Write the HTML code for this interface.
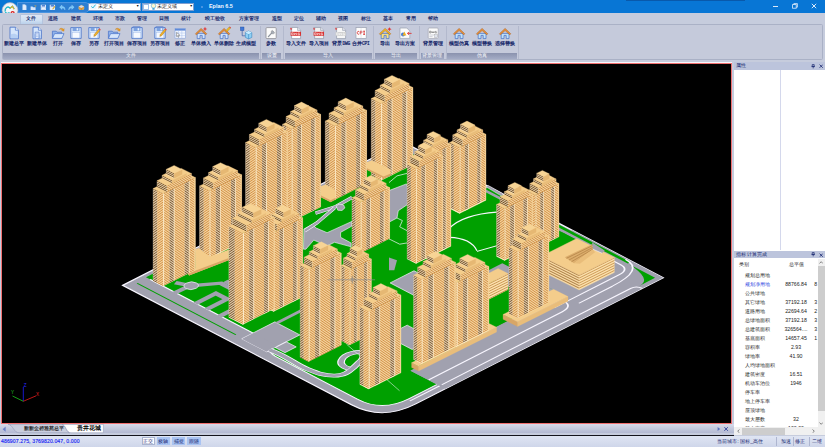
<!DOCTYPE html>
<html><head><meta charset="utf-8"><title>Eplan 6.5</title><style>
*{box-sizing:border-box;margin:0;padding:0}
html,body{width:825px;height:447px;overflow:hidden;background:#c6ccdd;font-family:"Liberation Sans", sans-serif;}
body{position:relative}
.abs{position:absolute}
.t{position:absolute;white-space:nowrap;line-height:1;}
.c{transform:translateX(-50%);text-align:center}
#title{left:0;top:0;width:825px;height:13.4px;background:#0876d5}
#tabs{left:0;top:13.4px;width:825px;height:11px;background:#c6ccdd}
.tab{font-size:5.15px;color:#121e66;top:16px;-webkit-text-stroke:.15px #121e66}
#ribbon{left:1.5px;top:24.2px;width:821.5px;height:36.3px;background:#c5cadb;border:0.6px solid #aab1c6;border-radius:1.5px}
.lbl{font-size:5.3px;color:#121e66;top:41.2px;-webkit-text-stroke:.2px #121e66}
.grp{position:absolute;top:53.2px;height:5.6px;background:linear-gradient(#8a92ae,#a3abc5);font-size:4.8px;color:#f6f8fd;text-align:center;line-height:5.6px;overflow:hidden}
.mono{font-family:"Liberation Mono",monospace;font-size:4.5px;letter-spacing:-.1px}
.sep{position:absolute;top:26px;height:33px;width:0.7px;background:#b3b9cd}
.ic{position:absolute;top:25.6px;width:14px;height:14px}
#scene{left:1.4px;top:62.6px;width:730.4px;height:361.4px;background:#000;border:1px solid #f07070}
.ph{position:absolute;left:733.6px;width:91.4px;height:7.6px;background:#bcc4dc;font-size:5.3px;color:#16246e;line-height:7.6px;padding-left:2.4px;white-space:nowrap;overflow:hidden}
.row{font-size:5.2px;color:#1c1c1c}
</style></head><body>
<div id="title" class="abs"></div>
<div class="abs" style="left:626px;top:0;width:119px;height:1.2px;background:#0a56a6;opacity:.9"></div>
<div class="abs" style="left:17px;top:2.2px;width:73px;height:10.4px;background:#2c7ed2;border-radius:0 5px 5px 0;border:0.5px solid #4a94e0"></div>
<svg class="abs" style="left:1px;top:1px" width="18" height="19" viewBox="0 0 18 19"><defs><radialGradient id="orb" cx="50%" cy="35%" r="65%"><stop offset="0" stop-color="#ffffff"/><stop offset=".7" stop-color="#e8eaf0"/><stop offset="1" stop-color="#b8bcc8"/></radialGradient></defs><circle cx="9" cy="9.6" r="8" fill="url(#orb)" stroke="#9aa4be" stroke-width=".6"/><path d="M4.2 10.5 C3.5 7 7 4.5 9 7.2 L11.5 5.2 L13.3 8" fill="none" stroke="#19b7c9" stroke-width="1.3"/><path d="M9 7.4 L11.4 5.4 L13 8.2" fill="none" stroke="#f0b020" stroke-width="1.1"/><path d="M4.4 10.8 C5 12.8 7 13 8.5 11.5" fill="none" stroke="#19b7c9" stroke-width="1.2"/><circle cx="11.6" cy="12" r="2.1" fill="#d82020"/><circle cx="11.6" cy="12" r=".8" fill="#fff"/></svg>
<svg class="abs" style="left:21.1px;top:3.6px;opacity:.9" width="6.8" height="6.8" viewBox="0 0 9 9"><path d="M2.2 .8H5.4L7 2.4V8.2H2.2Z" fill="#f4f8ff" stroke="#d0e2fa" stroke-width=".5"/></svg>
<svg class="abs" style="left:30.1px;top:3.6px;opacity:.9" width="6.8" height="6.8" viewBox="0 0 9 9"><path d="M.8 3.4H3.4L4 4.2H7.4V7.8H.8Z" fill="#eaf2ff"/><path d="M5 2.6C5.8 1.4 7 1.4 7.8 2.4L8.2 1.8V3.8L6.4 3.4L7 3C6.4 2.4 5.8 2.4 5 2.6Z" fill="#f0b030"/></svg>
<svg class="abs" style="left:39.6px;top:3.6px;opacity:.9" width="6.8" height="6.8" viewBox="0 0 9 9"><rect x="1" y="1" width="7" height="7" fill="#eef4ff"/><rect x="2.4" y="1.2" width="4.2" height="2.2" fill="#5c86d0"/><rect x="2.2" y="4.6" width="4.6" height="3" fill="#fff" stroke="#9ab4e4" stroke-width=".3"/></svg>
<svg class="abs" style="left:49.1px;top:3.6px;opacity:.9" width="6.8" height="6.8" viewBox="0 0 9 9"><rect x="1" y="1" width="7" height="7" fill="#eef4ff"/><rect x="2.4" y="1.2" width="4.2" height="2.2" fill="#5c86d0"/><rect x="2.2" y="4.6" width="4.6" height="3" fill="#fff"/><path d="M4.6 6L7.6 2.4L8.6 3.2L5.6 6.8L4.4 7.2Z" fill="#f0b020"/></svg>
<svg class="abs" style="left:59.1px;top:3.6px;opacity:.9" width="6.8" height="6.8" viewBox="0 0 9 9"><path d="M.8 4.2L4 1.4V3.2C7 3.2 8.2 5 8 8C7.2 6.2 6 5.4 4 5.4V7.2Z" fill="#7fd0ff" stroke="#c8ecff" stroke-width=".4"/></svg>
<svg class="abs" style="left:68.1px;top:3.6px;opacity:.9" width="6.8" height="6.8" viewBox="0 0 9 9"><path d="M8.2 4.2L5 1.4V3.2C2 3.2 .8 5 1 8C1.8 6.2 3 5.4 5 5.4V7.2Z" fill="#7fd0ff" stroke="#c8ecff" stroke-width=".4"/></svg>
<svg class="abs" style="left:78.1px;top:3.6px;opacity:.9" width="6.8" height="6.8" viewBox="0 0 9 9"><path d="M1 3.4L4.5 1.6L8 3.4V6.8L4.5 8.6L1 6.8Z" fill="#f0a030" stroke="#f8d8a0" stroke-width=".4"/><path d="M1 3.4L4.5 5.2L8 3.4L4.5 1.6Z" fill="#e8e8f0"/><path d="M4.5 5.2V8.6" stroke="#b06a10" stroke-width=".4"/></svg>
<div class="abs" style="left:88.4px;top:2.6px;width:52.6px;height:8.4px;background:#fff;border:0.5px solid #7f9fd0"></div>
<svg class="abs" style="left:90px;top:3.4px" width="7" height="7" viewBox="0 0 7 7"><rect x=".4" y=".6" width="6" height="5.8" fill="#eaf6ff"/><path d="M1.4 3.4L2.8 5L5.6 1.6" fill="none" stroke="#28b8d8" stroke-width="1"/></svg>
<div class="t" style="left:97.5px;top:4.1px;font-size:5.4px;color:#111">未定义</div>
<div class="t" style="left:136px;top:5.2px;font-size:3.4px;color:#111">▼</div>
<div class="abs" style="left:141.6px;top:2.6px;width:52.4px;height:8.4px;background:#fff;border:0.5px solid #7f9fd0"></div>
<div class="abs" style="left:143px;top:3.6px;width:5.6px;height:6.2px;background:#fff;border:0.5px solid #9fc0ea"></div>
<svg class="abs" style="left:149.5px;top:3.2px" width="7" height="7.4" viewBox="0 0 7 7.4"><circle cx="3.5" cy="2.8" r="2.3" fill="#fdf8d0" stroke="#4aa8d8" stroke-width=".6"/><rect x="2.4" y="5" width="2.2" height="1.8" fill="#4aa8d8"/></svg>
<div class="t" style="left:156.6px;top:4.1px;font-size:5.4px;color:#111">未定义域</div>
<div class="t" style="left:189.4px;top:5.2px;font-size:3.4px;color:#111">▼</div>
<div class="abs" style="left:201.4px;top:6.2px;width:1.4px;height:1.4px;background:#5c9fe6;border-radius:1px"></div>
<div class="t" style="left:209px;top:4px;font-size:5.4px;color:#f4f8ff;font-weight:bold">Eplan 6.5</div>
<div class="abs" style="left:773.2px;top:6.1px;width:4.4px;height:0.8px;background:#d8e8fa"></div>
<svg class="abs" style="left:792px;top:3.4px" width="6" height="6" viewBox="0 0 6 6"><rect x=".6" y="1.6" width="3.6" height="3.6" fill="none" stroke="#e4effc" stroke-width=".8"/><path d="M1.8 1.6V.6H5.4V4.2H4.2" fill="none" stroke="#e4effc" stroke-width=".8"/></svg>
<svg class="abs" style="left:811.4px;top:3.4px" width="6" height="6" viewBox="0 0 6 6"><path d="M.8 .8L5.2 5.2M5.2 .8L.8 5.2" stroke="#f0f6ff" stroke-width=".9"/></svg>
<div id="tabs" class="abs"></div>
<div class="abs" style="left:20px;top:14px;width:22.5px;height:10.4px;background:linear-gradient(#dfe6f4,#cfe0f2 60%,#b9cfea);border:0.5px solid #b4c4de;border-bottom:none;border-radius:1.5px 1.5px 0 0"></div>
<div class="t c tab" style="left:31.1px">文件</div>
<div class="t c tab" style="left:53.1px">道路</div>
<div class="t c tab" style="left:75.6px">建筑</div>
<div class="t c tab" style="left:97.6px">环境</div>
<div class="t c tab" style="left:119.6px">市政</div>
<div class="t c tab" style="left:142px">管理</div>
<div class="t c tab" style="left:164.4px">日照</div>
<div class="t c tab" style="left:186.4px">核计</div>
<div class="t c tab" style="left:214.7px">竣工验收</div>
<div class="t c tab" style="left:248.5px">方案管理</div>
<div class="t c tab" style="left:276.8px">造型</div>
<div class="t c tab" style="left:298.5px">定位</div>
<div class="t c tab" style="left:320.8px">辅助</div>
<div class="t c tab" style="left:343.2px">视图</div>
<div class="t c tab" style="left:365.6px">标注</div>
<div class="t c tab" style="left:388px">基本</div>
<div class="t c tab" style="left:410.6px">常用</div>
<div class="t c tab" style="left:433.2px">帮助</div>
<div id="ribbon" class="abs"></div>
<svg class="ic" style="left:7.4px" viewBox="0 0 14 14"><path d="M3 1.2H8.4L11.4 4.2V12.8H3Z" fill="#d6e6fb" stroke="#4470c8" stroke-width=".8" stroke-linejoin="round"/><path d="M8.4 1.2V4.2H11.4" fill="#f4f8ff" stroke="#4470c8" stroke-width=".7"/><path d="M3.6 8.5C6 7.2 9 7.6 10.8 9.4V12.2H3.6Z" fill="#a9c6f0" opacity=".7"/></svg>
<div class="t c lbl" style="left:14.4px">新建总平</div>
<svg class="ic" style="left:30px" viewBox="0 0 14 14"><path d="M3 1.2H8.4L11.4 4.2V12.8H3Z" fill="#d6e6fb" stroke="#4470c8" stroke-width=".8" stroke-linejoin="round"/><path d="M8.4 1.2V4.2H11.4" fill="#f4f8ff" stroke="#4470c8" stroke-width=".7"/><path d="M3.6 8.5C6 7.2 9 7.6 10.8 9.4V12.2H3.6Z" fill="#a9c6f0" opacity=".7"/><path d="M5.2 6.2H9V12.4H5.2ZM6.4 7.4V8.4M7.8 7.4V8.4M6.4 9.6V10.6M7.8 9.6V10.6" fill="#eaf2ff" stroke="#4470c8" stroke-width=".6"/></svg>
<div class="t c lbl" style="left:37px">新建单体</div>
<svg class="ic" style="left:50.8px" viewBox="0 0 14 14"><path d="M1.4 5.2H5.2L6 6.2H10.6V12.2H1.4Z" fill="#8fb2ea" stroke="#4470c8" stroke-width=".7" stroke-linejoin="round"/><path d="M3.6 7.6H13L10.8 12.4H1.4Z" fill="#d6e6fb" stroke="#4470c8" stroke-width=".7" stroke-linejoin="round"/><path d="M8.2 3.4C9.6 1.8 11.4 2 12.4 3.2L13.2 2.6L13 5.2L10.6 4.6L11.4 4C10.6 3 9.4 3 8.2 3.4Z" fill="#f0a020" stroke="#b87010" stroke-width=".3"/></svg>
<div class="t c lbl" style="left:57.8px">打开</div>
<svg class="ic" style="left:68.8px" viewBox="0 0 14 14"><path d="M1.8 1.6H12.2V12.4H1.8Z" fill="#d6e6fb" stroke="#4470c8" stroke-width=".8" stroke-linejoin="round"/><rect x="3.6" y="1.8" width="6.8" height="3.2" fill="#7ea3e0"/><rect x="7.6" y="2.2" width="1.6" height="2.2" fill="#eef4ff"/><rect x="3.2" y="6.4" width="7.6" height="5.6" fill="#f6f9ff" stroke="#9bb7e6" stroke-width=".4"/></svg>
<div class="t c lbl" style="left:75.8px">保存</div>
<svg class="ic" style="left:86.6px" viewBox="0 0 14 14"><path d="M1.8 1.6H12.2V12.4H1.8Z" fill="#d6e6fb" stroke="#4470c8" stroke-width=".8" stroke-linejoin="round"/><rect x="3.6" y="1.8" width="6.8" height="3.2" fill="#7ea3e0"/><rect x="7.6" y="2.2" width="1.6" height="2.2" fill="#eef4ff"/><rect x="3.2" y="6.4" width="7.6" height="5.6" fill="#f6f9ff" stroke="#9bb7e6" stroke-width=".4"/><path d="M7.2 8.6L11.6 3.2L13 4.4L8.6 9.8L6.8 10.4Z" fill="#f2b22a" stroke="#9a6a10" stroke-width=".4"/><path d="M11.6 3.2L12.4 2.2L13.8 3.4L13 4.4Z" fill="#e05050"/></svg>
<div class="t c lbl" style="left:93.6px">另存</div>
<svg class="ic" style="left:106.8px" viewBox="0 0 14 14"><path d="M1.4 5.2H5.2L6 6.2H10.6V12.2H1.4Z" fill="#8fb2ea" stroke="#4470c8" stroke-width=".7" stroke-linejoin="round"/><path d="M3.6 7.6H13L10.8 12.4H1.4Z" fill="#d6e6fb" stroke="#4470c8" stroke-width=".7" stroke-linejoin="round"/><path d="M8.2 3.4C9.6 1.8 11.4 2 12.4 3.2L13.2 2.6L13 5.2L10.6 4.6L11.4 4C10.6 3 9.4 3 8.2 3.4Z" fill="#f0a020" stroke="#b87010" stroke-width=".3"/></svg>
<div class="t c lbl" style="left:113.8px">打开项目</div>
<svg class="ic" style="left:129.6px" viewBox="0 0 14 14"><path d="M1.2 2.6L3 .8H10.4" fill="none" stroke="#4470c8" stroke-width=".7"/><path d="M1.8 1.6H12.2V12.4H1.8Z" fill="#d6e6fb" stroke="#4470c8" stroke-width=".8" stroke-linejoin="round"/><rect x="3.6" y="1.8" width="6.8" height="3.2" fill="#7ea3e0"/><rect x="7.6" y="2.2" width="1.6" height="2.2" fill="#eef4ff"/><rect x="3.2" y="6.4" width="7.6" height="5.6" fill="#f6f9ff" stroke="#9bb7e6" stroke-width=".4"/></svg>
<div class="t c lbl" style="left:136.6px">保存项目</div>
<svg class="ic" style="left:152.8px" viewBox="0 0 14 14"><path d="M1.2 2.6L3 .8H10.4" fill="none" stroke="#4470c8" stroke-width=".7"/><path d="M1.8 1.6H12.2V12.4H1.8Z" fill="#d6e6fb" stroke="#4470c8" stroke-width=".8" stroke-linejoin="round"/><rect x="3.6" y="1.8" width="6.8" height="3.2" fill="#7ea3e0"/><rect x="7.6" y="2.2" width="1.6" height="2.2" fill="#eef4ff"/><rect x="3.2" y="6.4" width="7.6" height="5.6" fill="#f6f9ff" stroke="#9bb7e6" stroke-width=".4"/><path d="M7.2 8.6L11.6 3.2L13 4.4L8.6 9.8L6.8 10.4Z" fill="#f2b22a" stroke="#9a6a10" stroke-width=".4"/><path d="M11.6 3.2L12.4 2.2L13.8 3.4L13 4.4Z" fill="#e05050"/></svg>
<div class="t c lbl" style="left:159.8px">另存项目</div>
<svg class="ic" style="left:172.6px" viewBox="0 0 14 14"><rect x="2" y="2.6" width="10.4" height="9.6" fill="#f4f8ff" stroke="#8aa6dc" stroke-width=".6"/><rect x="2" y="2.6" width="10.4" height="2" fill="#5f8ad8"/><path d="M2 7H12.4M2 9.6H12.4M5.4 4.6V12.2M8.8 4.6V12.2" stroke="#a9c0ea" stroke-width=".5"/><path d="M3.6 6.4L6.8 9.2L5.4 9.4L6 10.8L5.2 11.2L4.6 9.8L3.6 10.6Z" fill="#fff" stroke="#333" stroke-width=".4"/></svg>
<div class="t c lbl" style="left:179.6px">修正</div>
<svg class="ic" style="left:194.2px" viewBox="0 0 14 14"><path d="M3.2 7.4V12.6H6V9.4H8.2V12.6H11V7.4Z" fill="#cfe2fb" stroke="#4470c8" stroke-width=".7" stroke-linejoin="round"/><path d="M1.4 7.8L7.1 2.4L12.8 7.8L11.8 8.8L7.1 4.6L2.4 8.8Z" fill="#e8923a" stroke="#a85a18" stroke-width=".5" stroke-linejoin="round"/><path d="M10.2 2.4L11 .8L11.8 2.4L13.4 3L11.8 3.6L11 5.2L10.2 3.6L8.8 3Z" fill="#e03838"/></svg>
<div class="t c lbl" style="left:201.2px">单体插入</div>
<svg class="ic" style="left:217.4px" viewBox="0 0 14 14"><path d="M3.2 7.4V12.6H6V9.4H8.2V12.6H11V7.4Z" fill="#cfe2fb" stroke="#4470c8" stroke-width=".7" stroke-linejoin="round"/><path d="M1.4 7.8L7.1 2.4L12.8 7.8L11.8 8.8L7.1 4.6L2.4 8.8Z" fill="#e8923a" stroke="#a85a18" stroke-width=".5" stroke-linejoin="round"/><path d="M9 4.4L12.2 1L13.4 2.2L10.2 5.6Z" fill="#f0c020" stroke="#a07808" stroke-width=".4"/><path d="M12.2 1L12.8 .4L14 1.6L13.4 2.2Z" fill="#e03838"/></svg>
<div class="t c lbl" style="left:224.4px">单体删除</div>
<svg class="ic" style="left:239px" viewBox="0 0 14 14"><rect x="1.4" y="1" width="3.6" height="3.6" fill="#3f78d8" stroke="#204a9a" stroke-width=".4"/><path d="M3.2 4.6V9.8H6.4" fill="none" stroke="#204a9a" stroke-width=".6"/><path d="M6.4 6.6L9.6 5L12.8 6.6V11.4L9.6 13L6.4 11.4Z" fill="#8fd0f4" stroke="#2a7ab8" stroke-width=".5"/><path d="M6.4 6.6L9.6 8.2L12.8 6.6M9.6 8.2V13" fill="none" stroke="#2a7ab8" stroke-width=".5"/><path d="M6.4 6.6L9.6 5L12.8 6.6L9.6 8.2Z" fill="#c8ecff"/></svg>
<div class="t c lbl" style="left:246px">生成模型</div>
<svg class="ic" style="left:264.4px" viewBox="0 0 14 14"><rect x="2" y="1.6" width="10.2" height="11" rx="1" fill="#fbfbfb" stroke="#8c8c92" stroke-width=".8"/><path d="M4.4 10.6L9 5.6" stroke="#8e949e" stroke-width="1.3" stroke-linecap="round"/><path d="M8.4 4.2A1.9 1.9 0 1 0 10.8 6.6L9.4 6L9 5Z" fill="#a8aeb8" stroke="#777" stroke-width=".3"/></svg>
<div class="t c lbl" style="left:271.4px">参数</div>
<svg class="ic" style="left:289px" viewBox="0 0 14 14"><path d="M2.6 1.4H8.6L11.6 4.4V12.6H2.6Z" fill="#ffffff" stroke="#8f96a8" stroke-width=".7" stroke-linejoin="round"/><path d="M8.6 1.4V4.4H11.6" fill="#e6e8ee" stroke="#8f96a8" stroke-width=".6"/><rect x="1.6" y="5.8" width="10.4" height="4" fill="#d83030"/><path d="M2.6 6.8H4.2V8.8H2.6ZM5.4 6.8V8.8M5.4 8.8L6.4 7.4L7.4 8.8V6.8M10.6 7H9V8.8H10.6V7.9H9.9" fill="none" stroke="#fff" stroke-width=".55"/><path d="M1 1.6L3.4 2.8L1.8 4.2Z" fill="#e04040"/></svg>
<div class="t c lbl" style="left:296px">导入文件</div>
<svg class="ic" style="left:312.2px" viewBox="0 0 14 14"><path d="M2.6 1.4H8.6L11.6 4.4V12.6H2.6Z" fill="#f1f1f1" stroke="#8f96a8" stroke-width=".7" stroke-linejoin="round"/><path d="M8.6 1.4V4.4H11.6" fill="#e6e8ee" stroke="#8f96a8" stroke-width=".6"/><rect x="1.6" y="5.8" width="10.4" height="4" fill="#d83030"/><path d="M2.6 6.8H4.2V8.8H2.6ZM5.4 6.8V8.8M5.4 8.8L6.4 7.4L7.4 8.8V6.8M10.6 7H9V8.8H10.6V7.9H9.9" fill="none" stroke="#fff" stroke-width=".55"/><path d="M1 1.6L3.4 2.8L1.8 4.2Z" fill="#e04040"/><path d="M1.4 2.4L2.6 1.4" stroke="#8f96a8" stroke-width=".6"/></svg>
<div class="t c lbl" style="left:319.2px">导入项目</div>
<svg class="ic" style="left:334.3px" viewBox="0 0 14 14"><path d="M2.6 1.4H8.6L11.6 4.4V12.6H2.6Z" fill="#f7f7f7" stroke="#8f96a8" stroke-width=".7" stroke-linejoin="round"/><path d="M8.6 1.4V4.4H11.6" fill="#e6e8ee" stroke="#8f96a8" stroke-width=".6"/><rect x="1.6" y="6" width="10.4" height="3.8" fill="#cfcfcf"/><path d="M2.6 6.9H4.2V8.9H2.6ZM5.4 6.9V8.9M5.4 8.9L6.4 7.5L7.4 8.9V6.9M10.6 7.1H9V8.9H10.6V8H9.9" fill="none" stroke="#fff" stroke-width=".55"/><path d="M1 1.6L3.4 2.8L1.8 4.2Z" fill="#e04040"/></svg>
<div class="t c lbl" style="left:341.3px">背景<span class="mono">DWG</span></div>
<svg class="ic" style="left:353.8px" viewBox="0 0 14 14"><rect x="2" y="1.6" width="10.2" height="10.8" fill="#fdfdfd" stroke="#9aa0b0" stroke-width=".7"/><rect x="2.4" y="4.6" width="9.4" height="4" fill="#fff"/><path d="M5 5.4C3.6 5.2 3.2 6 3.2 6.8C3.2 7.8 3.8 8.4 5 8.2M6.2 8.4V5.2H7.4C8.4 5.2 8.4 6.8 7.4 6.8H6.2M9.2 5.2H11M10.1 5.2V8.4M9.2 8.4H11" fill="none" stroke="#d42020" stroke-width=".8"/><path d="M7.1 1.6V12.4" stroke="#c8ccd8" stroke-width=".4"/></svg>
<div class="t c lbl" style="left:360.8px">合并<span class="mono">CPI</span></div>
<svg class="ic" style="left:377.5px" viewBox="0 0 14 14"><path d="M3.2 7.4V12.6H6V9.4H8.2V12.6H11V7.4Z" fill="#f8e080" stroke="#4470c8" stroke-width=".7" stroke-linejoin="round"/><path d="M1.4 7.8L7.1 2.4L12.8 7.8L11.8 8.8L7.1 4.6L2.4 8.8Z" fill="#f4c020" stroke="#a85a18" stroke-width=".5" stroke-linejoin="round"/><path d="M10.6 2.6L11.4 1.2L12.2 2.6L13.6 3.2L12.2 3.8L11.4 5.2L10.6 3.8L9.4 3.2Z" fill="#e03838"/></svg>
<div class="t c lbl" style="left:384.5px">导出</div>
<svg class="ic" style="left:397.8px" viewBox="0 0 14 14"><path d="M2 2H8.8L11.8 5V12.4H2Z" fill="#fbfbfb" stroke="#9aa0b0" stroke-width=".7" stroke-linejoin="round"/><circle cx="5" cy="8.6" r="2" fill="#3f78d8"/><path d="M6.4 5.4L8.4 9.6H4.4Z" fill="#f0b020"/><path d="M13.6 7.4H9.6M11 6L9.4 7.4L11 8.8" fill="none" stroke="#e03838" stroke-width=".9"/></svg>
<div class="t c lbl" style="left:404.8px">导出方案</div>
<svg class="ic" style="left:425.5px" viewBox="0 0 14 14"><rect x="2.2" y="2" width="10" height="10.4" rx="1" fill="#fcfcfc" stroke="#a0a4b0" stroke-width=".7"/><path d="M3.6 5.2H5V7H3.6ZM6 5.2V7L7 5.8L8 7V5.2M10.6 5.4H9.2V7H10.6V6.2" fill="none" stroke="#555" stroke-width=".5"/><path d="M3.4 9H8M3.4 10.6H6.6" stroke="#b0b4c0" stroke-width=".6"/><rect x="8.6" y="8.6" width="3.2" height="3" fill="#dfe3ee" stroke="#888" stroke-width=".3"/></svg>
<div class="t c lbl" style="left:432.5px">背景管理</div>
<svg class="ic" style="left:451.8px" viewBox="0 0 14 14"><path d="M3.2 7.4V12.6H6V9.4H8.2V12.6H11V7.4Z" fill="#bfe0f8" stroke="#4470c8" stroke-width=".7" stroke-linejoin="round"/><path d="M1.4 7.8L7.1 2.4L12.8 7.8L11.8 8.8L7.1 4.6L2.4 8.8Z" fill="#e8923a" stroke="#a85a18" stroke-width=".5" stroke-linejoin="round"/></svg>
<div class="t c lbl" style="left:458.8px">模型仿真</div>
<svg class="ic" style="left:474.8px" viewBox="0 0 14 14"><path d="M3.2 7.4V12.6H6V9.4H8.2V12.6H11V7.4Z" fill="#bfe0f8" stroke="#4470c8" stroke-width=".7" stroke-linejoin="round"/><path d="M1.4 7.8L7.1 2.4L12.8 7.8L11.8 8.8L7.1 4.6L2.4 8.8Z" fill="#e8923a" stroke="#a85a18" stroke-width=".5" stroke-linejoin="round"/></svg>
<div class="t c lbl" style="left:481.8px">模型替换</div>
<svg class="ic" style="left:497.6px" viewBox="0 0 14 14"><path d="M3.2 7.4V12.6H6V9.4H8.2V12.6H11V7.4Z" fill="#bfe0f8" stroke="#4470c8" stroke-width=".7" stroke-linejoin="round"/><path d="M1.4 7.8L7.1 2.4L12.8 7.8L11.8 8.8L7.1 4.6L2.4 8.8Z" fill="#e8923a" stroke="#a85a18" stroke-width=".5" stroke-linejoin="round"/></svg>
<div class="t c lbl" style="left:504.6px">选择替换</div>
<div class="grp" style="left:3.2px;width:255.40000000000003px">文件</div>
<div class="grp" style="left:261.8px;width:19.599999999999966px">设置</div>
<div class="grp" style="left:284.6px;width:87.39999999999998px">导入</div>
<div class="grp" style="left:374.8px;width:42.599999999999966px">导出</div>
<div class="grp" style="left:420.6px;width:23.599999999999966px">背景管理</div>
<div class="grp" style="left:447.4px;width:69.20000000000005px">仿真</div>
<div class="sep" style="left:260.2px"></div>
<div class="sep" style="left:283px"></div>
<div class="sep" style="left:373.4px"></div>
<div class="sep" style="left:419px"></div>
<div class="sep" style="left:445.8px"></div>
<div class="sep" style="left:518px"></div>
<div class="abs" style="left:1px;top:62px;width:731px;height:1px;background:#f6f7fb"></div>
<div id="scene" class="abs"></div>
<svg class="abs" style="left:2.4px;top:63.6px" width="728.4" height="358.6" viewBox="2.4 63.6 728.4 358.6">
<defs><pattern id="sl" width="40" height="2.0" patternUnits="userSpaceOnUse"><rect width="40" height="2.0" fill="#f4d097"/><rect width="40" height="1.04" fill="#96673a"/></pattern><pattern id="sr" width="40" height="2.0" patternUnits="userSpaceOnUse"><rect width="40" height="2.0" fill="#ffe8be"/><rect width="40" height="0.96" fill="#bd7c3a"/></pattern><pattern id="sl2" width="40" height="2.0" patternUnits="userSpaceOnUse"><rect width="40" height="2.0" fill="#f4d097"/><rect width="40" height="1.0" fill="#8a5d30"/></pattern><pattern id="sr2" width="40" height="2.0" patternUnits="userSpaceOnUse"><rect width="40" height="2.0" fill="#ffe8be"/><rect width="40" height="0.9" fill="#b27436"/></pattern><pattern id="ll" width="40" height="2.5" patternUnits="userSpaceOnUse"><rect width="40" height="2.5" fill="#f0c98c"/><rect width="40" height="0.9" fill="#b48448"/></pattern><pattern id="lr" width="40" height="2.5" patternUnits="userSpaceOnUse"><rect width="40" height="2.5" fill="#f8dca6"/><rect width="40" height="0.8" fill="#c08c4e"/></pattern></defs>
<g transform="matrix(0.25970 0.13560 0.28080 -0.14320 123.10 284.90)">
<path d="M0 0H882Q1000 0 1000 118V1000H0Z" fill="#a1a1af" stroke="#f8f6ff" stroke-width="5"/>
<path d="M14 70H465C500 70 515 30 555 30H872Q968 30 968 126V224H866V700H900V975H14Z" fill="#00a000"/>
<path d="M20 33H400" stroke="#00a000" stroke-width="4" fill="none"/>
<path d="M30 70H465C500 70 515 30 555 30H872Q968 30 968 126V224" stroke="#f8f6ff" stroke-width="4.4" fill="none"/>
<path d="M426 30H522V148H426Z M522 60H560V100H522Z" fill="#a1a1af" stroke="#f8f6ff" stroke-width="2"/>
<path d="M428 30H520V70H428Z" fill="#a1a1af"/>
<path d="M434 148V300" stroke="#a1a1af" stroke-width="12" fill="none"/>
<g fill="none" stroke="#a1a1af" stroke-width="17"><path d="M90 104L132 122L179 184H320"/><path d="M127 66Q128 100 132 122"/><path d="M207 68V140H250V68"/><path d="M300 66V200H179"/></g>
<circle cx="132" cy="122" r="19" fill="#a1a1af" stroke="#f8f6ff" stroke-width="2"/>
<g fill="none" stroke="#f8f6ff" stroke-width="20"><path d="M520 42C580 52 620 38 660 43S720 50 740 70S752 110 745 135S735 160 733 175"/><path d="M740 120C700 110 680 150 690 180S720 200 735 170"/></g>
<g fill="none" stroke="#a1a1af" stroke-width="14"><path d="M520 42C580 52 620 38 660 43S720 50 740 70S752 110 745 135S735 160 733 175"/><path d="M740 120C700 110 680 150 690 180S720 200 735 170"/></g>
<path d="M646 200L920 135" stroke="#f8f6ff" stroke-width="1.6" fill="none"/>
<path d="M690 300H790V375H690Z M500 490H640V575H500Z" fill="#a1a1af" stroke="#f8f6ff" stroke-width="2"/>
<path d="M640 690H872V760H640Z M690 760H1000V1000H690Z M650 975H1000V1000H650Z M866 224H1000V1000H866Z" fill="#a1a1af"/>
<path d="M640 880H700V975H640Z" fill="#00a000"/>
<path d="M978 118V224M978 232V905Q978 925 1000 925M935 225V700Q935 735 905 740M935 760V880" stroke="#f8f6ff" stroke-width="4.6" fill="none"/>
<path d="M885 985H985V930Q985 975 885 985Z" fill="#00a000"/>
<path d="M330 990H880" stroke="#00a000" stroke-width="10" fill="none"/>
<path d="M905 700V930Q905 968 870 968H700" fill="none" stroke="#f8f6ff" stroke-width="4.4"/>
<path d="M935 880Q935 995 860 995" fill="none" stroke="#f8f6ff" stroke-width="4.4"/>
</g>
<polygon points="304.3,228.6 312.6,224.0 316.7,227.7 327.5,232.3 352.3,221.0 352.3,225.7 341.0,232.0 341.0,236.9 351.5,242.6 351.5,246.4 334.9,241.9 327.5,245.5 314.2,239.7 306.3,248.8 303.9,248.8" fill="#a1a1af" stroke="#f8f6ff" stroke-width=".6"/>
<polyline points="315.9,212.8 334.9,206.8 352.3,197.2" fill="none" stroke="#f8f6ff" stroke-width="3.4" stroke-linejoin="round" />
<polyline points="315.9,212.8 334.9,206.8 352.3,197.2" fill="none" stroke="#a1a1af" stroke-width="2.4" stroke-linejoin="round" />
<polyline points="305.1,230.3 317.5,222.4 334.9,207.5" fill="none" stroke="#f8f6ff" stroke-width="3.4" stroke-linejoin="round" />
<polyline points="305.1,230.3 317.5,222.4 334.9,207.5" fill="none" stroke="#a1a1af" stroke-width="2.4" stroke-linejoin="round" />
<polygon points="336.6,205.5 339.4,203.8 344.0,204.5 345.3,207.5 342.4,210.1 338.2,209.8" fill="#a1a1af" stroke="#f8f6ff" stroke-width=".6"/>
<polygon points="389.4,190.2 406.8,183.5 408.7,187.5 408.7,203.6 398.7,210.3 397.4,217.6 389.4,221.8" fill="#a1a1af" stroke="#f8f6ff" stroke-width=".6"/>
<polyline points="389.4,182.2 397.4,175.5 408.1,172.8" fill="none" stroke="#f8f6ff" stroke-width="0.7" stroke-linejoin="round" />
<polyline points="397.4,217.6 402.8,220.2 400.1,226.4 407.6,230.4" fill="none" stroke="#f8f6ff" stroke-width="0.7" stroke-linejoin="round" />
<polyline points="389.4,238.5 400.1,243.8 407.6,242.5" fill="none" stroke="#f8f6ff" stroke-width="0.7" stroke-linejoin="round" />
<polygon points="389.4,257.2 397.4,259.9 394.7,269.8 389.4,269.8" fill="#a1a1af" />
<path d="M449.7 228.0 Q463.6 214.1 497.1 211.8" fill="none" stroke="#f8f6ff" stroke-width="1.3"/>
<path d="M449.7 236.9 Q471.4 237.6 477.4 250.3" fill="none" stroke="#f8f6ff" stroke-width="1.3"/>
<polyline points="477.4,251.0 497.1,245.4" fill="none" stroke="#f8f6ff" stroke-width="1.0" stroke-linejoin="round" />
<polygon points="485.9,186.1 488.6,185.0 503.8,193.5 502.0,195.7" fill="#a1a1af" stroke="#f8f6ff" stroke-width=".5"/>
<polygon points="371.7,175.1 381.5,180.0 381.5,103.0 371.7,98.1" fill="#fff0d6" stroke="#fff0d6" stroke-width=".3"/>
<path d="M371.7 98.67l9.8 4.90M371.7 100.39l9.8 4.90M371.7 102.11l9.8 4.90M371.7 103.83l9.8 4.90M371.7 105.55l9.8 4.90M371.7 107.27l9.8 4.90M371.7 108.99l9.8 4.90M371.7 110.71l9.8 4.90M371.7 112.43l9.8 4.90M371.7 114.15l9.8 4.90M371.7 115.87l9.8 4.90M371.7 117.59l9.8 4.90M371.7 119.31l9.8 4.90M371.7 121.03l9.8 4.90M371.7 122.75l9.8 4.90M371.7 124.47l9.8 4.90M371.7 126.19l9.8 4.90M371.7 127.91l9.8 4.90M371.7 129.63l9.8 4.90M371.7 131.35l9.8 4.90M371.7 133.07l9.8 4.90M371.7 134.79l9.8 4.90M371.7 136.51l9.8 4.90M371.7 138.23l9.8 4.90M371.7 139.95l9.8 4.90M371.7 141.67l9.8 4.90M371.7 143.39l9.8 4.90M371.7 145.11l9.8 4.90M371.7 146.83l9.8 4.90M371.7 148.55l9.8 4.90M371.7 150.27l9.8 4.90M371.7 151.99l9.8 4.90M371.7 153.71l9.8 4.90M371.7 155.43l9.8 4.90M371.7 157.15l9.8 4.90M371.7 158.87l9.8 4.90M371.7 160.59l9.8 4.90M371.7 162.31l9.8 4.90M371.7 164.03l9.8 4.90M371.7 165.75l9.8 4.90M371.7 167.47l9.8 4.90M371.7 169.19l9.8 4.90M371.7 170.91l9.8 4.90M371.7 172.63l9.8 4.90M371.7 174.35l9.8 4.90" stroke="#6e4a20" stroke-width="0.9" fill="none"/>
<polygon points="381.5,180.0 413.3,164.1 413.3,87.1 381.5,103.0" fill="#ffe9bc" stroke="#ffe9bc" stroke-width=".3"/>
<path d="M381.5 103.57l31.8 -15.90M381.5 105.29l31.8 -15.90M381.5 107.01l31.8 -15.90M381.5 108.73l31.8 -15.90M381.5 110.45l31.8 -15.90M381.5 112.17l31.8 -15.90M381.5 113.89l31.8 -15.90M381.5 115.61l31.8 -15.90M381.5 117.33l31.8 -15.90M381.5 119.05l31.8 -15.90M381.5 120.77l31.8 -15.90M381.5 122.49l31.8 -15.90M381.5 124.21l31.8 -15.90M381.5 125.93l31.8 -15.90M381.5 127.65l31.8 -15.90M381.5 129.37l31.8 -15.90M381.5 131.09l31.8 -15.90M381.5 132.81l31.8 -15.90M381.5 134.53l31.8 -15.90M381.5 136.25l31.8 -15.90M381.5 137.97l31.8 -15.90M381.5 139.69l31.8 -15.90M381.5 141.41l31.8 -15.90M381.5 143.13l31.8 -15.90M381.5 144.85l31.8 -15.90M381.5 146.57l31.8 -15.90M381.5 148.29l31.8 -15.90M381.5 150.01l31.8 -15.90M381.5 151.73l31.8 -15.90M381.5 153.45l31.8 -15.90M381.5 155.17l31.8 -15.90M381.5 156.89l31.8 -15.90M381.5 158.61l31.8 -15.90M381.5 160.33l31.8 -15.90M381.5 162.05l31.8 -15.90M381.5 163.77l31.8 -15.90M381.5 165.49l31.8 -15.90M381.5 167.21l31.8 -15.90M381.5 168.93l31.8 -15.90M381.5 170.65l31.8 -15.90M381.5 172.37l31.8 -15.90M381.5 174.09l31.8 -15.90M381.5 175.81l31.8 -15.90M381.5 177.53l31.8 -15.90M381.5 179.25l31.8 -15.90" stroke="#cf8a3e" stroke-width="0.92" fill="none"/>
<polygon points="381.5,180.0 382.5,179.5 382.5,102.5 381.5,103.0" fill="#fff0d0" />
<polygon points="387.9,176.8 392.2,174.7 392.2,97.6 387.9,99.8" fill="#fff0d6" />
<path d="M387.9 100.39l4.3 -2.15M387.9 102.11l4.3 -2.15M387.9 103.83l4.3 -2.15M387.9 105.55l4.3 -2.15M387.9 107.27l4.3 -2.15M387.9 108.99l4.3 -2.15M387.9 110.71l4.3 -2.15M387.9 112.43l4.3 -2.15M387.9 114.15l4.3 -2.15M387.9 115.87l4.3 -2.15M387.9 117.59l4.3 -2.15M387.9 119.31l4.3 -2.15M387.9 121.03l4.3 -2.15M387.9 122.75l4.3 -2.15M387.9 124.47l4.3 -2.15M387.9 126.19l4.3 -2.15M387.9 127.91l4.3 -2.15M387.9 129.63l4.3 -2.15M387.9 131.35l4.3 -2.15M387.9 133.07l4.3 -2.15M387.9 134.79l4.3 -2.15M387.9 136.51l4.3 -2.15M387.9 138.23l4.3 -2.15M387.9 139.95l4.3 -2.15M387.9 141.67l4.3 -2.15M387.9 143.39l4.3 -2.15M387.9 145.11l4.3 -2.15M387.9 146.83l4.3 -2.15M387.9 148.55l4.3 -2.15M387.9 150.27l4.3 -2.15M387.9 151.99l4.3 -2.15M387.9 153.71l4.3 -2.15M387.9 155.43l4.3 -2.15M387.9 157.15l4.3 -2.15M387.9 158.87l4.3 -2.15M387.9 160.59l4.3 -2.15M387.9 162.31l4.3 -2.15M387.9 164.03l4.3 -2.15M387.9 165.75l4.3 -2.15M387.9 167.47l4.3 -2.15M387.9 169.19l4.3 -2.15M387.9 170.91l4.3 -2.15M387.9 172.63l4.3 -2.15M387.9 174.35l4.3 -2.15M387.9 176.07l4.3 -2.15" stroke="#6e4a20" stroke-width="0.9" fill="none"/>
<polygon points="392.2,174.7 392.8,174.4 392.8,97.3 392.2,97.6" fill="#fff0d0" />
<polygon points="402.8,169.3 406.9,167.3 406.9,90.2 402.8,92.3" fill="#fff0d6" />
<path d="M402.8 92.92l4.1 -2.07M402.8 94.64l4.1 -2.07M402.8 96.36l4.1 -2.07M402.8 98.08l4.1 -2.07M402.8 99.80l4.1 -2.07M402.8 101.52l4.1 -2.07M402.8 103.24l4.1 -2.07M402.8 104.96l4.1 -2.07M402.8 106.68l4.1 -2.07M402.8 108.40l4.1 -2.07M402.8 110.12l4.1 -2.07M402.8 111.84l4.1 -2.07M402.8 113.56l4.1 -2.07M402.8 115.28l4.1 -2.07M402.8 117.00l4.1 -2.07M402.8 118.72l4.1 -2.07M402.8 120.44l4.1 -2.07M402.8 122.16l4.1 -2.07M402.8 123.88l4.1 -2.07M402.8 125.60l4.1 -2.07M402.8 127.32l4.1 -2.07M402.8 129.04l4.1 -2.07M402.8 130.76l4.1 -2.07M402.8 132.48l4.1 -2.07M402.8 134.20l4.1 -2.07M402.8 135.92l4.1 -2.07M402.8 137.64l4.1 -2.07M402.8 139.36l4.1 -2.07M402.8 141.08l4.1 -2.07M402.8 142.80l4.1 -2.07M402.8 144.52l4.1 -2.07M402.8 146.24l4.1 -2.07M402.8 147.96l4.1 -2.07M402.8 149.68l4.1 -2.07M402.8 151.40l4.1 -2.07M402.8 153.12l4.1 -2.07M402.8 154.84l4.1 -2.07M402.8 156.56l4.1 -2.07M402.8 158.28l4.1 -2.07M402.8 160.00l4.1 -2.07M402.8 161.72l4.1 -2.07M402.8 163.44l4.1 -2.07M402.8 165.16l4.1 -2.07M402.8 166.88l4.1 -2.07M402.8 168.59l4.1 -2.07" stroke="#6e4a20" stroke-width="0.9" fill="none"/>
<polygon points="406.9,167.3 407.6,167.0 407.6,89.9 406.9,90.2" fill="#fff0d0" />
<polygon points="412.3,164.6 413.3,164.1 413.3,87.1 412.3,87.5" fill="#f6d49a" />
<polygon points="381.5,180.0 375.8,177.2 375.8,100.1 381.5,103.0" fill="#ffe9bc" />
<path d="M375.8 100.73l5.7 2.84M375.8 102.45l5.7 2.84M375.8 104.17l5.7 2.84M375.8 105.89l5.7 2.84M375.8 107.61l5.7 2.84M375.8 109.33l5.7 2.84M375.8 111.05l5.7 2.84M375.8 112.77l5.7 2.84M375.8 114.49l5.7 2.84M375.8 116.21l5.7 2.84M375.8 117.93l5.7 2.84M375.8 119.65l5.7 2.84M375.8 121.37l5.7 2.84M375.8 123.09l5.7 2.84M375.8 124.81l5.7 2.84M375.8 126.53l5.7 2.84M375.8 128.25l5.7 2.84M375.8 129.97l5.7 2.84M375.8 131.69l5.7 2.84M375.8 133.41l5.7 2.84M375.8 135.13l5.7 2.84M375.8 136.85l5.7 2.84M375.8 138.57l5.7 2.84M375.8 140.29l5.7 2.84M375.8 142.01l5.7 2.84M375.8 143.73l5.7 2.84M375.8 145.45l5.7 2.84M375.8 147.17l5.7 2.84M375.8 148.89l5.7 2.84M375.8 150.61l5.7 2.84M375.8 152.33l5.7 2.84M375.8 154.05l5.7 2.84M375.8 155.77l5.7 2.84M375.8 157.49l5.7 2.84M375.8 159.21l5.7 2.84M375.8 160.93l5.7 2.84M375.8 162.65l5.7 2.84M375.8 164.37l5.7 2.84M375.8 166.09l5.7 2.84M375.8 167.81l5.7 2.84M375.8 169.53l5.7 2.84M375.8 171.25l5.7 2.84M375.8 172.97l5.7 2.84M375.8 174.69l5.7 2.84M375.8 176.41l5.7 2.84" stroke="#cf8a3e" stroke-width="0.92" fill="none"/>
<polygon points="381.5,103.0 371.7,98.1 403.5,82.2 413.3,87.1" fill="#f4cd8b" stroke="#f4cd8b" stroke-width=".3"/>
<polygon points="375.5,96.2 385.3,101.1 385.3,95.1 375.5,90.2" fill="#fdeccc" stroke="#fdeccc" stroke-width=".3"/>
<path d="M375.5 90.76l9.8 4.90M375.5 92.48l9.8 4.90M375.5 94.20l9.8 4.90M375.5 95.92l9.8 4.90" stroke="#6e4a20" stroke-width="0.95" fill="none"/>
<polygon points="385.3,101.1 409.5,89.0 409.5,83.0 385.3,95.1" fill="#ffe9bc" stroke="#ffe9bc" stroke-width=".3"/>
<path d="M385.3 95.66l24.2 -12.08M385.3 97.38l24.2 -12.08M385.3 99.10l24.2 -12.08M385.3 100.82l24.2 -12.08" stroke="#c8843a" stroke-width="0.9" fill="none"/>
<polygon points="385.3,95.1 375.5,90.2 399.7,78.1 409.5,83.0" fill="#f4cd8b" stroke="#f4cd8b" stroke-width=".3"/>
<polygon points="380.6,87.6 390.4,92.5 390.4,89.7 380.6,84.8" fill="#fdeccc" stroke="#fdeccc" stroke-width=".3"/>
<path d="M380.6 85.42l9.8 4.90M380.6 87.14l9.8 4.90" stroke="#6e4a20" stroke-width="0.95" fill="none"/>
<polygon points="390.4,92.5 404.4,85.5 404.4,82.7 390.4,89.7" fill="#e9bd7a" stroke="#e9bd7a" stroke-width=".3"/>
<polygon points="390.4,89.7 380.6,84.8 394.6,77.8 404.4,82.7" fill="#f4cd8b" stroke="#f4cd8b" stroke-width=".3"/>
<polygon points="384.8,83.7 392.6,87.6 392.6,82.7 384.8,78.8" fill="#fdeccc" stroke="#fdeccc" stroke-width=".3"/>
<path d="M384.8 79.42l7.8 3.92M384.8 81.14l7.8 3.92M384.8 82.86l7.8 3.92" stroke="#6e4a20" stroke-width="0.95" fill="none"/>
<polygon points="392.6,87.6 400.2,83.8 400.2,78.9 392.6,82.7" fill="#e6b873" stroke="#e6b873" stroke-width=".3"/>
<polygon points="392.6,82.7 384.8,78.8 392.4,75.0 400.2,78.9" fill="#f7d495" stroke="#f7d495" stroke-width=".3"/>
<polygon points="366.0,162.0 372.0,160.0 391.0,169.0 391.0,174.5 384.0,177.5 366.0,168.5" fill="#f4cd8b" />
<polygon points="366.0,167.0 384.0,176.0 391.0,173.0 391.0,174.8 384.0,177.8 366.0,168.8" fill="#d8a666" />
<polygon points="325.7,194.1 335.5,199.0 335.5,125.6 325.7,120.7" fill="#fff0d6" stroke="#fff0d6" stroke-width=".3"/>
<path d="M325.7 121.28l9.8 4.90M325.7 123.00l9.8 4.90M325.7 124.72l9.8 4.90M325.7 126.44l9.8 4.90M325.7 128.16l9.8 4.90M325.7 129.88l9.8 4.90M325.7 131.59l9.8 4.90M325.7 133.31l9.8 4.90M325.7 135.04l9.8 4.90M325.7 136.76l9.8 4.90M325.7 138.48l9.8 4.90M325.7 140.20l9.8 4.90M325.7 141.92l9.8 4.90M325.7 143.64l9.8 4.90M325.7 145.36l9.8 4.90M325.7 147.08l9.8 4.90M325.7 148.80l9.8 4.90M325.7 150.52l9.8 4.90M325.7 152.24l9.8 4.90M325.7 153.96l9.8 4.90M325.7 155.68l9.8 4.90M325.7 157.40l9.8 4.90M325.7 159.12l9.8 4.90M325.7 160.84l9.8 4.90M325.7 162.56l9.8 4.90M325.7 164.28l9.8 4.90M325.7 166.00l9.8 4.90M325.7 167.72l9.8 4.90M325.7 169.44l9.8 4.90M325.7 171.16l9.8 4.90M325.7 172.88l9.8 4.90M325.7 174.59l9.8 4.90M325.7 176.31l9.8 4.90M325.7 178.03l9.8 4.90M325.7 179.75l9.8 4.90M325.7 181.47l9.8 4.90M325.7 183.19l9.8 4.90M325.7 184.91l9.8 4.90M325.7 186.63l9.8 4.90M325.7 188.35l9.8 4.90M325.7 190.07l9.8 4.90M325.7 191.79l9.8 4.90M325.7 193.51l9.8 4.90" stroke="#6e4a20" stroke-width="0.9" fill="none"/>
<polygon points="335.5,199.0 367.0,183.2 367.0,109.8 335.5,125.6" fill="#ffe9bc" stroke="#ffe9bc" stroke-width=".3"/>
<path d="M335.5 126.18l31.5 -15.75M335.5 127.90l31.5 -15.75M335.5 129.62l31.5 -15.75M335.5 131.34l31.5 -15.75M335.5 133.06l31.5 -15.75M335.5 134.78l31.5 -15.75M335.5 136.50l31.5 -15.75M335.5 138.22l31.5 -15.75M335.5 139.94l31.5 -15.75M335.5 141.66l31.5 -15.75M335.5 143.38l31.5 -15.75M335.5 145.10l31.5 -15.75M335.5 146.82l31.5 -15.75M335.5 148.54l31.5 -15.75M335.5 150.26l31.5 -15.75M335.5 151.98l31.5 -15.75M335.5 153.70l31.5 -15.75M335.5 155.42l31.5 -15.75M335.5 157.14l31.5 -15.75M335.5 158.86l31.5 -15.75M335.5 160.58l31.5 -15.75M335.5 162.30l31.5 -15.75M335.5 164.02l31.5 -15.75M335.5 165.74l31.5 -15.75M335.5 167.46l31.5 -15.75M335.5 169.18l31.5 -15.75M335.5 170.90l31.5 -15.75M335.5 172.62l31.5 -15.75M335.5 174.34l31.5 -15.75M335.5 176.06l31.5 -15.75M335.5 177.78l31.5 -15.75M335.5 179.50l31.5 -15.75M335.5 181.22l31.5 -15.75M335.5 182.94l31.5 -15.75M335.5 184.66l31.5 -15.75M335.5 186.38l31.5 -15.75M335.5 188.09l31.5 -15.75M335.5 189.81l31.5 -15.75M335.5 191.53l31.5 -15.75M335.5 193.25l31.5 -15.75M335.5 194.97l31.5 -15.75M335.5 196.69l31.5 -15.75M335.5 198.41l31.5 -15.75" stroke="#cf8a3e" stroke-width="0.92" fill="none"/>
<polygon points="335.5,199.0 336.4,198.5 336.4,125.1 335.5,125.6" fill="#fff0d0" />
<polygon points="341.8,195.8 346.1,193.7 346.1,120.3 341.8,122.4" fill="#fff0d6" />
<path d="M341.8 123.03l4.3 -2.13M341.8 124.75l4.3 -2.13M341.8 126.47l4.3 -2.13M341.8 128.19l4.3 -2.13M341.8 129.91l4.3 -2.13M341.8 131.62l4.3 -2.13M341.8 133.34l4.3 -2.13M341.8 135.06l4.3 -2.13M341.8 136.79l4.3 -2.13M341.8 138.51l4.3 -2.13M341.8 140.23l4.3 -2.13M341.8 141.95l4.3 -2.13M341.8 143.67l4.3 -2.13M341.8 145.39l4.3 -2.13M341.8 147.11l4.3 -2.13M341.8 148.83l4.3 -2.13M341.8 150.55l4.3 -2.13M341.8 152.27l4.3 -2.13M341.8 153.99l4.3 -2.13M341.8 155.71l4.3 -2.13M341.8 157.43l4.3 -2.13M341.8 159.15l4.3 -2.13M341.8 160.87l4.3 -2.13M341.8 162.59l4.3 -2.13M341.8 164.31l4.3 -2.13M341.8 166.03l4.3 -2.13M341.8 167.75l4.3 -2.13M341.8 169.47l4.3 -2.13M341.8 171.19l4.3 -2.13M341.8 172.91l4.3 -2.13M341.8 174.62l4.3 -2.13M341.8 176.34l4.3 -2.13M341.8 178.06l4.3 -2.13M341.8 179.78l4.3 -2.13M341.8 181.50l4.3 -2.13M341.8 183.22l4.3 -2.13M341.8 184.94l4.3 -2.13M341.8 186.66l4.3 -2.13M341.8 188.38l4.3 -2.13M341.8 190.10l4.3 -2.13M341.8 191.82l4.3 -2.13M341.8 193.54l4.3 -2.13M341.8 195.26l4.3 -2.13" stroke="#6e4a20" stroke-width="0.9" fill="none"/>
<polygon points="346.1,193.7 346.7,193.4 346.7,120.0 346.1,120.3" fill="#fff0d0" />
<polygon points="356.6,188.4 360.7,186.4 360.7,113.0 356.6,115.0" fill="#fff0d6" />
<path d="M356.6 115.62l4.1 -2.05M356.6 117.34l4.1 -2.05M356.6 119.06l4.1 -2.05M356.6 120.78l4.1 -2.05M356.6 122.50l4.1 -2.05M356.6 124.22l4.1 -2.05M356.6 125.94l4.1 -2.05M356.6 127.66l4.1 -2.05M356.6 129.38l4.1 -2.05M356.6 131.10l4.1 -2.05M356.6 132.82l4.1 -2.05M356.6 134.54l4.1 -2.05M356.6 136.26l4.1 -2.05M356.6 137.98l4.1 -2.05M356.6 139.70l4.1 -2.05M356.6 141.42l4.1 -2.05M356.6 143.14l4.1 -2.05M356.6 144.86l4.1 -2.05M356.6 146.58l4.1 -2.05M356.6 148.30l4.1 -2.05M356.6 150.02l4.1 -2.05M356.6 151.74l4.1 -2.05M356.6 153.46l4.1 -2.05M356.6 155.18l4.1 -2.05M356.6 156.90l4.1 -2.05M356.6 158.62l4.1 -2.05M356.6 160.34l4.1 -2.05M356.6 162.06l4.1 -2.05M356.6 163.78l4.1 -2.05M356.6 165.50l4.1 -2.05M356.6 167.22l4.1 -2.05M356.6 168.94l4.1 -2.05M356.6 170.66l4.1 -2.05M356.6 172.38l4.1 -2.05M356.6 174.10l4.1 -2.05M356.6 175.82l4.1 -2.05M356.6 177.54l4.1 -2.05M356.6 179.26l4.1 -2.05M356.6 180.98l4.1 -2.05M356.6 182.70l4.1 -2.05M356.6 184.42l4.1 -2.05M356.6 186.14l4.1 -2.05M356.6 187.86l4.1 -2.05" stroke="#6e4a20" stroke-width="0.9" fill="none"/>
<polygon points="360.7,186.4 361.3,186.1 361.3,112.7 360.7,113.0" fill="#fff0d0" />
<polygon points="366.1,183.7 367.0,183.2 367.0,109.8 366.1,110.3" fill="#f6d49a" />
<polygon points="335.5,199.0 329.8,196.2 329.8,122.7 335.5,125.6" fill="#ffe9bc" />
<path d="M329.8 123.33l5.7 2.84M329.8 125.05l5.7 2.84M329.8 126.77l5.7 2.84M329.8 128.49l5.7 2.84M329.8 130.21l5.7 2.84M329.8 131.93l5.7 2.84M329.8 133.65l5.7 2.84M329.8 135.37l5.7 2.84M329.8 137.09l5.7 2.84M329.8 138.81l5.7 2.84M329.8 140.53l5.7 2.84M329.8 142.25l5.7 2.84M329.8 143.97l5.7 2.84M329.8 145.69l5.7 2.84M329.8 147.41l5.7 2.84M329.8 149.13l5.7 2.84M329.8 150.85l5.7 2.84M329.8 152.57l5.7 2.84M329.8 154.29l5.7 2.84M329.8 156.01l5.7 2.84M329.8 157.73l5.7 2.84M329.8 159.45l5.7 2.84M329.8 161.17l5.7 2.84M329.8 162.89l5.7 2.84M329.8 164.61l5.7 2.84M329.8 166.33l5.7 2.84M329.8 168.05l5.7 2.84M329.8 169.77l5.7 2.84M329.8 171.49l5.7 2.84M329.8 173.21l5.7 2.84M329.8 174.93l5.7 2.84M329.8 176.65l5.7 2.84M329.8 178.37l5.7 2.84M329.8 180.09l5.7 2.84M329.8 181.81l5.7 2.84M329.8 183.53l5.7 2.84M329.8 185.25l5.7 2.84M329.8 186.97l5.7 2.84M329.8 188.69l5.7 2.84M329.8 190.41l5.7 2.84M329.8 192.13l5.7 2.84M329.8 193.85l5.7 2.84M329.8 195.57l5.7 2.84" stroke="#cf8a3e" stroke-width="0.92" fill="none"/>
<polygon points="335.5,125.6 325.7,120.7 357.2,104.9 367.0,109.8" fill="#f4cd8b" stroke="#f4cd8b" stroke-width=".3"/>
<polygon points="329.5,118.8 339.3,123.7 339.3,117.7 329.5,112.8" fill="#fdeccc" stroke="#fdeccc" stroke-width=".3"/>
<path d="M329.5 113.39l9.8 4.90M329.5 115.11l9.8 4.90M329.5 116.83l9.8 4.90M329.5 118.55l9.8 4.90" stroke="#6e4a20" stroke-width="0.95" fill="none"/>
<polygon points="339.3,123.7 363.2,111.7 363.2,105.7 339.3,117.7" fill="#ffe9bc" stroke="#ffe9bc" stroke-width=".3"/>
<path d="M339.3 118.29l23.9 -11.97M339.3 120.01l23.9 -11.97M339.3 121.73l23.9 -11.97M339.3 123.45l23.9 -11.97" stroke="#c8843a" stroke-width="0.9" fill="none"/>
<polygon points="339.3,117.7 329.5,112.8 353.4,100.8 363.2,105.7" fill="#f4cd8b" stroke="#f4cd8b" stroke-width=".3"/>
<polygon points="334.5,110.3 344.3,115.2 344.3,112.4 334.5,107.5" fill="#fdeccc" stroke="#fdeccc" stroke-width=".3"/>
<path d="M334.5 108.07l9.8 4.90M334.5 109.79l9.8 4.90" stroke="#6e4a20" stroke-width="0.95" fill="none"/>
<polygon points="344.3,115.2 358.2,108.2 358.2,105.4 344.3,112.4" fill="#e9bd7a" stroke="#e9bd7a" stroke-width=".3"/>
<polygon points="344.3,112.4 334.5,107.5 348.4,100.5 358.2,105.4" fill="#f4cd8b" stroke="#f4cd8b" stroke-width=".3"/>
<polygon points="338.6,106.4 346.5,110.3 346.5,105.4 338.6,101.5" fill="#fdeccc" stroke="#fdeccc" stroke-width=".3"/>
<path d="M338.6 102.08l7.8 3.92M338.6 103.80l7.8 3.92M338.6 105.52l7.8 3.92" stroke="#6e4a20" stroke-width="0.95" fill="none"/>
<polygon points="346.5,110.3 354.0,106.5 354.0,101.6 346.5,105.4" fill="#e6b873" stroke="#e6b873" stroke-width=".3"/>
<polygon points="346.5,105.4 338.6,101.5 346.2,97.7 354.0,101.6" fill="#f7d495" stroke="#f7d495" stroke-width=".3"/>
<polygon points="320.5,186.0 326.0,184.0 336.0,190.0 336.0,199.0 331.0,201.5 321.0,196.5" fill="#f4cd8b" />
<polygon points="321.0,194.8 331.0,199.8 336.0,197.3 336.0,199.2 331.0,201.8 321.0,196.8" fill="#d8a666" />
<polygon points="450.0,208.0 460.0,213.0 460.0,147.1 450.0,142.1" fill="#fff0d6" stroke="#fff0d6" stroke-width=".3"/>
<path d="M450.0 142.68l10.0 5.00M450.0 144.40l10.0 5.00M450.0 146.12l10.0 5.00M450.0 147.84l10.0 5.00M450.0 149.56l10.0 5.00M450.0 151.28l10.0 5.00M450.0 153.00l10.0 5.00M450.0 154.72l10.0 5.00M450.0 156.44l10.0 5.00M450.0 158.16l10.0 5.00M450.0 159.88l10.0 5.00M450.0 161.60l10.0 5.00M450.0 163.32l10.0 5.00M450.0 165.04l10.0 5.00M450.0 166.76l10.0 5.00M450.0 168.48l10.0 5.00M450.0 170.20l10.0 5.00M450.0 171.92l10.0 5.00M450.0 173.64l10.0 5.00M450.0 175.36l10.0 5.00M450.0 177.08l10.0 5.00M450.0 178.80l10.0 5.00M450.0 180.52l10.0 5.00M450.0 182.24l10.0 5.00M450.0 183.96l10.0 5.00M450.0 185.68l10.0 5.00M450.0 187.40l10.0 5.00M450.0 189.12l10.0 5.00M450.0 190.84l10.0 5.00M450.0 192.56l10.0 5.00M450.0 194.28l10.0 5.00M450.0 196.00l10.0 5.00M450.0 197.72l10.0 5.00M450.0 199.44l10.0 5.00M450.0 201.16l10.0 5.00M450.0 202.88l10.0 5.00M450.0 204.60l10.0 5.00M450.0 206.32l10.0 5.00" stroke="#6e4a20" stroke-width="0.9" fill="none"/>
<polygon points="460.0,213.0 486.4,199.8 486.4,133.9 460.0,147.1" fill="#ffe9bc" stroke="#ffe9bc" stroke-width=".3"/>
<path d="M460.0 147.68l26.4 -13.20M460.0 149.40l26.4 -13.20M460.0 151.12l26.4 -13.20M460.0 152.84l26.4 -13.20M460.0 154.56l26.4 -13.20M460.0 156.28l26.4 -13.20M460.0 158.00l26.4 -13.20M460.0 159.72l26.4 -13.20M460.0 161.44l26.4 -13.20M460.0 163.16l26.4 -13.20M460.0 164.88l26.4 -13.20M460.0 166.60l26.4 -13.20M460.0 168.32l26.4 -13.20M460.0 170.04l26.4 -13.20M460.0 171.76l26.4 -13.20M460.0 173.48l26.4 -13.20M460.0 175.20l26.4 -13.20M460.0 176.92l26.4 -13.20M460.0 178.64l26.4 -13.20M460.0 180.36l26.4 -13.20M460.0 182.08l26.4 -13.20M460.0 183.80l26.4 -13.20M460.0 185.52l26.4 -13.20M460.0 187.24l26.4 -13.20M460.0 188.96l26.4 -13.20M460.0 190.68l26.4 -13.20M460.0 192.40l26.4 -13.20M460.0 194.12l26.4 -13.20M460.0 195.84l26.4 -13.20M460.0 197.56l26.4 -13.20M460.0 199.28l26.4 -13.20M460.0 201.00l26.4 -13.20M460.0 202.72l26.4 -13.20M460.0 204.44l26.4 -13.20M460.0 206.16l26.4 -13.20M460.0 207.88l26.4 -13.20M460.0 209.60l26.4 -13.20M460.0 211.32l26.4 -13.20" stroke="#cf8a3e" stroke-width="0.92" fill="none"/>
<polygon points="460.0,213.0 460.8,212.6 460.8,146.7 460.0,147.1" fill="#fff0d0" />
<polygon points="465.3,210.4 468.8,208.6 468.8,142.7 465.3,144.4" fill="#fff0d6" />
<path d="M465.3 145.04l3.6 -1.78M465.3 146.76l3.6 -1.78M465.3 148.48l3.6 -1.78M465.3 150.20l3.6 -1.78M465.3 151.92l3.6 -1.78M465.3 153.64l3.6 -1.78M465.3 155.36l3.6 -1.78M465.3 157.08l3.6 -1.78M465.3 158.80l3.6 -1.78M465.3 160.52l3.6 -1.78M465.3 162.24l3.6 -1.78M465.3 163.96l3.6 -1.78M465.3 165.68l3.6 -1.78M465.3 167.40l3.6 -1.78M465.3 169.12l3.6 -1.78M465.3 170.84l3.6 -1.78M465.3 172.56l3.6 -1.78M465.3 174.28l3.6 -1.78M465.3 176.00l3.6 -1.78M465.3 177.72l3.6 -1.78M465.3 179.44l3.6 -1.78M465.3 181.16l3.6 -1.78M465.3 182.88l3.6 -1.78M465.3 184.60l3.6 -1.78M465.3 186.32l3.6 -1.78M465.3 188.04l3.6 -1.78M465.3 189.76l3.6 -1.78M465.3 191.48l3.6 -1.78M465.3 193.20l3.6 -1.78M465.3 194.92l3.6 -1.78M465.3 196.64l3.6 -1.78M465.3 198.36l3.6 -1.78M465.3 200.08l3.6 -1.78M465.3 201.80l3.6 -1.78M465.3 203.52l3.6 -1.78M465.3 205.24l3.6 -1.78M465.3 206.96l3.6 -1.78M465.3 208.68l3.6 -1.78" stroke="#6e4a20" stroke-width="0.9" fill="none"/>
<polygon points="468.8,208.6 469.4,208.3 469.4,142.4 468.8,142.7" fill="#fff0d0" />
<polygon points="477.7,204.2 481.1,202.4 481.1,136.5 477.7,138.2" fill="#fff0d6" />
<path d="M477.7 138.84l3.4 -1.72M477.7 140.56l3.4 -1.72M477.7 142.28l3.4 -1.72M477.7 144.00l3.4 -1.72M477.7 145.72l3.4 -1.72M477.7 147.44l3.4 -1.72M477.7 149.16l3.4 -1.72M477.7 150.88l3.4 -1.72M477.7 152.60l3.4 -1.72M477.7 154.32l3.4 -1.72M477.7 156.04l3.4 -1.72M477.7 157.76l3.4 -1.72M477.7 159.48l3.4 -1.72M477.7 161.20l3.4 -1.72M477.7 162.92l3.4 -1.72M477.7 164.64l3.4 -1.72M477.7 166.36l3.4 -1.72M477.7 168.08l3.4 -1.72M477.7 169.80l3.4 -1.72M477.7 171.52l3.4 -1.72M477.7 173.24l3.4 -1.72M477.7 174.96l3.4 -1.72M477.7 176.68l3.4 -1.72M477.7 178.40l3.4 -1.72M477.7 180.12l3.4 -1.72M477.7 181.84l3.4 -1.72M477.7 183.56l3.4 -1.72M477.7 185.28l3.4 -1.72M477.7 187.00l3.4 -1.72M477.7 188.72l3.4 -1.72M477.7 190.44l3.4 -1.72M477.7 192.16l3.4 -1.72M477.7 193.88l3.4 -1.72M477.7 195.60l3.4 -1.72M477.7 197.32l3.4 -1.72M477.7 199.04l3.4 -1.72M477.7 200.76l3.4 -1.72M477.7 202.48l3.4 -1.72" stroke="#6e4a20" stroke-width="0.9" fill="none"/>
<polygon points="481.1,202.4 481.6,202.2 481.6,136.3 481.1,136.5" fill="#fff0d0" />
<polygon points="485.6,200.2 486.4,199.8 486.4,133.9 485.6,134.3" fill="#f6d49a" />
<polygon points="460.0,213.0 454.2,210.1 454.2,144.2 460.0,147.1" fill="#ffe9bc" />
<path d="M454.2 144.78l5.8 2.90M454.2 146.50l5.8 2.90M454.2 148.22l5.8 2.90M454.2 149.94l5.8 2.90M454.2 151.66l5.8 2.90M454.2 153.38l5.8 2.90M454.2 155.10l5.8 2.90M454.2 156.82l5.8 2.90M454.2 158.54l5.8 2.90M454.2 160.26l5.8 2.90M454.2 161.98l5.8 2.90M454.2 163.70l5.8 2.90M454.2 165.42l5.8 2.90M454.2 167.14l5.8 2.90M454.2 168.86l5.8 2.90M454.2 170.58l5.8 2.90M454.2 172.30l5.8 2.90M454.2 174.02l5.8 2.90M454.2 175.74l5.8 2.90M454.2 177.46l5.8 2.90M454.2 179.18l5.8 2.90M454.2 180.90l5.8 2.90M454.2 182.62l5.8 2.90M454.2 184.34l5.8 2.90M454.2 186.06l5.8 2.90M454.2 187.78l5.8 2.90M454.2 189.50l5.8 2.90M454.2 191.22l5.8 2.90M454.2 192.94l5.8 2.90M454.2 194.66l5.8 2.90M454.2 196.38l5.8 2.90M454.2 198.10l5.8 2.90M454.2 199.82l5.8 2.90M454.2 201.54l5.8 2.90M454.2 203.26l5.8 2.90M454.2 204.98l5.8 2.90M454.2 206.70l5.8 2.90M454.2 208.42l5.8 2.90" stroke="#cf8a3e" stroke-width="0.92" fill="none"/>
<polygon points="460.0,147.1 450.0,142.1 476.4,128.9 486.4,133.9" fill="#f4cd8b" stroke="#f4cd8b" stroke-width=".3"/>
<polygon points="453.2,140.5 463.2,145.5 463.2,139.5 453.2,134.5" fill="#fdeccc" stroke="#fdeccc" stroke-width=".3"/>
<path d="M453.2 135.10l10.0 5.00M453.2 136.82l10.0 5.00M453.2 138.54l10.0 5.00M453.2 140.26l10.0 5.00" stroke="#6e4a20" stroke-width="0.95" fill="none"/>
<polygon points="463.2,145.5 483.2,135.5 483.2,129.5 463.2,139.5" fill="#ffe9bc" stroke="#ffe9bc" stroke-width=".3"/>
<path d="M463.2 140.10l20.1 -10.03M463.2 141.82l20.1 -10.03M463.2 143.54l20.1 -10.03M463.2 145.26l20.1 -10.03" stroke="#c8843a" stroke-width="0.9" fill="none"/>
<polygon points="463.2,139.5 453.2,134.5 473.2,124.5 483.2,129.5" fill="#f4cd8b" stroke="#f4cd8b" stroke-width=".3"/>
<polygon points="457.4,132.4 467.4,137.4 467.4,134.6 457.4,129.6" fill="#fdeccc" stroke="#fdeccc" stroke-width=".3"/>
<path d="M457.4 130.19l10.0 5.00M457.4 131.91l10.0 5.00" stroke="#6e4a20" stroke-width="0.95" fill="none"/>
<polygon points="467.4,137.4 479.0,131.6 479.0,128.8 467.4,134.6" fill="#e9bd7a" stroke="#e9bd7a" stroke-width=".3"/>
<polygon points="467.4,134.6 457.4,129.6 469.0,123.8 479.0,128.8" fill="#f4cd8b" stroke="#f4cd8b" stroke-width=".3"/>
<polygon points="461.0,128.8 469.0,132.8 469.0,127.9 461.0,123.9" fill="#fdeccc" stroke="#fdeccc" stroke-width=".3"/>
<path d="M461.0 124.47l8.0 4.00M461.0 126.19l8.0 4.00M461.0 127.91l8.0 4.00" stroke="#6e4a20" stroke-width="0.95" fill="none"/>
<polygon points="469.0,132.8 475.4,129.6 475.4,124.7 469.0,127.9" fill="#e6b873" stroke="#e6b873" stroke-width=".3"/>
<polygon points="469.0,127.9 461.0,123.9 467.4,120.7 475.4,124.7" fill="#f7d495" stroke="#f7d495" stroke-width=".3"/>
<polygon points="283.0,216.5 292.0,221.0 292.0,128.4 283.0,123.9" fill="#fff0d6" stroke="#fff0d6" stroke-width=".3"/>
<path d="M283.0 124.54l9.0 4.50M283.0 126.26l9.0 4.50M283.0 127.98l9.0 4.50M283.0 129.70l9.0 4.50M283.0 131.42l9.0 4.50M283.0 133.14l9.0 4.50M283.0 134.86l9.0 4.50M283.0 136.58l9.0 4.50M283.0 138.30l9.0 4.50M283.0 140.02l9.0 4.50M283.0 141.74l9.0 4.50M283.0 143.46l9.0 4.50M283.0 145.18l9.0 4.50M283.0 146.90l9.0 4.50M283.0 148.62l9.0 4.50M283.0 150.34l9.0 4.50M283.0 152.06l9.0 4.50M283.0 153.78l9.0 4.50M283.0 155.50l9.0 4.50M283.0 157.22l9.0 4.50M283.0 158.94l9.0 4.50M283.0 160.66l9.0 4.50M283.0 162.38l9.0 4.50M283.0 164.10l9.0 4.50M283.0 165.82l9.0 4.50M283.0 167.54l9.0 4.50M283.0 169.26l9.0 4.50M283.0 170.98l9.0 4.50M283.0 172.70l9.0 4.50M283.0 174.42l9.0 4.50M283.0 176.14l9.0 4.50M283.0 177.86l9.0 4.50M283.0 179.58l9.0 4.50M283.0 181.30l9.0 4.50M283.0 183.02l9.0 4.50M283.0 184.74l9.0 4.50M283.0 186.46l9.0 4.50M283.0 188.18l9.0 4.50M283.0 189.90l9.0 4.50M283.0 191.62l9.0 4.50M283.0 193.34l9.0 4.50M283.0 195.06l9.0 4.50M283.0 196.78l9.0 4.50M283.0 198.50l9.0 4.50M283.0 200.22l9.0 4.50M283.0 201.94l9.0 4.50M283.0 203.66l9.0 4.50M283.0 205.38l9.0 4.50M283.0 207.10l9.0 4.50M283.0 208.82l9.0 4.50M283.0 210.54l9.0 4.50M283.0 212.26l9.0 4.50M283.0 213.98l9.0 4.50M283.0 215.70l9.0 4.50" stroke="#6e4a20" stroke-width="0.9" fill="none"/>
<polygon points="292.0,221.0 321.0,206.5 321.0,113.9 292.0,128.4" fill="#ffe9bc" stroke="#ffe9bc" stroke-width=".3"/>
<path d="M292.0 129.04l29.0 -14.50M292.0 130.76l29.0 -14.50M292.0 132.48l29.0 -14.50M292.0 134.20l29.0 -14.50M292.0 135.92l29.0 -14.50M292.0 137.64l29.0 -14.50M292.0 139.36l29.0 -14.50M292.0 141.08l29.0 -14.50M292.0 142.80l29.0 -14.50M292.0 144.52l29.0 -14.50M292.0 146.24l29.0 -14.50M292.0 147.96l29.0 -14.50M292.0 149.68l29.0 -14.50M292.0 151.40l29.0 -14.50M292.0 153.12l29.0 -14.50M292.0 154.84l29.0 -14.50M292.0 156.56l29.0 -14.50M292.0 158.28l29.0 -14.50M292.0 160.00l29.0 -14.50M292.0 161.72l29.0 -14.50M292.0 163.44l29.0 -14.50M292.0 165.16l29.0 -14.50M292.0 166.88l29.0 -14.50M292.0 168.60l29.0 -14.50M292.0 170.32l29.0 -14.50M292.0 172.04l29.0 -14.50M292.0 173.76l29.0 -14.50M292.0 175.48l29.0 -14.50M292.0 177.20l29.0 -14.50M292.0 178.92l29.0 -14.50M292.0 180.64l29.0 -14.50M292.0 182.36l29.0 -14.50M292.0 184.08l29.0 -14.50M292.0 185.80l29.0 -14.50M292.0 187.52l29.0 -14.50M292.0 189.24l29.0 -14.50M292.0 190.96l29.0 -14.50M292.0 192.68l29.0 -14.50M292.0 194.40l29.0 -14.50M292.0 196.12l29.0 -14.50M292.0 197.84l29.0 -14.50M292.0 199.56l29.0 -14.50M292.0 201.28l29.0 -14.50M292.0 203.00l29.0 -14.50M292.0 204.72l29.0 -14.50M292.0 206.44l29.0 -14.50M292.0 208.16l29.0 -14.50M292.0 209.88l29.0 -14.50M292.0 211.60l29.0 -14.50M292.0 213.32l29.0 -14.50M292.0 215.04l29.0 -14.50M292.0 216.76l29.0 -14.50M292.0 218.48l29.0 -14.50M292.0 220.20l29.0 -14.50" stroke="#cf8a3e" stroke-width="0.92" fill="none"/>
<polygon points="292.0,221.0 292.9,220.6 292.9,128.0 292.0,128.4" fill="#fff0d0" />
<polygon points="297.8,218.1 301.7,216.1 301.7,123.6 297.8,125.5" fill="#fff0d6" />
<path d="M297.8 126.14l3.9 -1.96M297.8 127.86l3.9 -1.96M297.8 129.58l3.9 -1.96M297.8 131.30l3.9 -1.96M297.8 133.02l3.9 -1.96M297.8 134.74l3.9 -1.96M297.8 136.46l3.9 -1.96M297.8 138.18l3.9 -1.96M297.8 139.90l3.9 -1.96M297.8 141.62l3.9 -1.96M297.8 143.34l3.9 -1.96M297.8 145.06l3.9 -1.96M297.8 146.78l3.9 -1.96M297.8 148.50l3.9 -1.96M297.8 150.22l3.9 -1.96M297.8 151.94l3.9 -1.96M297.8 153.66l3.9 -1.96M297.8 155.38l3.9 -1.96M297.8 157.10l3.9 -1.96M297.8 158.82l3.9 -1.96M297.8 160.54l3.9 -1.96M297.8 162.26l3.9 -1.96M297.8 163.98l3.9 -1.96M297.8 165.70l3.9 -1.96M297.8 167.42l3.9 -1.96M297.8 169.14l3.9 -1.96M297.8 170.86l3.9 -1.96M297.8 172.58l3.9 -1.96M297.8 174.30l3.9 -1.96M297.8 176.02l3.9 -1.96M297.8 177.74l3.9 -1.96M297.8 179.46l3.9 -1.96M297.8 181.18l3.9 -1.96M297.8 182.90l3.9 -1.96M297.8 184.62l3.9 -1.96M297.8 186.34l3.9 -1.96M297.8 188.06l3.9 -1.96M297.8 189.78l3.9 -1.96M297.8 191.50l3.9 -1.96M297.8 193.22l3.9 -1.96M297.8 194.94l3.9 -1.96M297.8 196.66l3.9 -1.96M297.8 198.38l3.9 -1.96M297.8 200.10l3.9 -1.96M297.8 201.82l3.9 -1.96M297.8 203.54l3.9 -1.96M297.8 205.26l3.9 -1.96M297.8 206.98l3.9 -1.96M297.8 208.70l3.9 -1.96M297.8 210.42l3.9 -1.96M297.8 212.14l3.9 -1.96M297.8 213.86l3.9 -1.96M297.8 215.58l3.9 -1.96M297.8 217.30l3.9 -1.96" stroke="#6e4a20" stroke-width="0.9" fill="none"/>
<polygon points="301.7,216.1 302.3,215.9 302.3,123.3 301.7,123.6" fill="#fff0d0" />
<polygon points="311.4,211.3 315.2,209.4 315.2,116.8 311.4,118.7" fill="#fff0d6" />
<path d="M311.4 119.32l3.8 -1.88M311.4 121.04l3.8 -1.88M311.4 122.77l3.8 -1.88M311.4 124.48l3.8 -1.88M311.4 126.20l3.8 -1.88M311.4 127.92l3.8 -1.88M311.4 129.64l3.8 -1.88M311.4 131.37l3.8 -1.88M311.4 133.09l3.8 -1.88M311.4 134.81l3.8 -1.88M311.4 136.53l3.8 -1.88M311.4 138.25l3.8 -1.88M311.4 139.97l3.8 -1.88M311.4 141.69l3.8 -1.88M311.4 143.41l3.8 -1.88M311.4 145.12l3.8 -1.88M311.4 146.84l3.8 -1.88M311.4 148.56l3.8 -1.88M311.4 150.28l3.8 -1.88M311.4 152.00l3.8 -1.88M311.4 153.72l3.8 -1.88M311.4 155.44l3.8 -1.88M311.4 157.16l3.8 -1.88M311.4 158.88l3.8 -1.88M311.4 160.60l3.8 -1.88M311.4 162.32l3.8 -1.88M311.4 164.04l3.8 -1.88M311.4 165.76l3.8 -1.88M311.4 167.48l3.8 -1.88M311.4 169.20l3.8 -1.88M311.4 170.92l3.8 -1.88M311.4 172.64l3.8 -1.88M311.4 174.36l3.8 -1.88M311.4 176.08l3.8 -1.88M311.4 177.80l3.8 -1.88M311.4 179.52l3.8 -1.88M311.4 181.24l3.8 -1.88M311.4 182.96l3.8 -1.88M311.4 184.68l3.8 -1.88M311.4 186.40l3.8 -1.88M311.4 188.12l3.8 -1.88M311.4 189.84l3.8 -1.88M311.4 191.56l3.8 -1.88M311.4 193.28l3.8 -1.88M311.4 195.00l3.8 -1.88M311.4 196.72l3.8 -1.88M311.4 198.44l3.8 -1.88M311.4 200.16l3.8 -1.88M311.4 201.88l3.8 -1.88M311.4 203.60l3.8 -1.88M311.4 205.32l3.8 -1.88M311.4 207.04l3.8 -1.88M311.4 208.76l3.8 -1.88M311.4 210.48l3.8 -1.88" stroke="#6e4a20" stroke-width="0.9" fill="none"/>
<polygon points="315.2,209.4 315.8,209.1 315.8,116.6 315.2,116.8" fill="#fff0d0" />
<polygon points="320.1,206.9 321.0,206.5 321.0,113.9 320.1,114.4" fill="#f6d49a" />
<polygon points="292.0,221.0 286.8,218.4 286.8,125.8 292.0,128.4" fill="#ffe9bc" />
<path d="M286.8 126.43l5.2 2.61M286.8 128.15l5.2 2.61M286.8 129.87l5.2 2.61M286.8 131.59l5.2 2.61M286.8 133.31l5.2 2.61M286.8 135.03l5.2 2.61M286.8 136.75l5.2 2.61M286.8 138.47l5.2 2.61M286.8 140.19l5.2 2.61M286.8 141.91l5.2 2.61M286.8 143.63l5.2 2.61M286.8 145.35l5.2 2.61M286.8 147.07l5.2 2.61M286.8 148.79l5.2 2.61M286.8 150.51l5.2 2.61M286.8 152.23l5.2 2.61M286.8 153.95l5.2 2.61M286.8 155.67l5.2 2.61M286.8 157.39l5.2 2.61M286.8 159.11l5.2 2.61M286.8 160.83l5.2 2.61M286.8 162.55l5.2 2.61M286.8 164.27l5.2 2.61M286.8 165.99l5.2 2.61M286.8 167.71l5.2 2.61M286.8 169.43l5.2 2.61M286.8 171.15l5.2 2.61M286.8 172.87l5.2 2.61M286.8 174.59l5.2 2.61M286.8 176.31l5.2 2.61M286.8 178.03l5.2 2.61M286.8 179.75l5.2 2.61M286.8 181.47l5.2 2.61M286.8 183.19l5.2 2.61M286.8 184.91l5.2 2.61M286.8 186.63l5.2 2.61M286.8 188.35l5.2 2.61M286.8 190.07l5.2 2.61M286.8 191.79l5.2 2.61M286.8 193.51l5.2 2.61M286.8 195.23l5.2 2.61M286.8 196.95l5.2 2.61M286.8 198.67l5.2 2.61M286.8 200.39l5.2 2.61M286.8 202.11l5.2 2.61M286.8 203.83l5.2 2.61M286.8 205.55l5.2 2.61M286.8 207.27l5.2 2.61M286.8 208.99l5.2 2.61M286.8 210.71l5.2 2.61M286.8 212.43l5.2 2.61M286.8 214.15l5.2 2.61M286.8 215.87l5.2 2.61M286.8 217.59l5.2 2.61" stroke="#cf8a3e" stroke-width="0.92" fill="none"/>
<polygon points="292.0,128.4 283.0,123.9 312.0,109.4 321.0,113.9" fill="#f4cd8b" stroke="#f4cd8b" stroke-width=".3"/>
<polygon points="286.5,122.2 295.5,126.7 295.5,120.7 286.5,116.2" fill="#fdeccc" stroke="#fdeccc" stroke-width=".3"/>
<path d="M286.5 116.80l9.0 4.50M286.5 118.52l9.0 4.50M286.5 120.24l9.0 4.50M286.5 121.96l9.0 4.50" stroke="#6e4a20" stroke-width="0.95" fill="none"/>
<polygon points="295.5,126.7 317.5,115.7 317.5,109.7 295.5,120.7" fill="#ffe9bc" stroke="#ffe9bc" stroke-width=".3"/>
<path d="M295.5 121.30l22.0 -11.02M295.5 123.02l22.0 -11.02M295.5 124.74l22.0 -11.02M295.5 126.46l22.0 -11.02" stroke="#c8843a" stroke-width="0.9" fill="none"/>
<polygon points="295.5,120.7 286.5,116.2 308.5,105.2 317.5,109.7" fill="#f4cd8b" stroke="#f4cd8b" stroke-width=".3"/>
<polygon points="291.1,113.9 300.1,118.4 300.1,115.6 291.1,111.1" fill="#fdeccc" stroke="#fdeccc" stroke-width=".3"/>
<path d="M291.1 111.68l9.0 4.50M291.1 113.40l9.0 4.50" stroke="#6e4a20" stroke-width="0.95" fill="none"/>
<polygon points="300.1,118.4 312.9,112.0 312.9,109.2 300.1,115.6" fill="#e9bd7a" stroke="#e9bd7a" stroke-width=".3"/>
<polygon points="300.1,115.6 291.1,111.1 303.9,104.7 312.9,109.2" fill="#f4cd8b" stroke="#f4cd8b" stroke-width=".3"/>
<polygon points="294.9,110.1 302.1,113.7 302.1,108.8 294.9,105.2" fill="#fdeccc" stroke="#fdeccc" stroke-width=".3"/>
<path d="M294.9 105.78l7.2 3.60M294.9 107.50l7.2 3.60M294.9 109.22l7.2 3.60" stroke="#6e4a20" stroke-width="0.95" fill="none"/>
<polygon points="302.1,113.7 309.1,110.2 309.1,105.3 302.1,108.8" fill="#e6b873" stroke="#e6b873" stroke-width=".3"/>
<polygon points="302.1,108.8 294.9,105.2 301.9,101.7 309.1,105.3" fill="#f7d495" stroke="#f7d495" stroke-width=".3"/>
<polygon points="246.0,235.0 256.0,240.0 256.0,147.1 246.0,142.1" fill="#fff0d6" stroke="#fff0d6" stroke-width=".3"/>
<path d="M246.0 142.72l10.0 5.00M246.0 144.44l10.0 5.00M246.0 146.16l10.0 5.00M246.0 147.88l10.0 5.00M246.0 149.60l10.0 5.00M246.0 151.32l10.0 5.00M246.0 153.04l10.0 5.00M246.0 154.76l10.0 5.00M246.0 156.48l10.0 5.00M246.0 158.20l10.0 5.00M246.0 159.92l10.0 5.00M246.0 161.64l10.0 5.00M246.0 163.36l10.0 5.00M246.0 165.08l10.0 5.00M246.0 166.80l10.0 5.00M246.0 168.52l10.0 5.00M246.0 170.24l10.0 5.00M246.0 171.96l10.0 5.00M246.0 173.68l10.0 5.00M246.0 175.40l10.0 5.00M246.0 177.12l10.0 5.00M246.0 178.84l10.0 5.00M246.0 180.56l10.0 5.00M246.0 182.28l10.0 5.00M246.0 184.00l10.0 5.00M246.0 185.72l10.0 5.00M246.0 187.44l10.0 5.00M246.0 189.16l10.0 5.00M246.0 190.88l10.0 5.00M246.0 192.60l10.0 5.00M246.0 194.32l10.0 5.00M246.0 196.04l10.0 5.00M246.0 197.76l10.0 5.00M246.0 199.48l10.0 5.00M246.0 201.20l10.0 5.00M246.0 202.92l10.0 5.00M246.0 204.64l10.0 5.00M246.0 206.36l10.0 5.00M246.0 208.08l10.0 5.00M246.0 209.80l10.0 5.00M246.0 211.52l10.0 5.00M246.0 213.24l10.0 5.00M246.0 214.96l10.0 5.00M246.0 216.68l10.0 5.00M246.0 218.40l10.0 5.00M246.0 220.12l10.0 5.00M246.0 221.84l10.0 5.00M246.0 223.56l10.0 5.00M246.0 225.28l10.0 5.00M246.0 227.00l10.0 5.00M246.0 228.72l10.0 5.00M246.0 230.44l10.0 5.00M246.0 232.16l10.0 5.00M246.0 233.88l10.0 5.00" stroke="#6e4a20" stroke-width="0.9" fill="none"/>
<polygon points="256.0,240.0 288.0,224.0 288.0,131.1 256.0,147.1" fill="#ffe9bc" stroke="#ffe9bc" stroke-width=".3"/>
<path d="M256.0 147.72l32.0 -16.00M256.0 149.44l32.0 -16.00M256.0 151.16l32.0 -16.00M256.0 152.88l32.0 -16.00M256.0 154.60l32.0 -16.00M256.0 156.32l32.0 -16.00M256.0 158.04l32.0 -16.00M256.0 159.76l32.0 -16.00M256.0 161.48l32.0 -16.00M256.0 163.20l32.0 -16.00M256.0 164.92l32.0 -16.00M256.0 166.64l32.0 -16.00M256.0 168.36l32.0 -16.00M256.0 170.08l32.0 -16.00M256.0 171.80l32.0 -16.00M256.0 173.52l32.0 -16.00M256.0 175.24l32.0 -16.00M256.0 176.96l32.0 -16.00M256.0 178.68l32.0 -16.00M256.0 180.40l32.0 -16.00M256.0 182.12l32.0 -16.00M256.0 183.84l32.0 -16.00M256.0 185.56l32.0 -16.00M256.0 187.28l32.0 -16.00M256.0 189.00l32.0 -16.00M256.0 190.72l32.0 -16.00M256.0 192.44l32.0 -16.00M256.0 194.16l32.0 -16.00M256.0 195.88l32.0 -16.00M256.0 197.60l32.0 -16.00M256.0 199.32l32.0 -16.00M256.0 201.04l32.0 -16.00M256.0 202.76l32.0 -16.00M256.0 204.48l32.0 -16.00M256.0 206.20l32.0 -16.00M256.0 207.92l32.0 -16.00M256.0 209.64l32.0 -16.00M256.0 211.36l32.0 -16.00M256.0 213.08l32.0 -16.00M256.0 214.80l32.0 -16.00M256.0 216.52l32.0 -16.00M256.0 218.24l32.0 -16.00M256.0 219.96l32.0 -16.00M256.0 221.68l32.0 -16.00M256.0 223.40l32.0 -16.00M256.0 225.12l32.0 -16.00M256.0 226.84l32.0 -16.00M256.0 228.56l32.0 -16.00M256.0 230.28l32.0 -16.00M256.0 232.00l32.0 -16.00M256.0 233.72l32.0 -16.00M256.0 235.44l32.0 -16.00M256.0 237.16l32.0 -16.00M256.0 238.88l32.0 -16.00" stroke="#cf8a3e" stroke-width="0.92" fill="none"/>
<polygon points="256.0,240.0 257.0,239.5 257.0,146.6 256.0,147.1" fill="#fff0d0" />
<polygon points="262.4,236.8 266.7,234.6 266.7,141.8 262.4,143.9" fill="#fff0d6" />
<path d="M262.4 144.52l4.3 -2.16M262.4 146.24l4.3 -2.16M262.4 147.96l4.3 -2.16M262.4 149.68l4.3 -2.16M262.4 151.40l4.3 -2.16M262.4 153.12l4.3 -2.16M262.4 154.84l4.3 -2.16M262.4 156.56l4.3 -2.16M262.4 158.28l4.3 -2.16M262.4 160.00l4.3 -2.16M262.4 161.72l4.3 -2.16M262.4 163.44l4.3 -2.16M262.4 165.16l4.3 -2.16M262.4 166.88l4.3 -2.16M262.4 168.60l4.3 -2.16M262.4 170.32l4.3 -2.16M262.4 172.04l4.3 -2.16M262.4 173.76l4.3 -2.16M262.4 175.48l4.3 -2.16M262.4 177.20l4.3 -2.16M262.4 178.92l4.3 -2.16M262.4 180.64l4.3 -2.16M262.4 182.36l4.3 -2.16M262.4 184.08l4.3 -2.16M262.4 185.80l4.3 -2.16M262.4 187.52l4.3 -2.16M262.4 189.24l4.3 -2.16M262.4 190.96l4.3 -2.16M262.4 192.68l4.3 -2.16M262.4 194.40l4.3 -2.16M262.4 196.12l4.3 -2.16M262.4 197.84l4.3 -2.16M262.4 199.56l4.3 -2.16M262.4 201.28l4.3 -2.16M262.4 203.00l4.3 -2.16M262.4 204.72l4.3 -2.16M262.4 206.44l4.3 -2.16M262.4 208.16l4.3 -2.16M262.4 209.88l4.3 -2.16M262.4 211.60l4.3 -2.16M262.4 213.32l4.3 -2.16M262.4 215.04l4.3 -2.16M262.4 216.76l4.3 -2.16M262.4 218.48l4.3 -2.16M262.4 220.20l4.3 -2.16M262.4 221.92l4.3 -2.16M262.4 223.64l4.3 -2.16M262.4 225.36l4.3 -2.16M262.4 227.08l4.3 -2.16M262.4 228.80l4.3 -2.16M262.4 230.52l4.3 -2.16M262.4 232.24l4.3 -2.16M262.4 233.96l4.3 -2.16M262.4 235.68l4.3 -2.16" stroke="#6e4a20" stroke-width="0.9" fill="none"/>
<polygon points="266.7,234.6 267.4,234.3 267.4,141.4 266.7,141.8" fill="#fff0d0" />
<polygon points="277.4,229.3 281.6,227.2 281.6,134.3 277.4,136.4" fill="#fff0d6" />
<path d="M277.4 137.00l4.2 -2.08M277.4 138.72l4.2 -2.08M277.4 140.44l4.2 -2.08M277.4 142.16l4.2 -2.08M277.4 143.88l4.2 -2.08M277.4 145.60l4.2 -2.08M277.4 147.32l4.2 -2.08M277.4 149.04l4.2 -2.08M277.4 150.76l4.2 -2.08M277.4 152.48l4.2 -2.08M277.4 154.20l4.2 -2.08M277.4 155.92l4.2 -2.08M277.4 157.64l4.2 -2.08M277.4 159.36l4.2 -2.08M277.4 161.08l4.2 -2.08M277.4 162.80l4.2 -2.08M277.4 164.52l4.2 -2.08M277.4 166.24l4.2 -2.08M277.4 167.96l4.2 -2.08M277.4 169.68l4.2 -2.08M277.4 171.40l4.2 -2.08M277.4 173.12l4.2 -2.08M277.4 174.84l4.2 -2.08M277.4 176.56l4.2 -2.08M277.4 178.28l4.2 -2.08M277.4 180.00l4.2 -2.08M277.4 181.72l4.2 -2.08M277.4 183.44l4.2 -2.08M277.4 185.16l4.2 -2.08M277.4 186.88l4.2 -2.08M277.4 188.60l4.2 -2.08M277.4 190.32l4.2 -2.08M277.4 192.04l4.2 -2.08M277.4 193.76l4.2 -2.08M277.4 195.48l4.2 -2.08M277.4 197.20l4.2 -2.08M277.4 198.92l4.2 -2.08M277.4 200.64l4.2 -2.08M277.4 202.36l4.2 -2.08M277.4 204.08l4.2 -2.08M277.4 205.80l4.2 -2.08M277.4 207.52l4.2 -2.08M277.4 209.24l4.2 -2.08M277.4 210.96l4.2 -2.08M277.4 212.68l4.2 -2.08M277.4 214.40l4.2 -2.08M277.4 216.12l4.2 -2.08M277.4 217.84l4.2 -2.08M277.4 219.56l4.2 -2.08M277.4 221.28l4.2 -2.08M277.4 223.00l4.2 -2.08M277.4 224.72l4.2 -2.08M277.4 226.44l4.2 -2.08M277.4 228.16l4.2 -2.08" stroke="#6e4a20" stroke-width="0.9" fill="none"/>
<polygon points="281.6,227.2 282.2,226.9 282.2,134.0 281.6,134.3" fill="#fff0d0" />
<polygon points="287.0,224.5 288.0,224.0 288.0,131.1 287.0,131.6" fill="#f6d49a" />
<polygon points="256.0,240.0 250.2,237.1 250.2,144.2 256.0,147.1" fill="#ffe9bc" />
<path d="M250.2 144.82l5.8 2.90M250.2 146.54l5.8 2.90M250.2 148.26l5.8 2.90M250.2 149.98l5.8 2.90M250.2 151.70l5.8 2.90M250.2 153.42l5.8 2.90M250.2 155.14l5.8 2.90M250.2 156.86l5.8 2.90M250.2 158.58l5.8 2.90M250.2 160.30l5.8 2.90M250.2 162.02l5.8 2.90M250.2 163.74l5.8 2.90M250.2 165.46l5.8 2.90M250.2 167.18l5.8 2.90M250.2 168.90l5.8 2.90M250.2 170.62l5.8 2.90M250.2 172.34l5.8 2.90M250.2 174.06l5.8 2.90M250.2 175.78l5.8 2.90M250.2 177.50l5.8 2.90M250.2 179.22l5.8 2.90M250.2 180.94l5.8 2.90M250.2 182.66l5.8 2.90M250.2 184.38l5.8 2.90M250.2 186.10l5.8 2.90M250.2 187.82l5.8 2.90M250.2 189.54l5.8 2.90M250.2 191.26l5.8 2.90M250.2 192.98l5.8 2.90M250.2 194.70l5.8 2.90M250.2 196.42l5.8 2.90M250.2 198.14l5.8 2.90M250.2 199.86l5.8 2.90M250.2 201.58l5.8 2.90M250.2 203.30l5.8 2.90M250.2 205.02l5.8 2.90M250.2 206.74l5.8 2.90M250.2 208.46l5.8 2.90M250.2 210.18l5.8 2.90M250.2 211.90l5.8 2.90M250.2 213.62l5.8 2.90M250.2 215.34l5.8 2.90M250.2 217.06l5.8 2.90M250.2 218.78l5.8 2.90M250.2 220.50l5.8 2.90M250.2 222.22l5.8 2.90M250.2 223.94l5.8 2.90M250.2 225.66l5.8 2.90M250.2 227.38l5.8 2.90M250.2 229.10l5.8 2.90M250.2 230.82l5.8 2.90M250.2 232.54l5.8 2.90M250.2 234.26l5.8 2.90M250.2 235.98l5.8 2.90" stroke="#cf8a3e" stroke-width="0.92" fill="none"/>
<polygon points="256.0,147.1 246.0,142.1 278.0,126.1 288.0,131.1" fill="#f4cd8b" stroke="#f4cd8b" stroke-width=".3"/>
<polygon points="249.8,140.2 259.8,145.2 259.8,139.2 249.8,134.2" fill="#fdeccc" stroke="#fdeccc" stroke-width=".3"/>
<path d="M249.8 134.80l10.0 5.00M249.8 136.52l10.0 5.00M249.8 138.24l10.0 5.00M249.8 139.96l10.0 5.00" stroke="#6e4a20" stroke-width="0.95" fill="none"/>
<polygon points="259.8,145.2 284.2,133.0 284.2,127.0 259.8,139.2" fill="#ffe9bc" stroke="#ffe9bc" stroke-width=".3"/>
<path d="M259.8 139.80l24.3 -12.16M259.8 141.52l24.3 -12.16M259.8 143.24l24.3 -12.16M259.8 144.96l24.3 -12.16" stroke="#c8843a" stroke-width="0.9" fill="none"/>
<polygon points="259.8,139.2 249.8,134.2 274.2,122.0 284.2,127.0" fill="#f4cd8b" stroke="#f4cd8b" stroke-width=".3"/>
<polygon points="255.0,131.6 265.0,136.6 265.0,133.8 255.0,128.8" fill="#fdeccc" stroke="#fdeccc" stroke-width=".3"/>
<path d="M255.0 129.44l10.0 5.00M255.0 131.16l10.0 5.00" stroke="#6e4a20" stroke-width="0.95" fill="none"/>
<polygon points="265.0,136.6 279.0,129.6 279.0,126.8 265.0,133.8" fill="#e9bd7a" stroke="#e9bd7a" stroke-width=".3"/>
<polygon points="265.0,133.8 255.0,128.8 269.0,121.8 279.0,126.8" fill="#f4cd8b" stroke="#f4cd8b" stroke-width=".3"/>
<polygon points="259.2,127.7 267.2,131.7 267.2,126.8 259.2,122.8" fill="#fdeccc" stroke="#fdeccc" stroke-width=".3"/>
<path d="M259.2 123.44l8.0 4.00M259.2 125.16l8.0 4.00M259.2 126.88l8.0 4.00" stroke="#6e4a20" stroke-width="0.95" fill="none"/>
<polygon points="267.2,131.7 274.8,127.9 274.8,123.0 267.2,126.8" fill="#e6b873" stroke="#e6b873" stroke-width=".3"/>
<polygon points="267.2,126.8 259.2,122.8 266.8,119.0 274.8,123.0" fill="#f7d495" stroke="#f7d495" stroke-width=".3"/>
<polygon points="527.5,243.8 536.0,248.0 536.0,194.7 527.5,190.5" fill="#fff0d6" stroke="#fff0d6" stroke-width=".3"/>
<path d="M527.5 191.10l8.5 4.25M527.5 192.82l8.5 4.25M527.5 194.54l8.5 4.25M527.5 196.26l8.5 4.25M527.5 197.98l8.5 4.25M527.5 199.70l8.5 4.25M527.5 201.42l8.5 4.25M527.5 203.14l8.5 4.25M527.5 204.86l8.5 4.25M527.5 206.58l8.5 4.25M527.5 208.30l8.5 4.25M527.5 210.02l8.5 4.25M527.5 211.74l8.5 4.25M527.5 213.46l8.5 4.25M527.5 215.18l8.5 4.25M527.5 216.90l8.5 4.25M527.5 218.62l8.5 4.25M527.5 220.34l8.5 4.25M527.5 222.06l8.5 4.25M527.5 223.78l8.5 4.25M527.5 225.50l8.5 4.25M527.5 227.22l8.5 4.25M527.5 228.94l8.5 4.25M527.5 230.66l8.5 4.25M527.5 232.38l8.5 4.25M527.5 234.10l8.5 4.25M527.5 235.82l8.5 4.25M527.5 237.54l8.5 4.25M527.5 239.26l8.5 4.25M527.5 240.98l8.5 4.25M527.5 242.70l8.5 4.25" stroke="#6e4a20" stroke-width="0.9" fill="none"/>
<polygon points="536.0,248.0 559.3,236.4 559.3,183.1 536.0,194.7" fill="#ffe9bc" stroke="#ffe9bc" stroke-width=".3"/>
<path d="M536.0 195.35l23.3 -11.65M536.0 197.07l23.3 -11.65M536.0 198.79l23.3 -11.65M536.0 200.51l23.3 -11.65M536.0 202.23l23.3 -11.65M536.0 203.95l23.3 -11.65M536.0 205.67l23.3 -11.65M536.0 207.39l23.3 -11.65M536.0 209.11l23.3 -11.65M536.0 210.83l23.3 -11.65M536.0 212.55l23.3 -11.65M536.0 214.27l23.3 -11.65M536.0 215.99l23.3 -11.65M536.0 217.71l23.3 -11.65M536.0 219.43l23.3 -11.65M536.0 221.15l23.3 -11.65M536.0 222.87l23.3 -11.65M536.0 224.59l23.3 -11.65M536.0 226.31l23.3 -11.65M536.0 228.03l23.3 -11.65M536.0 229.75l23.3 -11.65M536.0 231.47l23.3 -11.65M536.0 233.19l23.3 -11.65M536.0 234.91l23.3 -11.65M536.0 236.63l23.3 -11.65M536.0 238.35l23.3 -11.65M536.0 240.07l23.3 -11.65M536.0 241.79l23.3 -11.65M536.0 243.51l23.3 -11.65M536.0 245.23l23.3 -11.65M536.0 246.95l23.3 -11.65" stroke="#cf8a3e" stroke-width="0.92" fill="none"/>
<polygon points="536.0,248.0 536.7,247.7 536.7,194.4 536.0,194.7" fill="#fff0d0" />
<polygon points="540.7,245.7 543.8,244.1 543.8,190.8 540.7,192.4" fill="#fff0d6" />
<path d="M540.7 193.02l3.1 -1.57M540.7 194.74l3.1 -1.57M540.7 196.46l3.1 -1.57M540.7 198.18l3.1 -1.57M540.7 199.90l3.1 -1.57M540.7 201.62l3.1 -1.57M540.7 203.34l3.1 -1.57M540.7 205.06l3.1 -1.57M540.7 206.78l3.1 -1.57M540.7 208.50l3.1 -1.57M540.7 210.22l3.1 -1.57M540.7 211.94l3.1 -1.57M540.7 213.66l3.1 -1.57M540.7 215.38l3.1 -1.57M540.7 217.10l3.1 -1.57M540.7 218.82l3.1 -1.57M540.7 220.54l3.1 -1.57M540.7 222.26l3.1 -1.57M540.7 223.98l3.1 -1.57M540.7 225.70l3.1 -1.57M540.7 227.42l3.1 -1.57M540.7 229.14l3.1 -1.57M540.7 230.86l3.1 -1.57M540.7 232.58l3.1 -1.57M540.7 234.30l3.1 -1.57M540.7 236.02l3.1 -1.57M540.7 237.74l3.1 -1.57M540.7 239.46l3.1 -1.57M540.7 241.18l3.1 -1.57M540.7 242.90l3.1 -1.57M540.7 244.62l3.1 -1.57" stroke="#6e4a20" stroke-width="0.9" fill="none"/>
<polygon points="543.8,244.1 544.3,243.9 544.3,190.6 543.8,190.8" fill="#fff0d0" />
<polygon points="551.6,240.2 554.6,238.7 554.6,185.4 551.6,186.9" fill="#fff0d6" />
<path d="M551.6 187.54l3.0 -1.51M551.6 189.26l3.0 -1.51M551.6 190.98l3.0 -1.51M551.6 192.70l3.0 -1.51M551.6 194.42l3.0 -1.51M551.6 196.14l3.0 -1.51M551.6 197.86l3.0 -1.51M551.6 199.58l3.0 -1.51M551.6 201.30l3.0 -1.51M551.6 203.02l3.0 -1.51M551.6 204.74l3.0 -1.51M551.6 206.46l3.0 -1.51M551.6 208.18l3.0 -1.51M551.6 209.90l3.0 -1.51M551.6 211.62l3.0 -1.51M551.6 213.34l3.0 -1.51M551.6 215.06l3.0 -1.51M551.6 216.78l3.0 -1.51M551.6 218.50l3.0 -1.51M551.6 220.22l3.0 -1.51M551.6 221.94l3.0 -1.51M551.6 223.66l3.0 -1.51M551.6 225.38l3.0 -1.51M551.6 227.10l3.0 -1.51M551.6 228.82l3.0 -1.51M551.6 230.54l3.0 -1.51M551.6 232.26l3.0 -1.51M551.6 233.98l3.0 -1.51M551.6 235.70l3.0 -1.51M551.6 237.42l3.0 -1.51M551.6 239.14l3.0 -1.51" stroke="#6e4a20" stroke-width="0.9" fill="none"/>
<polygon points="554.6,238.7 555.1,238.4 555.1,185.2 554.6,185.4" fill="#fff0d0" />
<polygon points="558.6,236.7 559.3,236.4 559.3,183.1 558.6,183.4" fill="#f6d49a" />
<polygon points="536.0,248.0 531.1,245.5 531.1,192.3 536.0,194.7" fill="#ffe9bc" />
<path d="M531.1 192.88l4.9 2.46M531.1 194.60l4.9 2.46M531.1 196.32l4.9 2.46M531.1 198.04l4.9 2.46M531.1 199.76l4.9 2.46M531.1 201.48l4.9 2.46M531.1 203.20l4.9 2.46M531.1 204.92l4.9 2.46M531.1 206.64l4.9 2.46M531.1 208.36l4.9 2.46M531.1 210.08l4.9 2.46M531.1 211.80l4.9 2.46M531.1 213.52l4.9 2.46M531.1 215.24l4.9 2.46M531.1 216.96l4.9 2.46M531.1 218.68l4.9 2.46M531.1 220.40l4.9 2.46M531.1 222.12l4.9 2.46M531.1 223.84l4.9 2.46M531.1 225.56l4.9 2.46M531.1 227.28l4.9 2.46M531.1 229.00l4.9 2.46M531.1 230.72l4.9 2.46M531.1 232.44l4.9 2.46M531.1 234.16l4.9 2.46M531.1 235.88l4.9 2.46M531.1 237.60l4.9 2.46M531.1 239.32l4.9 2.46M531.1 241.04l4.9 2.46M531.1 242.76l4.9 2.46M531.1 244.48l4.9 2.46" stroke="#cf8a3e" stroke-width="0.92" fill="none"/>
<polygon points="536.0,194.7 527.5,190.5 550.8,178.8 559.3,183.1" fill="#f4cd8b" stroke="#f4cd8b" stroke-width=".3"/>
<polygon points="530.3,189.1 538.8,193.3 538.8,187.3 530.3,183.1" fill="#fdeccc" stroke="#fdeccc" stroke-width=".3"/>
<path d="M530.3 183.70l8.5 4.25M530.3 185.42l8.5 4.25M530.3 187.14l8.5 4.25M530.3 188.86l8.5 4.25" stroke="#6e4a20" stroke-width="0.95" fill="none"/>
<polygon points="538.8,193.3 556.5,184.5 556.5,178.5 538.8,187.3" fill="#ffe9bc" stroke="#ffe9bc" stroke-width=".3"/>
<path d="M538.8 187.95l17.7 -8.85M538.8 189.67l17.7 -8.85M538.8 191.39l17.7 -8.85M538.8 193.11l17.7 -8.85" stroke="#c8843a" stroke-width="0.9" fill="none"/>
<polygon points="538.8,187.3 530.3,183.1 548.0,174.2 556.5,178.5" fill="#f4cd8b" stroke="#f4cd8b" stroke-width=".3"/>
<polygon points="534.0,181.2 542.5,185.5 542.5,182.7 534.0,178.4" fill="#fdeccc" stroke="#fdeccc" stroke-width=".3"/>
<path d="M534.0 179.04l8.5 4.25M534.0 180.76l8.5 4.25" stroke="#6e4a20" stroke-width="0.95" fill="none"/>
<polygon points="542.5,185.5 552.8,180.4 552.8,177.6 542.5,182.7" fill="#e9bd7a" stroke="#e9bd7a" stroke-width=".3"/>
<polygon points="542.5,182.7 534.0,178.4 544.3,173.3 552.8,177.6" fill="#f4cd8b" stroke="#f4cd8b" stroke-width=".3"/>
<polygon points="537.2,177.7 544.0,181.1 544.0,176.2 537.2,172.8" fill="#fdeccc" stroke="#fdeccc" stroke-width=".3"/>
<path d="M537.2 173.40l6.8 3.40M537.2 175.12l6.8 3.40M537.2 176.84l6.8 3.40" stroke="#6e4a20" stroke-width="0.95" fill="none"/>
<polygon points="544.0,181.1 549.6,178.3 549.6,173.4 544.0,176.2" fill="#e6b873" stroke="#e6b873" stroke-width=".3"/>
<polygon points="544.0,176.2 537.2,172.8 542.8,170.0 549.6,173.4" fill="#f7d495" stroke="#f7d495" stroke-width=".3"/>
<polygon points="352.4,248.2 361.0,252.5 361.0,201.6 352.4,197.3" fill="#fff0d6" stroke="#fff0d6" stroke-width=".3"/>
<path d="M352.4 197.86l8.6 4.30M352.4 199.58l8.6 4.30M352.4 201.30l8.6 4.30M352.4 203.02l8.6 4.30M352.4 204.74l8.6 4.30M352.4 206.46l8.6 4.30M352.4 208.18l8.6 4.30M352.4 209.90l8.6 4.30M352.4 211.62l8.6 4.30M352.4 213.34l8.6 4.30M352.4 215.06l8.6 4.30M352.4 216.78l8.6 4.30M352.4 218.50l8.6 4.30M352.4 220.22l8.6 4.30M352.4 221.94l8.6 4.30M352.4 223.66l8.6 4.30M352.4 225.38l8.6 4.30M352.4 227.10l8.6 4.30M352.4 228.82l8.6 4.30M352.4 230.54l8.6 4.30M352.4 232.26l8.6 4.30M352.4 233.98l8.6 4.30M352.4 235.70l8.6 4.30M352.4 237.42l8.6 4.30M352.4 239.14l8.6 4.30M352.4 240.86l8.6 4.30M352.4 242.58l8.6 4.30M352.4 244.30l8.6 4.30M352.4 246.02l8.6 4.30M352.4 247.74l8.6 4.30" stroke="#6e4a20" stroke-width="0.9" fill="none"/>
<polygon points="361.0,252.5 390.0,238.0 390.0,187.1 361.0,201.6" fill="#ffe9bc" stroke="#ffe9bc" stroke-width=".3"/>
<path d="M361.0 202.16l29.0 -14.50M361.0 203.88l29.0 -14.50M361.0 205.60l29.0 -14.50M361.0 207.32l29.0 -14.50M361.0 209.04l29.0 -14.50M361.0 210.76l29.0 -14.50M361.0 212.48l29.0 -14.50M361.0 214.20l29.0 -14.50M361.0 215.92l29.0 -14.50M361.0 217.64l29.0 -14.50M361.0 219.36l29.0 -14.50M361.0 221.08l29.0 -14.50M361.0 222.80l29.0 -14.50M361.0 224.52l29.0 -14.50M361.0 226.24l29.0 -14.50M361.0 227.96l29.0 -14.50M361.0 229.68l29.0 -14.50M361.0 231.40l29.0 -14.50M361.0 233.12l29.0 -14.50M361.0 234.84l29.0 -14.50M361.0 236.56l29.0 -14.50M361.0 238.28l29.0 -14.50M361.0 240.00l29.0 -14.50M361.0 241.72l29.0 -14.50M361.0 243.44l29.0 -14.50M361.0 245.16l29.0 -14.50M361.0 246.88l29.0 -14.50M361.0 248.60l29.0 -14.50M361.0 250.32l29.0 -14.50M361.0 252.04l29.0 -14.50" stroke="#cf8a3e" stroke-width="0.92" fill="none"/>
<polygon points="361.0,252.5 361.9,252.1 361.9,201.1 361.0,201.6" fill="#fff0d0" />
<polygon points="366.8,249.6 370.7,247.6 370.7,196.7 366.8,198.7" fill="#fff0d6" />
<path d="M366.8 199.26l3.9 -1.96M366.8 200.98l3.9 -1.96M366.8 202.70l3.9 -1.96M366.8 204.42l3.9 -1.96M366.8 206.14l3.9 -1.96M366.8 207.86l3.9 -1.96M366.8 209.58l3.9 -1.96M366.8 211.30l3.9 -1.96M366.8 213.02l3.9 -1.96M366.8 214.74l3.9 -1.96M366.8 216.46l3.9 -1.96M366.8 218.18l3.9 -1.96M366.8 219.90l3.9 -1.96M366.8 221.62l3.9 -1.96M366.8 223.34l3.9 -1.96M366.8 225.06l3.9 -1.96M366.8 226.78l3.9 -1.96M366.8 228.50l3.9 -1.96M366.8 230.22l3.9 -1.96M366.8 231.94l3.9 -1.96M366.8 233.66l3.9 -1.96M366.8 235.38l3.9 -1.96M366.8 237.10l3.9 -1.96M366.8 238.82l3.9 -1.96M366.8 240.54l3.9 -1.96M366.8 242.26l3.9 -1.96M366.8 243.98l3.9 -1.96M366.8 245.70l3.9 -1.96M366.8 247.42l3.9 -1.96M366.8 249.14l3.9 -1.96" stroke="#6e4a20" stroke-width="0.9" fill="none"/>
<polygon points="370.7,247.6 371.3,247.4 371.3,196.4 370.7,196.7" fill="#fff0d0" />
<polygon points="380.4,242.8 384.2,240.9 384.2,190.0 380.4,191.8" fill="#fff0d6" />
<path d="M380.4 192.45l3.8 -1.88M380.4 194.17l3.8 -1.88M380.4 195.89l3.8 -1.88M380.4 197.61l3.8 -1.88M380.4 199.33l3.8 -1.88M380.4 201.05l3.8 -1.88M380.4 202.77l3.8 -1.88M380.4 204.49l3.8 -1.88M380.4 206.21l3.8 -1.88M380.4 207.93l3.8 -1.88M380.4 209.65l3.8 -1.88M380.4 211.37l3.8 -1.88M380.4 213.09l3.8 -1.88M380.4 214.81l3.8 -1.88M380.4 216.53l3.8 -1.88M380.4 218.25l3.8 -1.88M380.4 219.97l3.8 -1.88M380.4 221.69l3.8 -1.88M380.4 223.41l3.8 -1.88M380.4 225.13l3.8 -1.88M380.4 226.85l3.8 -1.88M380.4 228.57l3.8 -1.88M380.4 230.29l3.8 -1.88M380.4 232.01l3.8 -1.88M380.4 233.73l3.8 -1.88M380.4 235.45l3.8 -1.88M380.4 237.17l3.8 -1.88M380.4 238.89l3.8 -1.88M380.4 240.61l3.8 -1.88M380.4 242.33l3.8 -1.88" stroke="#6e4a20" stroke-width="0.9" fill="none"/>
<polygon points="384.2,240.9 384.8,240.6 384.8,189.7 384.2,190.0" fill="#fff0d0" />
<polygon points="389.1,238.4 390.0,238.0 390.0,187.1 389.1,187.5" fill="#f6d49a" />
<polygon points="361.0,252.5 356.0,250.0 356.0,199.1 361.0,201.6" fill="#ffe9bc" />
<path d="M356.0 199.67l5.0 2.49M356.0 201.39l5.0 2.49M356.0 203.11l5.0 2.49M356.0 204.83l5.0 2.49M356.0 206.55l5.0 2.49M356.0 208.27l5.0 2.49M356.0 209.99l5.0 2.49M356.0 211.71l5.0 2.49M356.0 213.43l5.0 2.49M356.0 215.15l5.0 2.49M356.0 216.87l5.0 2.49M356.0 218.59l5.0 2.49M356.0 220.31l5.0 2.49M356.0 222.03l5.0 2.49M356.0 223.75l5.0 2.49M356.0 225.47l5.0 2.49M356.0 227.19l5.0 2.49M356.0 228.91l5.0 2.49M356.0 230.63l5.0 2.49M356.0 232.35l5.0 2.49M356.0 234.07l5.0 2.49M356.0 235.79l5.0 2.49M356.0 237.51l5.0 2.49M356.0 239.23l5.0 2.49M356.0 240.95l5.0 2.49M356.0 242.67l5.0 2.49M356.0 244.39l5.0 2.49M356.0 246.11l5.0 2.49M356.0 247.83l5.0 2.49M356.0 249.55l5.0 2.49" stroke="#cf8a3e" stroke-width="0.92" fill="none"/>
<polygon points="361.0,201.6 352.4,197.3 381.4,182.8 390.0,187.1" fill="#f4cd8b" stroke="#f4cd8b" stroke-width=".3"/>
<polygon points="355.9,195.5 364.5,199.8 364.5,193.8 355.9,189.5" fill="#fdeccc" stroke="#fdeccc" stroke-width=".3"/>
<path d="M355.9 190.12l8.6 4.30M355.9 191.84l8.6 4.30M355.9 193.56l8.6 4.30M355.9 195.28l8.6 4.30" stroke="#6e4a20" stroke-width="0.95" fill="none"/>
<polygon points="364.5,199.8 386.5,188.8 386.5,182.8 364.5,193.8" fill="#ffe9bc" stroke="#ffe9bc" stroke-width=".3"/>
<path d="M364.5 194.42l22.0 -11.02M364.5 196.14l22.0 -11.02M364.5 197.86l22.0 -11.02M364.5 199.58l22.0 -11.02" stroke="#c8843a" stroke-width="0.9" fill="none"/>
<polygon points="364.5,193.8 355.9,189.5 377.9,178.5 386.5,182.8" fill="#f4cd8b" stroke="#f4cd8b" stroke-width=".3"/>
<polygon points="360.5,187.2 369.1,191.5 369.1,188.7 360.5,184.4" fill="#fdeccc" stroke="#fdeccc" stroke-width=".3"/>
<path d="M360.5 185.00l8.6 4.30M360.5 186.72l8.6 4.30" stroke="#6e4a20" stroke-width="0.95" fill="none"/>
<polygon points="369.1,191.5 381.9,185.1 381.9,182.3 369.1,188.7" fill="#e9bd7a" stroke="#e9bd7a" stroke-width=".3"/>
<polygon points="369.1,188.7 360.5,184.4 373.3,178.0 381.9,182.3" fill="#f4cd8b" stroke="#f4cd8b" stroke-width=".3"/>
<polygon points="364.3,183.4 371.2,186.8 371.2,181.9 364.3,178.5" fill="#fdeccc" stroke="#fdeccc" stroke-width=".3"/>
<path d="M364.3 179.08l6.9 3.44M364.3 180.80l6.9 3.44M364.3 182.52l6.9 3.44" stroke="#6e4a20" stroke-width="0.95" fill="none"/>
<polygon points="371.2,186.8 378.1,183.3 378.1,178.4 371.2,181.9" fill="#e6b873" stroke="#e6b873" stroke-width=".3"/>
<polygon points="371.2,181.9 364.3,178.5 371.2,175.0 378.1,178.4" fill="#f7d495" stroke="#f7d495" stroke-width=".3"/>
<polygon points="200.0,253.1 209.8,258.0 209.8,190.4 200.0,185.5" fill="#fff0d6" stroke="#fff0d6" stroke-width=".3"/>
<path d="M200.0 186.09l9.8 4.90M200.0 187.81l9.8 4.90M200.0 189.53l9.8 4.90M200.0 191.25l9.8 4.90M200.0 192.97l9.8 4.90M200.0 194.69l9.8 4.90M200.0 196.41l9.8 4.90M200.0 198.13l9.8 4.90M200.0 199.85l9.8 4.90M200.0 201.57l9.8 4.90M200.0 203.29l9.8 4.90M200.0 205.01l9.8 4.90M200.0 206.73l9.8 4.90M200.0 208.45l9.8 4.90M200.0 210.17l9.8 4.90M200.0 211.89l9.8 4.90M200.0 213.61l9.8 4.90M200.0 215.33l9.8 4.90M200.0 217.05l9.8 4.90M200.0 218.77l9.8 4.90M200.0 220.49l9.8 4.90M200.0 222.21l9.8 4.90M200.0 223.93l9.8 4.90M200.0 225.65l9.8 4.90M200.0 227.37l9.8 4.90M200.0 229.09l9.8 4.90M200.0 230.81l9.8 4.90M200.0 232.53l9.8 4.90M200.0 234.25l9.8 4.90M200.0 235.97l9.8 4.90M200.0 237.69l9.8 4.90M200.0 239.41l9.8 4.90M200.0 241.13l9.8 4.90M200.0 242.85l9.8 4.90M200.0 244.57l9.8 4.90M200.0 246.29l9.8 4.90M200.0 248.01l9.8 4.90M200.0 249.73l9.8 4.90M200.0 251.45l9.8 4.90" stroke="#6e4a20" stroke-width="0.9" fill="none"/>
<polygon points="209.8,258.0 242.0,241.9 242.0,174.3 209.8,190.4" fill="#ffe9bc" stroke="#ffe9bc" stroke-width=".3"/>
<path d="M209.8 190.99l32.2 -16.10M209.8 192.71l32.2 -16.10M209.8 194.43l32.2 -16.10M209.8 196.15l32.2 -16.10M209.8 197.87l32.2 -16.10M209.8 199.59l32.2 -16.10M209.8 201.31l32.2 -16.10M209.8 203.03l32.2 -16.10M209.8 204.75l32.2 -16.10M209.8 206.47l32.2 -16.10M209.8 208.19l32.2 -16.10M209.8 209.91l32.2 -16.10M209.8 211.63l32.2 -16.10M209.8 213.35l32.2 -16.10M209.8 215.07l32.2 -16.10M209.8 216.79l32.2 -16.10M209.8 218.51l32.2 -16.10M209.8 220.23l32.2 -16.10M209.8 221.95l32.2 -16.10M209.8 223.67l32.2 -16.10M209.8 225.39l32.2 -16.10M209.8 227.11l32.2 -16.10M209.8 228.83l32.2 -16.10M209.8 230.55l32.2 -16.10M209.8 232.27l32.2 -16.10M209.8 233.99l32.2 -16.10M209.8 235.71l32.2 -16.10M209.8 237.43l32.2 -16.10M209.8 239.15l32.2 -16.10M209.8 240.87l32.2 -16.10M209.8 242.59l32.2 -16.10M209.8 244.31l32.2 -16.10M209.8 246.03l32.2 -16.10M209.8 247.75l32.2 -16.10M209.8 249.47l32.2 -16.10M209.8 251.19l32.2 -16.10M209.8 252.91l32.2 -16.10M209.8 254.63l32.2 -16.10M209.8 256.35l32.2 -16.10" stroke="#cf8a3e" stroke-width="0.92" fill="none"/>
<polygon points="209.8,258.0 210.8,257.5 210.8,189.9 209.8,190.4" fill="#fff0d0" />
<polygon points="216.2,254.8 220.6,252.6 220.6,185.0 216.2,187.2" fill="#fff0d6" />
<path d="M216.2 187.77l4.3 -2.17M216.2 189.49l4.3 -2.17M216.2 191.21l4.3 -2.17M216.2 192.93l4.3 -2.17M216.2 194.65l4.3 -2.17M216.2 196.37l4.3 -2.17M216.2 198.09l4.3 -2.17M216.2 199.81l4.3 -2.17M216.2 201.53l4.3 -2.17M216.2 203.25l4.3 -2.17M216.2 204.97l4.3 -2.17M216.2 206.69l4.3 -2.17M216.2 208.41l4.3 -2.17M216.2 210.13l4.3 -2.17M216.2 211.85l4.3 -2.17M216.2 213.57l4.3 -2.17M216.2 215.29l4.3 -2.17M216.2 217.01l4.3 -2.17M216.2 218.73l4.3 -2.17M216.2 220.45l4.3 -2.17M216.2 222.17l4.3 -2.17M216.2 223.89l4.3 -2.17M216.2 225.61l4.3 -2.17M216.2 227.33l4.3 -2.17M216.2 229.05l4.3 -2.17M216.2 230.77l4.3 -2.17M216.2 232.49l4.3 -2.17M216.2 234.21l4.3 -2.17M216.2 235.93l4.3 -2.17M216.2 237.65l4.3 -2.17M216.2 239.37l4.3 -2.17M216.2 241.09l4.3 -2.17M216.2 242.81l4.3 -2.17M216.2 244.53l4.3 -2.17M216.2 246.25l4.3 -2.17M216.2 247.97l4.3 -2.17M216.2 249.69l4.3 -2.17M216.2 251.41l4.3 -2.17M216.2 253.13l4.3 -2.17" stroke="#6e4a20" stroke-width="0.9" fill="none"/>
<polygon points="220.6,252.6 221.2,252.3 221.2,184.7 220.6,185.0" fill="#fff0d0" />
<polygon points="231.4,247.2 235.6,245.1 235.6,177.5 231.4,179.6" fill="#fff0d6" />
<path d="M231.4 180.21l4.2 -2.09M231.4 181.93l4.2 -2.09M231.4 183.65l4.2 -2.09M231.4 185.37l4.2 -2.09M231.4 187.09l4.2 -2.09M231.4 188.81l4.2 -2.09M231.4 190.53l4.2 -2.09M231.4 192.25l4.2 -2.09M231.4 193.97l4.2 -2.09M231.4 195.69l4.2 -2.09M231.4 197.41l4.2 -2.09M231.4 199.13l4.2 -2.09M231.4 200.85l4.2 -2.09M231.4 202.57l4.2 -2.09M231.4 204.29l4.2 -2.09M231.4 206.01l4.2 -2.09M231.4 207.73l4.2 -2.09M231.4 209.45l4.2 -2.09M231.4 211.17l4.2 -2.09M231.4 212.89l4.2 -2.09M231.4 214.61l4.2 -2.09M231.4 216.33l4.2 -2.09M231.4 218.05l4.2 -2.09M231.4 219.77l4.2 -2.09M231.4 221.49l4.2 -2.09M231.4 223.21l4.2 -2.09M231.4 224.93l4.2 -2.09M231.4 226.65l4.2 -2.09M231.4 228.37l4.2 -2.09M231.4 230.09l4.2 -2.09M231.4 231.81l4.2 -2.09M231.4 233.53l4.2 -2.09M231.4 235.25l4.2 -2.09M231.4 236.97l4.2 -2.09M231.4 238.69l4.2 -2.09M231.4 240.41l4.2 -2.09M231.4 242.12l4.2 -2.09M231.4 243.84l4.2 -2.09M231.4 245.56l4.2 -2.09" stroke="#6e4a20" stroke-width="0.9" fill="none"/>
<polygon points="235.6,245.1 236.2,244.8 236.2,177.2 235.6,177.5" fill="#fff0d0" />
<polygon points="241.0,242.4 242.0,241.9 242.0,174.3 241.0,174.8" fill="#f6d49a" />
<polygon points="209.8,258.0 204.1,255.2 204.1,187.6 209.8,190.4" fill="#ffe9bc" />
<path d="M204.1 188.15l5.7 2.84M204.1 189.87l5.7 2.84M204.1 191.59l5.7 2.84M204.1 193.31l5.7 2.84M204.1 195.03l5.7 2.84M204.1 196.75l5.7 2.84M204.1 198.47l5.7 2.84M204.1 200.19l5.7 2.84M204.1 201.91l5.7 2.84M204.1 203.63l5.7 2.84M204.1 205.35l5.7 2.84M204.1 207.07l5.7 2.84M204.1 208.79l5.7 2.84M204.1 210.51l5.7 2.84M204.1 212.23l5.7 2.84M204.1 213.95l5.7 2.84M204.1 215.67l5.7 2.84M204.1 217.39l5.7 2.84M204.1 219.11l5.7 2.84M204.1 220.83l5.7 2.84M204.1 222.55l5.7 2.84M204.1 224.27l5.7 2.84M204.1 225.99l5.7 2.84M204.1 227.71l5.7 2.84M204.1 229.43l5.7 2.84M204.1 231.15l5.7 2.84M204.1 232.87l5.7 2.84M204.1 234.59l5.7 2.84M204.1 236.31l5.7 2.84M204.1 238.03l5.7 2.84M204.1 239.75l5.7 2.84M204.1 241.47l5.7 2.84M204.1 243.19l5.7 2.84M204.1 244.91l5.7 2.84M204.1 246.63l5.7 2.84M204.1 248.35l5.7 2.84M204.1 250.07l5.7 2.84M204.1 251.79l5.7 2.84M204.1 253.51l5.7 2.84" stroke="#cf8a3e" stroke-width="0.92" fill="none"/>
<polygon points="209.8,190.4 200.0,185.5 232.2,169.4 242.0,174.3" fill="#f4cd8b" stroke="#f4cd8b" stroke-width=".3"/>
<polygon points="203.9,183.6 213.7,188.5 213.7,182.5 203.9,177.6" fill="#fdeccc" stroke="#fdeccc" stroke-width=".3"/>
<path d="M203.9 178.16l9.8 4.90M203.9 179.88l9.8 4.90M203.9 181.60l9.8 4.90M203.9 183.32l9.8 4.90" stroke="#6e4a20" stroke-width="0.95" fill="none"/>
<polygon points="213.7,188.5 238.1,176.2 238.1,170.2 213.7,182.5" fill="#ffe9bc" stroke="#ffe9bc" stroke-width=".3"/>
<path d="M213.7 183.06l24.5 -12.24M213.7 184.78l24.5 -12.24M213.7 186.50l24.5 -12.24M213.7 188.22l24.5 -12.24" stroke="#c8843a" stroke-width="0.9" fill="none"/>
<polygon points="213.7,182.5 203.9,177.6 228.3,165.3 238.1,170.2" fill="#f4cd8b" stroke="#f4cd8b" stroke-width=".3"/>
<polygon points="209.0,175.0 218.8,179.9 218.8,177.1 209.0,172.2" fill="#fdeccc" stroke="#fdeccc" stroke-width=".3"/>
<path d="M209.0 172.78l9.8 4.90M209.0 174.50l9.8 4.90" stroke="#6e4a20" stroke-width="0.95" fill="none"/>
<polygon points="218.8,179.9 233.0,172.8 233.0,170.0 218.8,177.1" fill="#e9bd7a" stroke="#e9bd7a" stroke-width=".3"/>
<polygon points="218.8,177.1 209.0,172.2 223.2,165.1 233.0,170.0" fill="#f4cd8b" stroke="#f4cd8b" stroke-width=".3"/>
<polygon points="213.2,171.1 221.1,175.0 221.1,170.1 213.2,166.2" fill="#fdeccc" stroke="#fdeccc" stroke-width=".3"/>
<path d="M213.2 166.76l7.8 3.92M213.2 168.48l7.8 3.92M213.2 170.20l7.8 3.92" stroke="#6e4a20" stroke-width="0.95" fill="none"/>
<polygon points="221.1,175.0 228.8,171.1 228.8,166.2 221.1,170.1" fill="#e6b873" stroke="#e6b873" stroke-width=".3"/>
<polygon points="221.1,170.1 213.2,166.2 220.9,162.3 228.8,166.2" fill="#f7d495" stroke="#f7d495" stroke-width=".3"/>
<polygon points="417.0,254.0 426.0,258.5 426.0,156.6 417.0,152.1" fill="#fff0d6" stroke="#fff0d6" stroke-width=".3"/>
<path d="M417.0 152.69l9.0 4.50M417.0 154.41l9.0 4.50M417.0 156.13l9.0 4.50M417.0 157.85l9.0 4.50M417.0 159.57l9.0 4.50M417.0 161.29l9.0 4.50M417.0 163.01l9.0 4.50M417.0 164.73l9.0 4.50M417.0 166.45l9.0 4.50M417.0 168.17l9.0 4.50M417.0 169.89l9.0 4.50M417.0 171.61l9.0 4.50M417.0 173.33l9.0 4.50M417.0 175.05l9.0 4.50M417.0 176.77l9.0 4.50M417.0 178.49l9.0 4.50M417.0 180.21l9.0 4.50M417.0 181.93l9.0 4.50M417.0 183.65l9.0 4.50M417.0 185.37l9.0 4.50M417.0 187.09l9.0 4.50M417.0 188.81l9.0 4.50M417.0 190.53l9.0 4.50M417.0 192.25l9.0 4.50M417.0 193.97l9.0 4.50M417.0 195.69l9.0 4.50M417.0 197.41l9.0 4.50M417.0 199.13l9.0 4.50M417.0 200.85l9.0 4.50M417.0 202.57l9.0 4.50M417.0 204.29l9.0 4.50M417.0 206.01l9.0 4.50M417.0 207.73l9.0 4.50M417.0 209.45l9.0 4.50M417.0 211.17l9.0 4.50M417.0 212.89l9.0 4.50M417.0 214.61l9.0 4.50M417.0 216.33l9.0 4.50M417.0 218.05l9.0 4.50M417.0 219.77l9.0 4.50M417.0 221.49l9.0 4.50M417.0 223.21l9.0 4.50M417.0 224.93l9.0 4.50M417.0 226.65l9.0 4.50M417.0 228.37l9.0 4.50M417.0 230.09l9.0 4.50M417.0 231.81l9.0 4.50M417.0 233.53l9.0 4.50M417.0 235.25l9.0 4.50M417.0 236.97l9.0 4.50M417.0 238.69l9.0 4.50M417.0 240.41l9.0 4.50M417.0 242.13l9.0 4.50M417.0 243.85l9.0 4.50M417.0 245.57l9.0 4.50M417.0 247.29l9.0 4.50M417.0 249.01l9.0 4.50M417.0 250.73l9.0 4.50M417.0 252.45l9.0 4.50" stroke="#6e4a20" stroke-width="0.9" fill="none"/>
<polygon points="426.0,258.5 451.3,245.8 451.3,143.9 426.0,156.6" fill="#ffe9bc" stroke="#ffe9bc" stroke-width=".3"/>
<path d="M426.0 157.19l25.3 -12.65M426.0 158.91l25.3 -12.65M426.0 160.63l25.3 -12.65M426.0 162.35l25.3 -12.65M426.0 164.07l25.3 -12.65M426.0 165.79l25.3 -12.65M426.0 167.51l25.3 -12.65M426.0 169.23l25.3 -12.65M426.0 170.95l25.3 -12.65M426.0 172.67l25.3 -12.65M426.0 174.39l25.3 -12.65M426.0 176.11l25.3 -12.65M426.0 177.83l25.3 -12.65M426.0 179.55l25.3 -12.65M426.0 181.27l25.3 -12.65M426.0 182.99l25.3 -12.65M426.0 184.71l25.3 -12.65M426.0 186.43l25.3 -12.65M426.0 188.15l25.3 -12.65M426.0 189.87l25.3 -12.65M426.0 191.59l25.3 -12.65M426.0 193.31l25.3 -12.65M426.0 195.03l25.3 -12.65M426.0 196.75l25.3 -12.65M426.0 198.47l25.3 -12.65M426.0 200.19l25.3 -12.65M426.0 201.91l25.3 -12.65M426.0 203.63l25.3 -12.65M426.0 205.35l25.3 -12.65M426.0 207.07l25.3 -12.65M426.0 208.79l25.3 -12.65M426.0 210.51l25.3 -12.65M426.0 212.23l25.3 -12.65M426.0 213.95l25.3 -12.65M426.0 215.67l25.3 -12.65M426.0 217.39l25.3 -12.65M426.0 219.11l25.3 -12.65M426.0 220.83l25.3 -12.65M426.0 222.55l25.3 -12.65M426.0 224.27l25.3 -12.65M426.0 225.99l25.3 -12.65M426.0 227.71l25.3 -12.65M426.0 229.43l25.3 -12.65M426.0 231.15l25.3 -12.65M426.0 232.87l25.3 -12.65M426.0 234.59l25.3 -12.65M426.0 236.31l25.3 -12.65M426.0 238.03l25.3 -12.65M426.0 239.75l25.3 -12.65M426.0 241.47l25.3 -12.65M426.0 243.19l25.3 -12.65M426.0 244.91l25.3 -12.65M426.0 246.63l25.3 -12.65M426.0 248.35l25.3 -12.65M426.0 250.07l25.3 -12.65M426.0 251.79l25.3 -12.65M426.0 253.51l25.3 -12.65M426.0 255.23l25.3 -12.65M426.0 256.95l25.3 -12.65" stroke="#cf8a3e" stroke-width="0.92" fill="none"/>
<polygon points="426.0,258.5 426.8,258.1 426.8,156.2 426.0,156.6" fill="#fff0d0" />
<polygon points="431.1,256.0 434.5,254.3 434.5,152.4 431.1,154.1" fill="#fff0d6" />
<path d="M431.1 154.66l3.4 -1.71M431.1 156.38l3.4 -1.71M431.1 158.10l3.4 -1.71M431.1 159.82l3.4 -1.71M431.1 161.54l3.4 -1.71M431.1 163.26l3.4 -1.71M431.1 164.98l3.4 -1.71M431.1 166.70l3.4 -1.71M431.1 168.42l3.4 -1.71M431.1 170.14l3.4 -1.71M431.1 171.86l3.4 -1.71M431.1 173.58l3.4 -1.71M431.1 175.30l3.4 -1.71M431.1 177.02l3.4 -1.71M431.1 178.74l3.4 -1.71M431.1 180.46l3.4 -1.71M431.1 182.18l3.4 -1.71M431.1 183.90l3.4 -1.71M431.1 185.62l3.4 -1.71M431.1 187.34l3.4 -1.71M431.1 189.06l3.4 -1.71M431.1 190.78l3.4 -1.71M431.1 192.50l3.4 -1.71M431.1 194.22l3.4 -1.71M431.1 195.94l3.4 -1.71M431.1 197.66l3.4 -1.71M431.1 199.38l3.4 -1.71M431.1 201.10l3.4 -1.71M431.1 202.82l3.4 -1.71M431.1 204.54l3.4 -1.71M431.1 206.26l3.4 -1.71M431.1 207.98l3.4 -1.71M431.1 209.70l3.4 -1.71M431.1 211.42l3.4 -1.71M431.1 213.14l3.4 -1.71M431.1 214.86l3.4 -1.71M431.1 216.58l3.4 -1.71M431.1 218.30l3.4 -1.71M431.1 220.02l3.4 -1.71M431.1 221.74l3.4 -1.71M431.1 223.46l3.4 -1.71M431.1 225.18l3.4 -1.71M431.1 226.90l3.4 -1.71M431.1 228.62l3.4 -1.71M431.1 230.34l3.4 -1.71M431.1 232.06l3.4 -1.71M431.1 233.78l3.4 -1.71M431.1 235.50l3.4 -1.71M431.1 237.22l3.4 -1.71M431.1 238.94l3.4 -1.71M431.1 240.66l3.4 -1.71M431.1 242.38l3.4 -1.71M431.1 244.10l3.4 -1.71M431.1 245.82l3.4 -1.71M431.1 247.54l3.4 -1.71M431.1 249.26l3.4 -1.71M431.1 250.98l3.4 -1.71M431.1 252.70l3.4 -1.71M431.1 254.42l3.4 -1.71" stroke="#6e4a20" stroke-width="0.9" fill="none"/>
<polygon points="434.5,254.3 435.0,254.0 435.0,152.1 434.5,152.4" fill="#fff0d0" />
<polygon points="443.0,250.0 446.2,248.4 446.2,146.5 443.0,148.1" fill="#fff0d6" />
<path d="M443.0 148.72l3.3 -1.64M443.0 150.44l3.3 -1.64M443.0 152.16l3.3 -1.64M443.0 153.88l3.3 -1.64M443.0 155.60l3.3 -1.64M443.0 157.32l3.3 -1.64M443.0 159.04l3.3 -1.64M443.0 160.76l3.3 -1.64M443.0 162.48l3.3 -1.64M443.0 164.20l3.3 -1.64M443.0 165.92l3.3 -1.64M443.0 167.64l3.3 -1.64M443.0 169.36l3.3 -1.64M443.0 171.08l3.3 -1.64M443.0 172.80l3.3 -1.64M443.0 174.52l3.3 -1.64M443.0 176.24l3.3 -1.64M443.0 177.96l3.3 -1.64M443.0 179.68l3.3 -1.64M443.0 181.40l3.3 -1.64M443.0 183.12l3.3 -1.64M443.0 184.84l3.3 -1.64M443.0 186.56l3.3 -1.64M443.0 188.28l3.3 -1.64M443.0 190.00l3.3 -1.64M443.0 191.72l3.3 -1.64M443.0 193.44l3.3 -1.64M443.0 195.16l3.3 -1.64M443.0 196.88l3.3 -1.64M443.0 198.60l3.3 -1.64M443.0 200.32l3.3 -1.64M443.0 202.04l3.3 -1.64M443.0 203.76l3.3 -1.64M443.0 205.48l3.3 -1.64M443.0 207.20l3.3 -1.64M443.0 208.92l3.3 -1.64M443.0 210.64l3.3 -1.64M443.0 212.36l3.3 -1.64M443.0 214.08l3.3 -1.64M443.0 215.80l3.3 -1.64M443.0 217.52l3.3 -1.64M443.0 219.24l3.3 -1.64M443.0 220.96l3.3 -1.64M443.0 222.68l3.3 -1.64M443.0 224.40l3.3 -1.64M443.0 226.12l3.3 -1.64M443.0 227.84l3.3 -1.64M443.0 229.56l3.3 -1.64M443.0 231.28l3.3 -1.64M443.0 233.00l3.3 -1.64M443.0 234.72l3.3 -1.64M443.0 236.44l3.3 -1.64M443.0 238.16l3.3 -1.64M443.0 239.88l3.3 -1.64M443.0 241.60l3.3 -1.64M443.0 243.32l3.3 -1.64M443.0 245.04l3.3 -1.64M443.0 246.76l3.3 -1.64M443.0 248.48l3.3 -1.64" stroke="#6e4a20" stroke-width="0.9" fill="none"/>
<polygon points="446.2,248.4 446.7,248.1 446.7,146.2 446.2,146.5" fill="#fff0d0" />
<polygon points="450.5,246.2 451.3,245.8 451.3,143.9 450.5,144.3" fill="#f6d49a" />
<polygon points="426.0,258.5 420.8,255.9 420.8,154.0 426.0,156.6" fill="#ffe9bc" />
<path d="M420.8 154.58l5.2 2.61M420.8 156.30l5.2 2.61M420.8 158.02l5.2 2.61M420.8 159.74l5.2 2.61M420.8 161.46l5.2 2.61M420.8 163.18l5.2 2.61M420.8 164.90l5.2 2.61M420.8 166.62l5.2 2.61M420.8 168.34l5.2 2.61M420.8 170.06l5.2 2.61M420.8 171.78l5.2 2.61M420.8 173.50l5.2 2.61M420.8 175.22l5.2 2.61M420.8 176.94l5.2 2.61M420.8 178.66l5.2 2.61M420.8 180.38l5.2 2.61M420.8 182.10l5.2 2.61M420.8 183.82l5.2 2.61M420.8 185.54l5.2 2.61M420.8 187.26l5.2 2.61M420.8 188.98l5.2 2.61M420.8 190.70l5.2 2.61M420.8 192.42l5.2 2.61M420.8 194.14l5.2 2.61M420.8 195.86l5.2 2.61M420.8 197.58l5.2 2.61M420.8 199.30l5.2 2.61M420.8 201.02l5.2 2.61M420.8 202.74l5.2 2.61M420.8 204.46l5.2 2.61M420.8 206.18l5.2 2.61M420.8 207.90l5.2 2.61M420.8 209.62l5.2 2.61M420.8 211.34l5.2 2.61M420.8 213.06l5.2 2.61M420.8 214.78l5.2 2.61M420.8 216.50l5.2 2.61M420.8 218.22l5.2 2.61M420.8 219.94l5.2 2.61M420.8 221.66l5.2 2.61M420.8 223.38l5.2 2.61M420.8 225.10l5.2 2.61M420.8 226.82l5.2 2.61M420.8 228.54l5.2 2.61M420.8 230.26l5.2 2.61M420.8 231.98l5.2 2.61M420.8 233.70l5.2 2.61M420.8 235.42l5.2 2.61M420.8 237.14l5.2 2.61M420.8 238.86l5.2 2.61M420.8 240.58l5.2 2.61M420.8 242.30l5.2 2.61M420.8 244.02l5.2 2.61M420.8 245.74l5.2 2.61M420.8 247.46l5.2 2.61M420.8 249.18l5.2 2.61M420.8 250.90l5.2 2.61M420.8 252.62l5.2 2.61M420.8 254.34l5.2 2.61" stroke="#cf8a3e" stroke-width="0.92" fill="none"/>
<polygon points="426.0,156.6 417.0,152.1 442.3,139.4 451.3,143.9" fill="#f4cd8b" stroke="#f4cd8b" stroke-width=".3"/>
<polygon points="420.0,150.6 429.0,155.1 429.0,149.1 420.0,144.6" fill="#fdeccc" stroke="#fdeccc" stroke-width=".3"/>
<path d="M420.0 145.18l9.0 4.50M420.0 146.90l9.0 4.50M420.0 148.62l9.0 4.50M420.0 150.34l9.0 4.50" stroke="#6e4a20" stroke-width="0.95" fill="none"/>
<polygon points="429.0,155.1 448.3,145.5 448.3,139.5 429.0,149.1" fill="#ffe9bc" stroke="#ffe9bc" stroke-width=".3"/>
<path d="M429.0 149.68l19.2 -9.61M429.0 151.40l19.2 -9.61M429.0 153.12l19.2 -9.61M429.0 154.84l19.2 -9.61" stroke="#c8843a" stroke-width="0.9" fill="none"/>
<polygon points="429.0,149.1 420.0,144.6 439.3,135.0 448.3,139.5" fill="#f4cd8b" stroke="#f4cd8b" stroke-width=".3"/>
<polygon points="424.1,142.6 433.1,147.1 433.1,144.3 424.1,139.8" fill="#fdeccc" stroke="#fdeccc" stroke-width=".3"/>
<path d="M424.1 140.35l9.0 4.50M424.1 142.07l9.0 4.50" stroke="#6e4a20" stroke-width="0.95" fill="none"/>
<polygon points="433.1,147.1 444.2,141.5 444.2,138.7 433.1,144.3" fill="#e9bd7a" stroke="#e9bd7a" stroke-width=".3"/>
<polygon points="433.1,144.3 424.1,139.8 435.2,134.2 444.2,138.7" fill="#f4cd8b" stroke="#f4cd8b" stroke-width=".3"/>
<polygon points="427.5,138.9 434.7,142.5 434.7,137.6 427.5,134.0" fill="#fdeccc" stroke="#fdeccc" stroke-width=".3"/>
<path d="M427.5 134.64l7.2 3.60M427.5 136.36l7.2 3.60M427.5 138.08l7.2 3.60" stroke="#6e4a20" stroke-width="0.95" fill="none"/>
<polygon points="434.7,142.5 440.8,139.5 440.8,134.6 434.7,137.6" fill="#e6b873" stroke="#e6b873" stroke-width=".3"/>
<polygon points="434.7,137.6 427.5,134.0 433.6,131.0 440.8,134.6" fill="#f7d495" stroke="#f7d495" stroke-width=".3"/>
<polygon points="195.5,249.0 199.0,247.5 210.0,256.0 218.0,253.5 229.3,249.0 229.3,259.5 189.5,275.0 187.8,272.5 195.7,268.0" fill="#f4cd8b" />
<polygon points="229.3,257.6 229.3,259.8 189.5,275.2 188.2,273.2" fill="#d8a666" />
<polygon points="497.0,256.0 505.0,260.0 505.0,208.0 497.0,204.0" fill="#fff0d6" stroke="#fff0d6" stroke-width=".3"/>
<path d="M497.0 204.58l8.0 4.00M497.0 206.30l8.0 4.00M497.0 208.02l8.0 4.00M497.0 209.74l8.0 4.00M497.0 211.46l8.0 4.00M497.0 213.18l8.0 4.00M497.0 214.90l8.0 4.00M497.0 216.62l8.0 4.00M497.0 218.34l8.0 4.00M497.0 220.06l8.0 4.00M497.0 221.78l8.0 4.00M497.0 223.50l8.0 4.00M497.0 225.22l8.0 4.00M497.0 226.94l8.0 4.00M497.0 228.66l8.0 4.00M497.0 230.38l8.0 4.00M497.0 232.10l8.0 4.00M497.0 233.82l8.0 4.00M497.0 235.54l8.0 4.00M497.0 237.26l8.0 4.00M497.0 238.98l8.0 4.00M497.0 240.70l8.0 4.00M497.0 242.42l8.0 4.00M497.0 244.14l8.0 4.00M497.0 245.86l8.0 4.00M497.0 247.58l8.0 4.00M497.0 249.30l8.0 4.00M497.0 251.02l8.0 4.00M497.0 252.74l8.0 4.00M497.0 254.46l8.0 4.00" stroke="#6e4a20" stroke-width="0.9" fill="none"/>
<polygon points="505.0,260.0 533.0,246.0 533.0,194.0 505.0,208.0" fill="#ffe9bc" stroke="#ffe9bc" stroke-width=".3"/>
<path d="M505.0 208.58l28.0 -14.00M505.0 210.30l28.0 -14.00M505.0 212.02l28.0 -14.00M505.0 213.74l28.0 -14.00M505.0 215.46l28.0 -14.00M505.0 217.18l28.0 -14.00M505.0 218.90l28.0 -14.00M505.0 220.62l28.0 -14.00M505.0 222.34l28.0 -14.00M505.0 224.06l28.0 -14.00M505.0 225.78l28.0 -14.00M505.0 227.50l28.0 -14.00M505.0 229.22l28.0 -14.00M505.0 230.94l28.0 -14.00M505.0 232.66l28.0 -14.00M505.0 234.38l28.0 -14.00M505.0 236.10l28.0 -14.00M505.0 237.82l28.0 -14.00M505.0 239.54l28.0 -14.00M505.0 241.26l28.0 -14.00M505.0 242.98l28.0 -14.00M505.0 244.70l28.0 -14.00M505.0 246.42l28.0 -14.00M505.0 248.14l28.0 -14.00M505.0 249.86l28.0 -14.00M505.0 251.58l28.0 -14.00M505.0 253.30l28.0 -14.00M505.0 255.02l28.0 -14.00M505.0 256.74l28.0 -14.00M505.0 258.46l28.0 -14.00" stroke="#cf8a3e" stroke-width="0.92" fill="none"/>
<polygon points="505.0,260.0 505.8,259.6 505.8,207.6 505.0,208.0" fill="#fff0d0" />
<polygon points="510.6,257.2 514.4,255.3 514.4,203.3 510.6,205.2" fill="#fff0d6" />
<path d="M510.6 205.78l3.8 -1.89M510.6 207.50l3.8 -1.89M510.6 209.22l3.8 -1.89M510.6 210.94l3.8 -1.89M510.6 212.66l3.8 -1.89M510.6 214.38l3.8 -1.89M510.6 216.10l3.8 -1.89M510.6 217.82l3.8 -1.89M510.6 219.54l3.8 -1.89M510.6 221.26l3.8 -1.89M510.6 222.98l3.8 -1.89M510.6 224.70l3.8 -1.89M510.6 226.42l3.8 -1.89M510.6 228.14l3.8 -1.89M510.6 229.86l3.8 -1.89M510.6 231.58l3.8 -1.89M510.6 233.30l3.8 -1.89M510.6 235.02l3.8 -1.89M510.6 236.74l3.8 -1.89M510.6 238.46l3.8 -1.89M510.6 240.18l3.8 -1.89M510.6 241.90l3.8 -1.89M510.6 243.62l3.8 -1.89M510.6 245.34l3.8 -1.89M510.6 247.06l3.8 -1.89M510.6 248.78l3.8 -1.89M510.6 250.50l3.8 -1.89M510.6 252.22l3.8 -1.89M510.6 253.94l3.8 -1.89M510.6 255.66l3.8 -1.89" stroke="#6e4a20" stroke-width="0.9" fill="none"/>
<polygon points="514.4,255.3 514.9,255.0 514.9,203.0 514.4,203.3" fill="#fff0d0" />
<polygon points="523.8,250.6 527.4,248.8 527.4,196.8 523.8,198.6" fill="#fff0d6" />
<path d="M523.8 199.20l3.6 -1.82M523.8 200.92l3.6 -1.82M523.8 202.64l3.6 -1.82M523.8 204.36l3.6 -1.82M523.8 206.08l3.6 -1.82M523.8 207.80l3.6 -1.82M523.8 209.52l3.6 -1.82M523.8 211.24l3.6 -1.82M523.8 212.96l3.6 -1.82M523.8 214.68l3.6 -1.82M523.8 216.40l3.6 -1.82M523.8 218.12l3.6 -1.82M523.8 219.84l3.6 -1.82M523.8 221.56l3.6 -1.82M523.8 223.28l3.6 -1.82M523.8 225.00l3.6 -1.82M523.8 226.72l3.6 -1.82M523.8 228.44l3.6 -1.82M523.8 230.16l3.6 -1.82M523.8 231.88l3.6 -1.82M523.8 233.60l3.6 -1.82M523.8 235.32l3.6 -1.82M523.8 237.04l3.6 -1.82M523.8 238.76l3.6 -1.82M523.8 240.48l3.6 -1.82M523.8 242.20l3.6 -1.82M523.8 243.92l3.6 -1.82M523.8 245.64l3.6 -1.82M523.8 247.36l3.6 -1.82M523.8 249.08l3.6 -1.82" stroke="#6e4a20" stroke-width="0.9" fill="none"/>
<polygon points="527.4,248.8 528.0,248.5 528.0,196.5 527.4,196.8" fill="#fff0d0" />
<polygon points="532.2,246.4 533.0,246.0 533.0,194.0 532.2,194.4" fill="#f6d49a" />
<polygon points="505.0,260.0 500.4,257.7 500.4,205.7 505.0,208.0" fill="#ffe9bc" />
<path d="M500.4 206.26l4.6 2.32M500.4 207.98l4.6 2.32M500.4 209.70l4.6 2.32M500.4 211.42l4.6 2.32M500.4 213.14l4.6 2.32M500.4 214.86l4.6 2.32M500.4 216.58l4.6 2.32M500.4 218.30l4.6 2.32M500.4 220.02l4.6 2.32M500.4 221.74l4.6 2.32M500.4 223.46l4.6 2.32M500.4 225.18l4.6 2.32M500.4 226.90l4.6 2.32M500.4 228.62l4.6 2.32M500.4 230.34l4.6 2.32M500.4 232.06l4.6 2.32M500.4 233.78l4.6 2.32M500.4 235.50l4.6 2.32M500.4 237.22l4.6 2.32M500.4 238.94l4.6 2.32M500.4 240.66l4.6 2.32M500.4 242.38l4.6 2.32M500.4 244.10l4.6 2.32M500.4 245.82l4.6 2.32M500.4 247.54l4.6 2.32M500.4 249.26l4.6 2.32M500.4 250.98l4.6 2.32M500.4 252.70l4.6 2.32M500.4 254.42l4.6 2.32M500.4 256.14l4.6 2.32" stroke="#cf8a3e" stroke-width="0.92" fill="none"/>
<polygon points="505.0,208.0 497.0,204.0 525.0,190.0 533.0,194.0" fill="#f4cd8b" stroke="#f4cd8b" stroke-width=".3"/>
<polygon points="500.4,202.3 508.4,206.3 508.4,200.3 500.4,196.3" fill="#fdeccc" stroke="#fdeccc" stroke-width=".3"/>
<path d="M500.4 196.90l8.0 4.00M500.4 198.62l8.0 4.00M500.4 200.34l8.0 4.00M500.4 202.06l8.0 4.00" stroke="#6e4a20" stroke-width="0.95" fill="none"/>
<polygon points="508.4,206.3 529.6,195.7 529.6,189.7 508.4,200.3" fill="#ffe9bc" stroke="#ffe9bc" stroke-width=".3"/>
<path d="M508.4 200.90l21.3 -10.64M508.4 202.62l21.3 -10.64M508.4 204.34l21.3 -10.64M508.4 206.06l21.3 -10.64" stroke="#c8843a" stroke-width="0.9" fill="none"/>
<polygon points="508.4,200.3 500.4,196.3 521.6,185.7 529.6,189.7" fill="#f4cd8b" stroke="#f4cd8b" stroke-width=".3"/>
<polygon points="504.8,194.1 512.8,198.1 512.8,195.3 504.8,191.3" fill="#fdeccc" stroke="#fdeccc" stroke-width=".3"/>
<path d="M504.8 191.86l8.0 4.00M504.8 193.58l8.0 4.00" stroke="#6e4a20" stroke-width="0.95" fill="none"/>
<polygon points="512.8,198.1 525.2,191.9 525.2,189.1 512.8,195.3" fill="#e9bd7a" stroke="#e9bd7a" stroke-width=".3"/>
<polygon points="512.8,195.3 504.8,191.3 517.2,185.1 525.2,189.1" fill="#f4cd8b" stroke="#f4cd8b" stroke-width=".3"/>
<polygon points="508.4,190.3 514.8,193.5 514.8,188.6 508.4,185.4" fill="#fdeccc" stroke="#fdeccc" stroke-width=".3"/>
<path d="M508.4 185.96l6.4 3.20M508.4 187.68l6.4 3.20M508.4 189.40l6.4 3.20" stroke="#6e4a20" stroke-width="0.95" fill="none"/>
<polygon points="514.8,193.5 521.6,190.1 521.6,185.2 514.8,188.6" fill="#e6b873" stroke="#e6b873" stroke-width=".3"/>
<polygon points="514.8,188.6 508.4,185.4 515.2,182.0 521.6,185.2" fill="#f7d495" stroke="#f7d495" stroke-width=".3"/>
<polygon points="407.6,258.6 416.5,263.0 416.5,168.3 407.6,163.9" fill="#fff0d6" stroke="#fff0d6" stroke-width=".3"/>
<path d="M407.6 164.47l8.9 4.45M407.6 166.19l8.9 4.45M407.6 167.91l8.9 4.45M407.6 169.63l8.9 4.45M407.6 171.35l8.9 4.45M407.6 173.07l8.9 4.45M407.6 174.79l8.9 4.45M407.6 176.51l8.9 4.45M407.6 178.23l8.9 4.45M407.6 179.95l8.9 4.45M407.6 181.67l8.9 4.45M407.6 183.39l8.9 4.45M407.6 185.11l8.9 4.45M407.6 186.83l8.9 4.45M407.6 188.55l8.9 4.45M407.6 190.27l8.9 4.45M407.6 191.99l8.9 4.45M407.6 193.71l8.9 4.45M407.6 195.43l8.9 4.45M407.6 197.15l8.9 4.45M407.6 198.87l8.9 4.45M407.6 200.59l8.9 4.45M407.6 202.31l8.9 4.45M407.6 204.03l8.9 4.45M407.6 205.75l8.9 4.45M407.6 207.47l8.9 4.45M407.6 209.19l8.9 4.45M407.6 210.91l8.9 4.45M407.6 212.63l8.9 4.45M407.6 214.35l8.9 4.45M407.6 216.07l8.9 4.45M407.6 217.79l8.9 4.45M407.6 219.51l8.9 4.45M407.6 221.23l8.9 4.45M407.6 222.95l8.9 4.45M407.6 224.67l8.9 4.45M407.6 226.39l8.9 4.45M407.6 228.11l8.9 4.45M407.6 229.83l8.9 4.45M407.6 231.55l8.9 4.45M407.6 233.27l8.9 4.45M407.6 234.99l8.9 4.45M407.6 236.71l8.9 4.45M407.6 238.43l8.9 4.45M407.6 240.15l8.9 4.45M407.6 241.87l8.9 4.45M407.6 243.59l8.9 4.45M407.6 245.31l8.9 4.45M407.6 247.03l8.9 4.45M407.6 248.75l8.9 4.45M407.6 250.47l8.9 4.45M407.6 252.19l8.9 4.45M407.6 253.91l8.9 4.45M407.6 255.63l8.9 4.45M407.6 257.35l8.9 4.45" stroke="#6e4a20" stroke-width="0.9" fill="none"/>
<polygon points="416.5,263.0 443.0,249.8 443.0,155.1 416.5,168.3" fill="#ffe9bc" stroke="#ffe9bc" stroke-width=".3"/>
<path d="M416.5 168.92l26.5 -13.25M416.5 170.64l26.5 -13.25M416.5 172.36l26.5 -13.25M416.5 174.08l26.5 -13.25M416.5 175.80l26.5 -13.25M416.5 177.52l26.5 -13.25M416.5 179.24l26.5 -13.25M416.5 180.96l26.5 -13.25M416.5 182.68l26.5 -13.25M416.5 184.40l26.5 -13.25M416.5 186.12l26.5 -13.25M416.5 187.84l26.5 -13.25M416.5 189.56l26.5 -13.25M416.5 191.28l26.5 -13.25M416.5 193.00l26.5 -13.25M416.5 194.72l26.5 -13.25M416.5 196.44l26.5 -13.25M416.5 198.16l26.5 -13.25M416.5 199.88l26.5 -13.25M416.5 201.60l26.5 -13.25M416.5 203.32l26.5 -13.25M416.5 205.04l26.5 -13.25M416.5 206.76l26.5 -13.25M416.5 208.48l26.5 -13.25M416.5 210.20l26.5 -13.25M416.5 211.92l26.5 -13.25M416.5 213.64l26.5 -13.25M416.5 215.36l26.5 -13.25M416.5 217.08l26.5 -13.25M416.5 218.80l26.5 -13.25M416.5 220.52l26.5 -13.25M416.5 222.24l26.5 -13.25M416.5 223.96l26.5 -13.25M416.5 225.68l26.5 -13.25M416.5 227.40l26.5 -13.25M416.5 229.12l26.5 -13.25M416.5 230.84l26.5 -13.25M416.5 232.56l26.5 -13.25M416.5 234.28l26.5 -13.25M416.5 236.00l26.5 -13.25M416.5 237.72l26.5 -13.25M416.5 239.44l26.5 -13.25M416.5 241.16l26.5 -13.25M416.5 242.88l26.5 -13.25M416.5 244.60l26.5 -13.25M416.5 246.32l26.5 -13.25M416.5 248.04l26.5 -13.25M416.5 249.76l26.5 -13.25M416.5 251.48l26.5 -13.25M416.5 253.20l26.5 -13.25M416.5 254.92l26.5 -13.25M416.5 256.64l26.5 -13.25M416.5 258.36l26.5 -13.25M416.5 260.08l26.5 -13.25M416.5 261.80l26.5 -13.25" stroke="#cf8a3e" stroke-width="0.92" fill="none"/>
<polygon points="416.5,263.0 417.3,262.6 417.3,167.9 416.5,168.3" fill="#fff0d0" />
<polygon points="421.8,260.4 425.4,258.6 425.4,163.9 421.8,165.7" fill="#fff0d6" />
<path d="M421.8 166.27l3.6 -1.79M421.8 167.99l3.6 -1.79M421.8 169.71l3.6 -1.79M421.8 171.43l3.6 -1.79M421.8 173.15l3.6 -1.79M421.8 174.87l3.6 -1.79M421.8 176.59l3.6 -1.79M421.8 178.31l3.6 -1.79M421.8 180.03l3.6 -1.79M421.8 181.75l3.6 -1.79M421.8 183.47l3.6 -1.79M421.8 185.19l3.6 -1.79M421.8 186.91l3.6 -1.79M421.8 188.63l3.6 -1.79M421.8 190.35l3.6 -1.79M421.8 192.07l3.6 -1.79M421.8 193.79l3.6 -1.79M421.8 195.51l3.6 -1.79M421.8 197.23l3.6 -1.79M421.8 198.95l3.6 -1.79M421.8 200.67l3.6 -1.79M421.8 202.39l3.6 -1.79M421.8 204.11l3.6 -1.79M421.8 205.83l3.6 -1.79M421.8 207.55l3.6 -1.79M421.8 209.27l3.6 -1.79M421.8 210.99l3.6 -1.79M421.8 212.71l3.6 -1.79M421.8 214.43l3.6 -1.79M421.8 216.15l3.6 -1.79M421.8 217.87l3.6 -1.79M421.8 219.59l3.6 -1.79M421.8 221.31l3.6 -1.79M421.8 223.03l3.6 -1.79M421.8 224.75l3.6 -1.79M421.8 226.47l3.6 -1.79M421.8 228.19l3.6 -1.79M421.8 229.91l3.6 -1.79M421.8 231.63l3.6 -1.79M421.8 233.35l3.6 -1.79M421.8 235.07l3.6 -1.79M421.8 236.79l3.6 -1.79M421.8 238.51l3.6 -1.79M421.8 240.23l3.6 -1.79M421.8 241.95l3.6 -1.79M421.8 243.67l3.6 -1.79M421.8 245.39l3.6 -1.79M421.8 247.11l3.6 -1.79M421.8 248.83l3.6 -1.79M421.8 250.55l3.6 -1.79M421.8 252.27l3.6 -1.79M421.8 253.99l3.6 -1.79M421.8 255.71l3.6 -1.79M421.8 257.43l3.6 -1.79M421.8 259.15l3.6 -1.79" stroke="#6e4a20" stroke-width="0.9" fill="none"/>
<polygon points="425.4,258.6 425.9,258.3 425.9,163.6 425.4,163.9" fill="#fff0d0" />
<polygon points="434.3,254.1 437.7,252.4 437.7,157.7 434.3,159.4" fill="#fff0d6" />
<path d="M434.3 160.04l3.4 -1.72M434.3 161.76l3.4 -1.72M434.3 163.48l3.4 -1.72M434.3 165.20l3.4 -1.72M434.3 166.92l3.4 -1.72M434.3 168.64l3.4 -1.72M434.3 170.36l3.4 -1.72M434.3 172.08l3.4 -1.72M434.3 173.80l3.4 -1.72M434.3 175.52l3.4 -1.72M434.3 177.24l3.4 -1.72M434.3 178.96l3.4 -1.72M434.3 180.68l3.4 -1.72M434.3 182.40l3.4 -1.72M434.3 184.12l3.4 -1.72M434.3 185.84l3.4 -1.72M434.3 187.56l3.4 -1.72M434.3 189.28l3.4 -1.72M434.3 191.00l3.4 -1.72M434.3 192.72l3.4 -1.72M434.3 194.44l3.4 -1.72M434.3 196.16l3.4 -1.72M434.3 197.88l3.4 -1.72M434.3 199.60l3.4 -1.72M434.3 201.32l3.4 -1.72M434.3 203.04l3.4 -1.72M434.3 204.76l3.4 -1.72M434.3 206.48l3.4 -1.72M434.3 208.20l3.4 -1.72M434.3 209.92l3.4 -1.72M434.3 211.64l3.4 -1.72M434.3 213.36l3.4 -1.72M434.3 215.08l3.4 -1.72M434.3 216.80l3.4 -1.72M434.3 218.52l3.4 -1.72M434.3 220.24l3.4 -1.72M434.3 221.96l3.4 -1.72M434.3 223.68l3.4 -1.72M434.3 225.40l3.4 -1.72M434.3 227.12l3.4 -1.72M434.3 228.84l3.4 -1.72M434.3 230.56l3.4 -1.72M434.3 232.28l3.4 -1.72M434.3 234.00l3.4 -1.72M434.3 235.72l3.4 -1.72M434.3 237.44l3.4 -1.72M434.3 239.16l3.4 -1.72M434.3 240.88l3.4 -1.72M434.3 242.60l3.4 -1.72M434.3 244.32l3.4 -1.72M434.3 246.04l3.4 -1.72M434.3 247.76l3.4 -1.72M434.3 249.48l3.4 -1.72M434.3 251.20l3.4 -1.72M434.3 252.92l3.4 -1.72" stroke="#6e4a20" stroke-width="0.9" fill="none"/>
<polygon points="437.7,252.4 438.2,252.1 438.2,157.5 437.7,157.7" fill="#fff0d0" />
<polygon points="442.2,250.1 443.0,249.8 443.0,155.1 442.2,155.5" fill="#f6d49a" />
<polygon points="416.5,263.0 411.3,260.4 411.3,165.7 416.5,168.3" fill="#ffe9bc" />
<path d="M411.3 166.34l5.2 2.58M411.3 168.06l5.2 2.58M411.3 169.78l5.2 2.58M411.3 171.50l5.2 2.58M411.3 173.22l5.2 2.58M411.3 174.94l5.2 2.58M411.3 176.66l5.2 2.58M411.3 178.38l5.2 2.58M411.3 180.10l5.2 2.58M411.3 181.82l5.2 2.58M411.3 183.54l5.2 2.58M411.3 185.26l5.2 2.58M411.3 186.98l5.2 2.58M411.3 188.70l5.2 2.58M411.3 190.42l5.2 2.58M411.3 192.14l5.2 2.58M411.3 193.86l5.2 2.58M411.3 195.58l5.2 2.58M411.3 197.30l5.2 2.58M411.3 199.02l5.2 2.58M411.3 200.74l5.2 2.58M411.3 202.46l5.2 2.58M411.3 204.18l5.2 2.58M411.3 205.90l5.2 2.58M411.3 207.62l5.2 2.58M411.3 209.34l5.2 2.58M411.3 211.06l5.2 2.58M411.3 212.78l5.2 2.58M411.3 214.50l5.2 2.58M411.3 216.22l5.2 2.58M411.3 217.94l5.2 2.58M411.3 219.66l5.2 2.58M411.3 221.38l5.2 2.58M411.3 223.10l5.2 2.58M411.3 224.82l5.2 2.58M411.3 226.54l5.2 2.58M411.3 228.26l5.2 2.58M411.3 229.98l5.2 2.58M411.3 231.70l5.2 2.58M411.3 233.42l5.2 2.58M411.3 235.14l5.2 2.58M411.3 236.86l5.2 2.58M411.3 238.58l5.2 2.58M411.3 240.30l5.2 2.58M411.3 242.02l5.2 2.58M411.3 243.74l5.2 2.58M411.3 245.46l5.2 2.58M411.3 247.18l5.2 2.58M411.3 248.90l5.2 2.58M411.3 250.62l5.2 2.58M411.3 252.34l5.2 2.58M411.3 254.06l5.2 2.58M411.3 255.78l5.2 2.58M411.3 257.50l5.2 2.58M411.3 259.22l5.2 2.58" stroke="#cf8a3e" stroke-width="0.92" fill="none"/>
<polygon points="416.5,168.3 407.6,163.9 434.1,150.6 443.0,155.1" fill="#f4cd8b" stroke="#f4cd8b" stroke-width=".3"/>
<polygon points="410.8,162.3 419.7,166.7 419.7,160.7 410.8,156.3" fill="#fdeccc" stroke="#fdeccc" stroke-width=".3"/>
<path d="M410.8 156.88l8.9 4.45M410.8 158.60l8.9 4.45M410.8 160.32l8.9 4.45M410.8 162.04l8.9 4.45" stroke="#6e4a20" stroke-width="0.95" fill="none"/>
<polygon points="419.7,166.7 439.8,156.7 439.8,150.7 419.7,160.7" fill="#ffe9bc" stroke="#ffe9bc" stroke-width=".3"/>
<path d="M419.7 161.33l20.1 -10.07M419.7 163.05l20.1 -10.07M419.7 164.77l20.1 -10.07M419.7 166.49l20.1 -10.07" stroke="#c8843a" stroke-width="0.9" fill="none"/>
<polygon points="419.7,160.7 410.8,156.3 430.9,146.2 439.8,150.7" fill="#f4cd8b" stroke="#f4cd8b" stroke-width=".3"/>
<polygon points="415.0,154.2 423.9,158.6 423.9,155.8 415.0,151.4" fill="#fdeccc" stroke="#fdeccc" stroke-width=".3"/>
<path d="M415.0 151.96l8.9 4.45M415.0 153.68l8.9 4.45" stroke="#6e4a20" stroke-width="0.95" fill="none"/>
<polygon points="423.9,158.6 435.6,152.8 435.6,150.0 423.9,155.8" fill="#e9bd7a" stroke="#e9bd7a" stroke-width=".3"/>
<polygon points="423.9,155.8 415.0,151.4 426.7,145.5 435.6,150.0" fill="#f4cd8b" stroke="#f4cd8b" stroke-width=".3"/>
<polygon points="418.6,150.5 425.7,154.0 425.7,149.1 418.6,145.6" fill="#fdeccc" stroke="#fdeccc" stroke-width=".3"/>
<path d="M418.6 146.18l7.1 3.56M418.6 147.90l7.1 3.56M418.6 149.62l7.1 3.56" stroke="#6e4a20" stroke-width="0.95" fill="none"/>
<polygon points="425.7,154.0 432.0,150.9 432.0,146.0 425.7,149.1" fill="#e6b873" stroke="#e6b873" stroke-width=".3"/>
<polygon points="425.7,149.1 418.6,145.6 424.9,142.4 432.0,146.0" fill="#f7d495" stroke="#f7d495" stroke-width=".3"/>
<polygon points="153.5,280.6 163.5,285.6 163.5,193.2 153.5,188.2" fill="#fff0d6" stroke="#fff0d6" stroke-width=".3"/>
<path d="M153.5 188.78l10.0 5.00M153.5 190.50l10.0 5.00M153.5 192.22l10.0 5.00M153.5 193.94l10.0 5.00M153.5 195.66l10.0 5.00M153.5 197.38l10.0 5.00M153.5 199.10l10.0 5.00M153.5 200.82l10.0 5.00M153.5 202.54l10.0 5.00M153.5 204.26l10.0 5.00M153.5 205.98l10.0 5.00M153.5 207.70l10.0 5.00M153.5 209.42l10.0 5.00M153.5 211.14l10.0 5.00M153.5 212.86l10.0 5.00M153.5 214.58l10.0 5.00M153.5 216.30l10.0 5.00M153.5 218.02l10.0 5.00M153.5 219.74l10.0 5.00M153.5 221.46l10.0 5.00M153.5 223.18l10.0 5.00M153.5 224.90l10.0 5.00M153.5 226.62l10.0 5.00M153.5 228.34l10.0 5.00M153.5 230.06l10.0 5.00M153.5 231.78l10.0 5.00M153.5 233.50l10.0 5.00M153.5 235.22l10.0 5.00M153.5 236.94l10.0 5.00M153.5 238.66l10.0 5.00M153.5 240.38l10.0 5.00M153.5 242.10l10.0 5.00M153.5 243.82l10.0 5.00M153.5 245.54l10.0 5.00M153.5 247.26l10.0 5.00M153.5 248.98l10.0 5.00M153.5 250.70l10.0 5.00M153.5 252.42l10.0 5.00M153.5 254.14l10.0 5.00M153.5 255.86l10.0 5.00M153.5 257.58l10.0 5.00M153.5 259.30l10.0 5.00M153.5 261.02l10.0 5.00M153.5 262.74l10.0 5.00M153.5 264.46l10.0 5.00M153.5 266.18l10.0 5.00M153.5 267.90l10.0 5.00M153.5 269.62l10.0 5.00M153.5 271.34l10.0 5.00M153.5 273.06l10.0 5.00M153.5 274.78l10.0 5.00M153.5 276.50l10.0 5.00M153.5 278.22l10.0 5.00M153.5 279.94l10.0 5.00" stroke="#6e4a20" stroke-width="0.9" fill="none"/>
<polygon points="163.5,285.6 195.7,269.5 195.7,177.1 163.5,193.2" fill="#ffe9bc" stroke="#ffe9bc" stroke-width=".3"/>
<path d="M163.5 193.78l32.2 -16.10M163.5 195.50l32.2 -16.10M163.5 197.22l32.2 -16.10M163.5 198.94l32.2 -16.10M163.5 200.66l32.2 -16.10M163.5 202.38l32.2 -16.10M163.5 204.10l32.2 -16.10M163.5 205.82l32.2 -16.10M163.5 207.54l32.2 -16.10M163.5 209.26l32.2 -16.10M163.5 210.98l32.2 -16.10M163.5 212.70l32.2 -16.10M163.5 214.42l32.2 -16.10M163.5 216.14l32.2 -16.10M163.5 217.86l32.2 -16.10M163.5 219.58l32.2 -16.10M163.5 221.30l32.2 -16.10M163.5 223.02l32.2 -16.10M163.5 224.74l32.2 -16.10M163.5 226.46l32.2 -16.10M163.5 228.18l32.2 -16.10M163.5 229.90l32.2 -16.10M163.5 231.62l32.2 -16.10M163.5 233.34l32.2 -16.10M163.5 235.06l32.2 -16.10M163.5 236.78l32.2 -16.10M163.5 238.50l32.2 -16.10M163.5 240.22l32.2 -16.10M163.5 241.94l32.2 -16.10M163.5 243.66l32.2 -16.10M163.5 245.38l32.2 -16.10M163.5 247.10l32.2 -16.10M163.5 248.82l32.2 -16.10M163.5 250.54l32.2 -16.10M163.5 252.26l32.2 -16.10M163.5 253.98l32.2 -16.10M163.5 255.70l32.2 -16.10M163.5 257.42l32.2 -16.10M163.5 259.14l32.2 -16.10M163.5 260.86l32.2 -16.10M163.5 262.58l32.2 -16.10M163.5 264.30l32.2 -16.10M163.5 266.02l32.2 -16.10M163.5 267.74l32.2 -16.10M163.5 269.46l32.2 -16.10M163.5 271.18l32.2 -16.10M163.5 272.90l32.2 -16.10M163.5 274.62l32.2 -16.10M163.5 276.34l32.2 -16.10M163.5 278.06l32.2 -16.10M163.5 279.78l32.2 -16.10M163.5 281.50l32.2 -16.10M163.5 283.22l32.2 -16.10M163.5 284.94l32.2 -16.10" stroke="#cf8a3e" stroke-width="0.92" fill="none"/>
<polygon points="163.5,285.6 164.5,285.1 164.5,192.7 163.5,193.2" fill="#fff0d0" />
<polygon points="169.9,282.4 174.3,280.2 174.3,187.8 169.9,190.0" fill="#fff0d6" />
<path d="M169.9 190.56l4.3 -2.17M169.9 192.28l4.3 -2.17M169.9 194.00l4.3 -2.17M169.9 195.72l4.3 -2.17M169.9 197.44l4.3 -2.17M169.9 199.16l4.3 -2.17M169.9 200.88l4.3 -2.17M169.9 202.60l4.3 -2.17M169.9 204.32l4.3 -2.17M169.9 206.04l4.3 -2.17M169.9 207.76l4.3 -2.17M169.9 209.48l4.3 -2.17M169.9 211.20l4.3 -2.17M169.9 212.92l4.3 -2.17M169.9 214.64l4.3 -2.17M169.9 216.36l4.3 -2.17M169.9 218.08l4.3 -2.17M169.9 219.80l4.3 -2.17M169.9 221.52l4.3 -2.17M169.9 223.24l4.3 -2.17M169.9 224.96l4.3 -2.17M169.9 226.68l4.3 -2.17M169.9 228.40l4.3 -2.17M169.9 230.12l4.3 -2.17M169.9 231.84l4.3 -2.17M169.9 233.56l4.3 -2.17M169.9 235.28l4.3 -2.17M169.9 237.00l4.3 -2.17M169.9 238.72l4.3 -2.17M169.9 240.44l4.3 -2.17M169.9 242.16l4.3 -2.17M169.9 243.88l4.3 -2.17M169.9 245.60l4.3 -2.17M169.9 247.32l4.3 -2.17M169.9 249.04l4.3 -2.17M169.9 250.76l4.3 -2.17M169.9 252.48l4.3 -2.17M169.9 254.20l4.3 -2.17M169.9 255.92l4.3 -2.17M169.9 257.64l4.3 -2.17M169.9 259.36l4.3 -2.17M169.9 261.08l4.3 -2.17M169.9 262.80l4.3 -2.17M169.9 264.52l4.3 -2.17M169.9 266.24l4.3 -2.17M169.9 267.96l4.3 -2.17M169.9 269.68l4.3 -2.17M169.9 271.40l4.3 -2.17M169.9 273.12l4.3 -2.17M169.9 274.84l4.3 -2.17M169.9 276.56l4.3 -2.17M169.9 278.28l4.3 -2.17M169.9 280.00l4.3 -2.17M169.9 281.72l4.3 -2.17" stroke="#6e4a20" stroke-width="0.9" fill="none"/>
<polygon points="174.3,280.2 174.9,279.9 174.9,187.5 174.3,187.8" fill="#fff0d0" />
<polygon points="185.1,274.8 189.3,272.7 189.3,180.3 185.1,182.4" fill="#fff0d6" />
<path d="M185.1 183.00l4.2 -2.09M185.1 184.72l4.2 -2.09M185.1 186.44l4.2 -2.09M185.1 188.16l4.2 -2.09M185.1 189.88l4.2 -2.09M185.1 191.60l4.2 -2.09M185.1 193.32l4.2 -2.09M185.1 195.04l4.2 -2.09M185.1 196.76l4.2 -2.09M185.1 198.48l4.2 -2.09M185.1 200.20l4.2 -2.09M185.1 201.92l4.2 -2.09M185.1 203.64l4.2 -2.09M185.1 205.36l4.2 -2.09M185.1 207.08l4.2 -2.09M185.1 208.80l4.2 -2.09M185.1 210.52l4.2 -2.09M185.1 212.24l4.2 -2.09M185.1 213.96l4.2 -2.09M185.1 215.68l4.2 -2.09M185.1 217.40l4.2 -2.09M185.1 219.12l4.2 -2.09M185.1 220.84l4.2 -2.09M185.1 222.56l4.2 -2.09M185.1 224.28l4.2 -2.09M185.1 226.00l4.2 -2.09M185.1 227.72l4.2 -2.09M185.1 229.44l4.2 -2.09M185.1 231.16l4.2 -2.09M185.1 232.88l4.2 -2.09M185.1 234.60l4.2 -2.09M185.1 236.32l4.2 -2.09M185.1 238.04l4.2 -2.09M185.1 239.76l4.2 -2.09M185.1 241.48l4.2 -2.09M185.1 243.20l4.2 -2.09M185.1 244.92l4.2 -2.09M185.1 246.64l4.2 -2.09M185.1 248.36l4.2 -2.09M185.1 250.08l4.2 -2.09M185.1 251.80l4.2 -2.09M185.1 253.52l4.2 -2.09M185.1 255.24l4.2 -2.09M185.1 256.96l4.2 -2.09M185.1 258.68l4.2 -2.09M185.1 260.39l4.2 -2.09M185.1 262.12l4.2 -2.09M185.1 263.84l4.2 -2.09M185.1 265.56l4.2 -2.09M185.1 267.27l4.2 -2.09M185.1 269.00l4.2 -2.09M185.1 270.72l4.2 -2.09M185.1 272.44l4.2 -2.09M185.1 274.15l4.2 -2.09" stroke="#6e4a20" stroke-width="0.9" fill="none"/>
<polygon points="189.3,272.7 189.9,272.4 189.9,180.0 189.3,180.3" fill="#fff0d0" />
<polygon points="194.7,270.0 195.7,269.5 195.7,177.1 194.7,177.6" fill="#f6d49a" />
<polygon points="163.5,285.6 157.7,282.7 157.7,190.3 163.5,193.2" fill="#ffe9bc" />
<path d="M157.7 190.88l5.8 2.90M157.7 192.60l5.8 2.90M157.7 194.32l5.8 2.90M157.7 196.04l5.8 2.90M157.7 197.76l5.8 2.90M157.7 199.48l5.8 2.90M157.7 201.20l5.8 2.90M157.7 202.92l5.8 2.90M157.7 204.64l5.8 2.90M157.7 206.36l5.8 2.90M157.7 208.08l5.8 2.90M157.7 209.80l5.8 2.90M157.7 211.52l5.8 2.90M157.7 213.24l5.8 2.90M157.7 214.96l5.8 2.90M157.7 216.68l5.8 2.90M157.7 218.40l5.8 2.90M157.7 220.12l5.8 2.90M157.7 221.84l5.8 2.90M157.7 223.56l5.8 2.90M157.7 225.28l5.8 2.90M157.7 227.00l5.8 2.90M157.7 228.72l5.8 2.90M157.7 230.44l5.8 2.90M157.7 232.16l5.8 2.90M157.7 233.88l5.8 2.90M157.7 235.60l5.8 2.90M157.7 237.32l5.8 2.90M157.7 239.04l5.8 2.90M157.7 240.76l5.8 2.90M157.7 242.48l5.8 2.90M157.7 244.20l5.8 2.90M157.7 245.92l5.8 2.90M157.7 247.64l5.8 2.90M157.7 249.36l5.8 2.90M157.7 251.08l5.8 2.90M157.7 252.80l5.8 2.90M157.7 254.52l5.8 2.90M157.7 256.24l5.8 2.90M157.7 257.96l5.8 2.90M157.7 259.68l5.8 2.90M157.7 261.40l5.8 2.90M157.7 263.12l5.8 2.90M157.7 264.84l5.8 2.90M157.7 266.56l5.8 2.90M157.7 268.28l5.8 2.90M157.7 270.00l5.8 2.90M157.7 271.72l5.8 2.90M157.7 273.44l5.8 2.90M157.7 275.16l5.8 2.90M157.7 276.88l5.8 2.90M157.7 278.60l5.8 2.90M157.7 280.32l5.8 2.90M157.7 282.04l5.8 2.90" stroke="#cf8a3e" stroke-width="0.92" fill="none"/>
<polygon points="163.5,193.2 153.5,188.2 185.7,172.1 195.7,177.1" fill="#f4cd8b" stroke="#f4cd8b" stroke-width=".3"/>
<polygon points="157.4,186.3 167.4,191.3 167.4,185.3 157.4,180.3" fill="#fdeccc" stroke="#fdeccc" stroke-width=".3"/>
<path d="M157.4 180.85l10.0 5.00M157.4 182.57l10.0 5.00M157.4 184.29l10.0 5.00M157.4 186.01l10.0 5.00" stroke="#6e4a20" stroke-width="0.95" fill="none"/>
<polygon points="167.4,191.3 191.8,179.0 191.8,173.0 167.4,185.3" fill="#ffe9bc" stroke="#ffe9bc" stroke-width=".3"/>
<path d="M167.4 185.85l24.5 -12.24M167.4 187.57l24.5 -12.24M167.4 189.29l24.5 -12.24M167.4 191.01l24.5 -12.24" stroke="#c8843a" stroke-width="0.9" fill="none"/>
<polygon points="167.4,185.3 157.4,180.3 181.8,168.0 191.8,173.0" fill="#f4cd8b" stroke="#f4cd8b" stroke-width=".3"/>
<polygon points="162.5,177.7 172.5,182.7 172.5,179.9 162.5,174.9" fill="#fdeccc" stroke="#fdeccc" stroke-width=".3"/>
<path d="M162.5 175.47l10.0 5.00M162.5 177.19l10.0 5.00" stroke="#6e4a20" stroke-width="0.95" fill="none"/>
<polygon points="172.5,182.7 186.7,175.6 186.7,172.8 172.5,179.9" fill="#e9bd7a" stroke="#e9bd7a" stroke-width=".3"/>
<polygon points="172.5,179.9 162.5,174.9 176.7,167.8 186.7,172.8" fill="#f4cd8b" stroke="#f4cd8b" stroke-width=".3"/>
<polygon points="166.7,173.8 174.7,177.8 174.7,172.9 166.7,168.9" fill="#fdeccc" stroke="#fdeccc" stroke-width=".3"/>
<path d="M166.7 169.46l8.0 4.00M166.7 171.18l8.0 4.00M166.7 172.90l8.0 4.00" stroke="#6e4a20" stroke-width="0.95" fill="none"/>
<polygon points="174.7,177.8 182.5,173.9 182.5,169.0 174.7,172.9" fill="#e6b873" stroke="#e6b873" stroke-width=".3"/>
<polygon points="174.7,172.9 166.7,168.9 174.5,165.0 182.5,169.0" fill="#f7d495" stroke="#f7d495" stroke-width=".3"/>
<polygon points="541.8,270.8 579.5,289.6 579.5,274.6 541.8,255.8" fill="#f6d9a4" stroke="#f6d9a4" stroke-width=".3"/>
<path d="M541.8 256.35l37.7 18.85M541.8 258.85l37.7 18.85M541.8 261.35l37.7 18.85M541.8 263.85l37.7 18.85M541.8 266.35l37.7 18.85M541.8 268.85l37.7 18.85" stroke="#a87840" stroke-width="0.95" fill="none"/>
<polygon points="579.5,289.6 614.8,272.0 614.8,257.0 579.5,274.6" fill="#fbe0ac" stroke="#fbe0ac" stroke-width=".3"/>
<path d="M579.5 275.20l35.3 -17.65M579.5 277.70l35.3 -17.65M579.5 280.20l35.3 -17.65M579.5 282.70l35.3 -17.65M579.5 285.20l35.3 -17.65M579.5 287.70l35.3 -17.65" stroke="#c89450" stroke-width="0.9" fill="none"/>
<polygon points="579.5,274.6 541.8,255.8 577.1,238.1 614.8,257.0" fill="#f4cd8b" stroke="#f4cd8b" stroke-width=".3"/>
<polygon points="565.2,256.9 592.9,243.5 593.4,248.8 574.4,262.9" fill="#dcae6c" />
<polyline points="566.9,257.9 593.1,245.1" fill="none" stroke="#b07e44" stroke-width="0.7" stroke-linejoin="round" />
<polyline points="569.4,259.6 593.2,247.0" fill="none" stroke="#b07e44" stroke-width="0.7" stroke-linejoin="round" />
<polyline points="571.9,261.3 593.4,248.7" fill="none" stroke="#b07e44" stroke-width="0.7" stroke-linejoin="round" />
<polygon points="574.4,262.9 593.4,248.8 595.4,251.9 580.3,263.3" fill="#e9bd7a" />
<polygon points="592.4,241.8 605.1,250.2 602.5,252.9 593.4,248.8" fill="#a1a1af" />
<polyline points="593.4,248.8 602.5,252.9" fill="none" stroke="#f8f6ff" stroke-width="0.6" stroke-linejoin="round" />
<polygon points="476.0,295.5 486.0,300.5 486.0,284.5 476.0,279.5" fill="#f6d9a4" stroke="#f6d9a4" stroke-width=".3"/>
<path d="M476.0 280.10l10.0 5.00M476.0 282.60l10.0 5.00M476.0 285.10l10.0 5.00M476.0 287.60l10.0 5.00M476.0 290.10l10.0 5.00M476.0 292.60l10.0 5.00M476.0 295.10l10.0 5.00" stroke="#a87840" stroke-width="0.95" fill="none"/>
<polygon points="486.0,300.5 508.5,289.2 508.5,273.2 486.0,284.5" fill="#fbe0ac" stroke="#fbe0ac" stroke-width=".3"/>
<path d="M486.0 285.10l22.5 -11.25M486.0 287.60l22.5 -11.25M486.0 290.10l22.5 -11.25M486.0 292.60l22.5 -11.25M486.0 295.10l22.5 -11.25M486.0 297.60l22.5 -11.25M486.0 300.10l22.5 -11.25" stroke="#c89450" stroke-width="0.9" fill="none"/>
<polygon points="486.0,284.5 476.0,279.5 498.5,268.2 508.5,273.2" fill="#f4cd8b" stroke="#f4cd8b" stroke-width=".3"/>
<polygon points="264.0,306.0 274.0,311.0 274.0,231.8 264.0,226.8" fill="#fff0d6" stroke="#fff0d6" stroke-width=".3"/>
<path d="M264.0 227.39l10.0 5.00M264.0 229.11l10.0 5.00M264.0 230.83l10.0 5.00M264.0 232.55l10.0 5.00M264.0 234.27l10.0 5.00M264.0 235.99l10.0 5.00M264.0 237.71l10.0 5.00M264.0 239.43l10.0 5.00M264.0 241.15l10.0 5.00M264.0 242.87l10.0 5.00M264.0 244.59l10.0 5.00M264.0 246.31l10.0 5.00M264.0 248.03l10.0 5.00M264.0 249.75l10.0 5.00M264.0 251.47l10.0 5.00M264.0 253.19l10.0 5.00M264.0 254.91l10.0 5.00M264.0 256.63l10.0 5.00M264.0 258.35l10.0 5.00M264.0 260.07l10.0 5.00M264.0 261.79l10.0 5.00M264.0 263.51l10.0 5.00M264.0 265.23l10.0 5.00M264.0 266.95l10.0 5.00M264.0 268.67l10.0 5.00M264.0 270.39l10.0 5.00M264.0 272.11l10.0 5.00M264.0 273.83l10.0 5.00M264.0 275.55l10.0 5.00M264.0 277.27l10.0 5.00M264.0 278.99l10.0 5.00M264.0 280.71l10.0 5.00M264.0 282.43l10.0 5.00M264.0 284.15l10.0 5.00M264.0 285.87l10.0 5.00M264.0 287.59l10.0 5.00M264.0 289.31l10.0 5.00M264.0 291.03l10.0 5.00M264.0 292.75l10.0 5.00M264.0 294.47l10.0 5.00M264.0 296.19l10.0 5.00M264.0 297.91l10.0 5.00M264.0 299.63l10.0 5.00M264.0 301.35l10.0 5.00M264.0 303.07l10.0 5.00M264.0 304.79l10.0 5.00" stroke="#6e4a20" stroke-width="0.9" fill="none"/>
<polygon points="274.0,311.0 303.0,296.5 303.0,217.3 274.0,231.8" fill="#ffe9bc" stroke="#ffe9bc" stroke-width=".3"/>
<path d="M274.0 232.39l29.0 -14.50M274.0 234.11l29.0 -14.50M274.0 235.83l29.0 -14.50M274.0 237.55l29.0 -14.50M274.0 239.27l29.0 -14.50M274.0 240.99l29.0 -14.50M274.0 242.71l29.0 -14.50M274.0 244.43l29.0 -14.50M274.0 246.15l29.0 -14.50M274.0 247.87l29.0 -14.50M274.0 249.59l29.0 -14.50M274.0 251.31l29.0 -14.50M274.0 253.03l29.0 -14.50M274.0 254.75l29.0 -14.50M274.0 256.47l29.0 -14.50M274.0 258.19l29.0 -14.50M274.0 259.91l29.0 -14.50M274.0 261.63l29.0 -14.50M274.0 263.35l29.0 -14.50M274.0 265.07l29.0 -14.50M274.0 266.79l29.0 -14.50M274.0 268.51l29.0 -14.50M274.0 270.23l29.0 -14.50M274.0 271.95l29.0 -14.50M274.0 273.67l29.0 -14.50M274.0 275.39l29.0 -14.50M274.0 277.11l29.0 -14.50M274.0 278.83l29.0 -14.50M274.0 280.55l29.0 -14.50M274.0 282.27l29.0 -14.50M274.0 283.99l29.0 -14.50M274.0 285.71l29.0 -14.50M274.0 287.43l29.0 -14.50M274.0 289.15l29.0 -14.50M274.0 290.87l29.0 -14.50M274.0 292.59l29.0 -14.50M274.0 294.31l29.0 -14.50M274.0 296.03l29.0 -14.50M274.0 297.75l29.0 -14.50M274.0 299.47l29.0 -14.50M274.0 301.19l29.0 -14.50M274.0 302.91l29.0 -14.50M274.0 304.63l29.0 -14.50M274.0 306.35l29.0 -14.50M274.0 308.07l29.0 -14.50M274.0 309.79l29.0 -14.50" stroke="#cf8a3e" stroke-width="0.92" fill="none"/>
<polygon points="274.0,311.0 274.9,310.6 274.9,231.4 274.0,231.8" fill="#fff0d0" />
<polygon points="279.8,308.1 283.7,306.1 283.7,226.9 279.8,228.9" fill="#fff0d6" />
<path d="M279.8 229.49l3.9 -1.96M279.8 231.21l3.9 -1.96M279.8 232.93l3.9 -1.96M279.8 234.65l3.9 -1.96M279.8 236.37l3.9 -1.96M279.8 238.09l3.9 -1.96M279.8 239.81l3.9 -1.96M279.8 241.53l3.9 -1.96M279.8 243.25l3.9 -1.96M279.8 244.97l3.9 -1.96M279.8 246.69l3.9 -1.96M279.8 248.41l3.9 -1.96M279.8 250.13l3.9 -1.96M279.8 251.85l3.9 -1.96M279.8 253.57l3.9 -1.96M279.8 255.29l3.9 -1.96M279.8 257.01l3.9 -1.96M279.8 258.73l3.9 -1.96M279.8 260.45l3.9 -1.96M279.8 262.17l3.9 -1.96M279.8 263.89l3.9 -1.96M279.8 265.61l3.9 -1.96M279.8 267.33l3.9 -1.96M279.8 269.05l3.9 -1.96M279.8 270.77l3.9 -1.96M279.8 272.49l3.9 -1.96M279.8 274.21l3.9 -1.96M279.8 275.93l3.9 -1.96M279.8 277.65l3.9 -1.96M279.8 279.37l3.9 -1.96M279.8 281.09l3.9 -1.96M279.8 282.81l3.9 -1.96M279.8 284.53l3.9 -1.96M279.8 286.25l3.9 -1.96M279.8 287.97l3.9 -1.96M279.8 289.69l3.9 -1.96M279.8 291.41l3.9 -1.96M279.8 293.13l3.9 -1.96M279.8 294.85l3.9 -1.96M279.8 296.57l3.9 -1.96M279.8 298.29l3.9 -1.96M279.8 300.01l3.9 -1.96M279.8 301.73l3.9 -1.96M279.8 303.45l3.9 -1.96M279.8 305.17l3.9 -1.96M279.8 306.89l3.9 -1.96" stroke="#6e4a20" stroke-width="0.9" fill="none"/>
<polygon points="283.7,306.1 284.3,305.9 284.3,226.6 283.7,226.9" fill="#fff0d0" />
<polygon points="293.4,301.3 297.2,299.4 297.2,220.2 293.4,222.1" fill="#fff0d6" />
<path d="M293.4 222.67l3.8 -1.88M293.4 224.39l3.8 -1.88M293.4 226.11l3.8 -1.88M293.4 227.83l3.8 -1.88M293.4 229.55l3.8 -1.88M293.4 231.27l3.8 -1.88M293.4 232.99l3.8 -1.88M293.4 234.71l3.8 -1.88M293.4 236.43l3.8 -1.88M293.4 238.15l3.8 -1.88M293.4 239.87l3.8 -1.88M293.4 241.59l3.8 -1.88M293.4 243.31l3.8 -1.88M293.4 245.03l3.8 -1.88M293.4 246.75l3.8 -1.88M293.4 248.47l3.8 -1.88M293.4 250.19l3.8 -1.88M293.4 251.91l3.8 -1.88M293.4 253.63l3.8 -1.88M293.4 255.35l3.8 -1.88M293.4 257.07l3.8 -1.88M293.4 258.79l3.8 -1.88M293.4 260.51l3.8 -1.88M293.4 262.23l3.8 -1.88M293.4 263.95l3.8 -1.88M293.4 265.67l3.8 -1.88M293.4 267.39l3.8 -1.88M293.4 269.11l3.8 -1.88M293.4 270.83l3.8 -1.88M293.4 272.55l3.8 -1.88M293.4 274.27l3.8 -1.88M293.4 275.99l3.8 -1.88M293.4 277.71l3.8 -1.88M293.4 279.43l3.8 -1.88M293.4 281.15l3.8 -1.88M293.4 282.87l3.8 -1.88M293.4 284.59l3.8 -1.88M293.4 286.31l3.8 -1.88M293.4 288.03l3.8 -1.88M293.4 289.75l3.8 -1.88M293.4 291.47l3.8 -1.88M293.4 293.19l3.8 -1.88M293.4 294.91l3.8 -1.88M293.4 296.63l3.8 -1.88M293.4 298.35l3.8 -1.88M293.4 300.07l3.8 -1.88" stroke="#6e4a20" stroke-width="0.9" fill="none"/>
<polygon points="297.2,299.4 297.8,299.1 297.8,219.9 297.2,220.2" fill="#fff0d0" />
<polygon points="302.1,296.9 303.0,296.5 303.0,217.3 302.1,217.7" fill="#f6d49a" />
<polygon points="274.0,311.0 268.2,308.1 268.2,228.9 274.0,231.8" fill="#ffe9bc" />
<path d="M268.2 229.49l5.8 2.90M268.2 231.21l5.8 2.90M268.2 232.93l5.8 2.90M268.2 234.65l5.8 2.90M268.2 236.37l5.8 2.90M268.2 238.09l5.8 2.90M268.2 239.81l5.8 2.90M268.2 241.53l5.8 2.90M268.2 243.25l5.8 2.90M268.2 244.97l5.8 2.90M268.2 246.69l5.8 2.90M268.2 248.41l5.8 2.90M268.2 250.13l5.8 2.90M268.2 251.85l5.8 2.90M268.2 253.57l5.8 2.90M268.2 255.29l5.8 2.90M268.2 257.01l5.8 2.90M268.2 258.73l5.8 2.90M268.2 260.45l5.8 2.90M268.2 262.17l5.8 2.90M268.2 263.89l5.8 2.90M268.2 265.61l5.8 2.90M268.2 267.33l5.8 2.90M268.2 269.05l5.8 2.90M268.2 270.77l5.8 2.90M268.2 272.49l5.8 2.90M268.2 274.21l5.8 2.90M268.2 275.93l5.8 2.90M268.2 277.65l5.8 2.90M268.2 279.37l5.8 2.90M268.2 281.09l5.8 2.90M268.2 282.81l5.8 2.90M268.2 284.53l5.8 2.90M268.2 286.25l5.8 2.90M268.2 287.97l5.8 2.90M268.2 289.69l5.8 2.90M268.2 291.41l5.8 2.90M268.2 293.13l5.8 2.90M268.2 294.85l5.8 2.90M268.2 296.57l5.8 2.90M268.2 298.29l5.8 2.90M268.2 300.01l5.8 2.90M268.2 301.73l5.8 2.90M268.2 303.45l5.8 2.90M268.2 305.17l5.8 2.90M268.2 306.89l5.8 2.90" stroke="#cf8a3e" stroke-width="0.92" fill="none"/>
<polygon points="274.0,231.8 264.0,226.8 293.0,212.3 303.0,217.3" fill="#f4cd8b" stroke="#f4cd8b" stroke-width=".3"/>
<polygon points="267.5,225.0 277.5,230.0 277.5,224.0 267.5,219.0" fill="#fdeccc" stroke="#fdeccc" stroke-width=".3"/>
<path d="M267.5 219.65l10.0 5.00M267.5 221.37l10.0 5.00M267.5 223.09l10.0 5.00M267.5 224.81l10.0 5.00" stroke="#6e4a20" stroke-width="0.95" fill="none"/>
<polygon points="277.5,230.0 299.5,219.0 299.5,213.0 277.5,224.0" fill="#ffe9bc" stroke="#ffe9bc" stroke-width=".3"/>
<path d="M277.5 224.65l22.0 -11.02M277.5 226.37l22.0 -11.02M277.5 228.09l22.0 -11.02M277.5 229.81l22.0 -11.02" stroke="#c8843a" stroke-width="0.9" fill="none"/>
<polygon points="277.5,224.0 267.5,219.0 289.5,208.0 299.5,213.0" fill="#f4cd8b" stroke="#f4cd8b" stroke-width=".3"/>
<polygon points="272.1,216.7 282.1,221.7 282.1,218.9 272.1,213.9" fill="#fdeccc" stroke="#fdeccc" stroke-width=".3"/>
<path d="M272.1 214.53l10.0 5.00M272.1 216.25l10.0 5.00" stroke="#6e4a20" stroke-width="0.95" fill="none"/>
<polygon points="282.1,221.7 294.9,215.3 294.9,212.5 282.1,218.9" fill="#e9bd7a" stroke="#e9bd7a" stroke-width=".3"/>
<polygon points="282.1,218.9 272.1,213.9 284.9,207.5 294.9,212.5" fill="#f4cd8b" stroke="#f4cd8b" stroke-width=".3"/>
<polygon points="276.0,213.0 284.0,217.0 284.0,212.1 276.0,208.1" fill="#fdeccc" stroke="#fdeccc" stroke-width=".3"/>
<path d="M276.0 208.68l8.0 4.00M276.0 210.40l8.0 4.00M276.0 212.12l8.0 4.00" stroke="#6e4a20" stroke-width="0.95" fill="none"/>
<polygon points="284.0,217.0 291.0,213.5 291.0,208.6 284.0,212.1" fill="#e6b873" stroke="#e6b873" stroke-width=".3"/>
<polygon points="284.0,212.1 276.0,208.1 283.0,204.6 291.0,208.6" fill="#f7d495" stroke="#f7d495" stroke-width=".3"/>
<polygon points="503.5,318.8 518.0,326.0 518.0,321.4 503.5,314.1" fill="#d8a666" stroke="#d8a666" stroke-width=".3"/>
<polygon points="518.0,326.0 568.4,300.8 568.4,296.2 518.0,321.4" fill="#e9bd7a" stroke="#e9bd7a" stroke-width=".3"/>
<polygon points="518.0,321.4 503.5,314.1 553.9,288.9 568.4,296.2" fill="#f4cd8b" stroke="#f4cd8b" stroke-width=".3"/>
<polygon points="509.4,313.2 518.0,317.5 518.0,250.9 509.4,246.6" fill="#fff0d6" stroke="#fff0d6" stroke-width=".3"/>
<path d="M509.4 247.17l8.6 4.30M509.4 248.89l8.6 4.30M509.4 250.61l8.6 4.30M509.4 252.33l8.6 4.30M509.4 254.05l8.6 4.30M509.4 255.77l8.6 4.30M509.4 257.49l8.6 4.30M509.4 259.21l8.6 4.30M509.4 260.93l8.6 4.30M509.4 262.65l8.6 4.30M509.4 264.37l8.6 4.30M509.4 266.09l8.6 4.30M509.4 267.81l8.6 4.30M509.4 269.53l8.6 4.30M509.4 271.25l8.6 4.30M509.4 272.97l8.6 4.30M509.4 274.69l8.6 4.30M509.4 276.41l8.6 4.30M509.4 278.13l8.6 4.30M509.4 279.85l8.6 4.30M509.4 281.57l8.6 4.30M509.4 283.29l8.6 4.30M509.4 285.01l8.6 4.30M509.4 286.73l8.6 4.30M509.4 288.45l8.6 4.30M509.4 290.17l8.6 4.30M509.4 291.89l8.6 4.30M509.4 293.61l8.6 4.30M509.4 295.33l8.6 4.30M509.4 297.05l8.6 4.30M509.4 298.77l8.6 4.30M509.4 300.49l8.6 4.30M509.4 302.21l8.6 4.30M509.4 303.93l8.6 4.30M509.4 305.65l8.6 4.30M509.4 307.37l8.6 4.30M509.4 309.09l8.6 4.30M509.4 310.81l8.6 4.30M509.4 312.53l8.6 4.30" stroke="#6e4a20" stroke-width="0.9" fill="none"/>
<polygon points="518.0,317.5 549.3,301.9 549.3,235.2 518.0,250.9" fill="#ffe9bc" stroke="#ffe9bc" stroke-width=".3"/>
<path d="M518.0 251.47l31.3 -15.65M518.0 253.19l31.3 -15.65M518.0 254.91l31.3 -15.65M518.0 256.63l31.3 -15.65M518.0 258.35l31.3 -15.65M518.0 260.07l31.3 -15.65M518.0 261.79l31.3 -15.65M518.0 263.51l31.3 -15.65M518.0 265.23l31.3 -15.65M518.0 266.95l31.3 -15.65M518.0 268.67l31.3 -15.65M518.0 270.39l31.3 -15.65M518.0 272.11l31.3 -15.65M518.0 273.83l31.3 -15.65M518.0 275.55l31.3 -15.65M518.0 277.27l31.3 -15.65M518.0 278.99l31.3 -15.65M518.0 280.71l31.3 -15.65M518.0 282.43l31.3 -15.65M518.0 284.15l31.3 -15.65M518.0 285.87l31.3 -15.65M518.0 287.59l31.3 -15.65M518.0 289.31l31.3 -15.65M518.0 291.03l31.3 -15.65M518.0 292.75l31.3 -15.65M518.0 294.47l31.3 -15.65M518.0 296.19l31.3 -15.65M518.0 297.91l31.3 -15.65M518.0 299.63l31.3 -15.65M518.0 301.35l31.3 -15.65M518.0 303.07l31.3 -15.65M518.0 304.79l31.3 -15.65M518.0 306.51l31.3 -15.65M518.0 308.23l31.3 -15.65M518.0 309.95l31.3 -15.65M518.0 311.67l31.3 -15.65M518.0 313.39l31.3 -15.65M518.0 315.11l31.3 -15.65M518.0 316.83l31.3 -15.65" stroke="#cf8a3e" stroke-width="0.92" fill="none"/>
<polygon points="518.0,317.5 518.9,317.0 518.9,250.4 518.0,250.9" fill="#fff0d0" />
<polygon points="524.3,314.4 528.5,312.3 528.5,245.6 524.3,247.7" fill="#fff0d6" />
<path d="M524.3 248.34l4.2 -2.11M524.3 250.06l4.2 -2.11M524.3 251.78l4.2 -2.11M524.3 253.50l4.2 -2.11M524.3 255.22l4.2 -2.11M524.3 256.94l4.2 -2.11M524.3 258.66l4.2 -2.11M524.3 260.38l4.2 -2.11M524.3 262.10l4.2 -2.11M524.3 263.82l4.2 -2.11M524.3 265.54l4.2 -2.11M524.3 267.26l4.2 -2.11M524.3 268.98l4.2 -2.11M524.3 270.70l4.2 -2.11M524.3 272.42l4.2 -2.11M524.3 274.14l4.2 -2.11M524.3 275.86l4.2 -2.11M524.3 277.58l4.2 -2.11M524.3 279.30l4.2 -2.11M524.3 281.02l4.2 -2.11M524.3 282.74l4.2 -2.11M524.3 284.46l4.2 -2.11M524.3 286.18l4.2 -2.11M524.3 287.90l4.2 -2.11M524.3 289.62l4.2 -2.11M524.3 291.34l4.2 -2.11M524.3 293.06l4.2 -2.11M524.3 294.78l4.2 -2.11M524.3 296.50l4.2 -2.11M524.3 298.22l4.2 -2.11M524.3 299.94l4.2 -2.11M524.3 301.66l4.2 -2.11M524.3 303.38l4.2 -2.11M524.3 305.10l4.2 -2.11M524.3 306.82l4.2 -2.11M524.3 308.54l4.2 -2.11M524.3 310.26l4.2 -2.11M524.3 311.98l4.2 -2.11M524.3 313.70l4.2 -2.11" stroke="#6e4a20" stroke-width="0.9" fill="none"/>
<polygon points="528.5,312.3 529.1,311.9 529.1,245.3 528.5,245.6" fill="#fff0d0" />
<polygon points="539.0,307.0 543.0,305.0 543.0,238.4 539.0,240.4" fill="#fff0d6" />
<path d="M539.0 240.99l4.1 -2.03M539.0 242.71l4.1 -2.03M539.0 244.43l4.1 -2.03M539.0 246.15l4.1 -2.03M539.0 247.87l4.1 -2.03M539.0 249.59l4.1 -2.03M539.0 251.31l4.1 -2.03M539.0 253.03l4.1 -2.03M539.0 254.75l4.1 -2.03M539.0 256.47l4.1 -2.03M539.0 258.19l4.1 -2.03M539.0 259.91l4.1 -2.03M539.0 261.63l4.1 -2.03M539.0 263.35l4.1 -2.03M539.0 265.07l4.1 -2.03M539.0 266.79l4.1 -2.03M539.0 268.51l4.1 -2.03M539.0 270.23l4.1 -2.03M539.0 271.95l4.1 -2.03M539.0 273.67l4.1 -2.03M539.0 275.39l4.1 -2.03M539.0 277.11l4.1 -2.03M539.0 278.83l4.1 -2.03M539.0 280.55l4.1 -2.03M539.0 282.27l4.1 -2.03M539.0 283.99l4.1 -2.03M539.0 285.71l4.1 -2.03M539.0 287.43l4.1 -2.03M539.0 289.15l4.1 -2.03M539.0 290.87l4.1 -2.03M539.0 292.59l4.1 -2.03M539.0 294.31l4.1 -2.03M539.0 296.03l4.1 -2.03M539.0 297.75l4.1 -2.03M539.0 299.47l4.1 -2.03M539.0 301.19l4.1 -2.03M539.0 302.91l4.1 -2.03M539.0 304.63l4.1 -2.03M539.0 306.35l4.1 -2.03" stroke="#6e4a20" stroke-width="0.9" fill="none"/>
<polygon points="543.0,305.0 543.7,304.7 543.7,238.0 543.0,238.4" fill="#fff0d0" />
<polygon points="548.4,302.3 549.3,301.9 549.3,235.2 548.4,235.7" fill="#f6d49a" />
<polygon points="518.0,317.5 513.0,315.0 513.0,248.4 518.0,250.9" fill="#ffe9bc" />
<path d="M513.0 248.98l5.0 2.49M513.0 250.70l5.0 2.49M513.0 252.42l5.0 2.49M513.0 254.14l5.0 2.49M513.0 255.86l5.0 2.49M513.0 257.58l5.0 2.49M513.0 259.30l5.0 2.49M513.0 261.02l5.0 2.49M513.0 262.74l5.0 2.49M513.0 264.46l5.0 2.49M513.0 266.18l5.0 2.49M513.0 267.90l5.0 2.49M513.0 269.62l5.0 2.49M513.0 271.34l5.0 2.49M513.0 273.06l5.0 2.49M513.0 274.78l5.0 2.49M513.0 276.50l5.0 2.49M513.0 278.22l5.0 2.49M513.0 279.94l5.0 2.49M513.0 281.66l5.0 2.49M513.0 283.38l5.0 2.49M513.0 285.10l5.0 2.49M513.0 286.82l5.0 2.49M513.0 288.54l5.0 2.49M513.0 290.26l5.0 2.49M513.0 291.98l5.0 2.49M513.0 293.70l5.0 2.49M513.0 295.42l5.0 2.49M513.0 297.14l5.0 2.49M513.0 298.86l5.0 2.49M513.0 300.58l5.0 2.49M513.0 302.30l5.0 2.49M513.0 304.02l5.0 2.49M513.0 305.74l5.0 2.49M513.0 307.46l5.0 2.49M513.0 309.18l5.0 2.49M513.0 310.90l5.0 2.49M513.0 312.62l5.0 2.49M513.0 314.34l5.0 2.49" stroke="#cf8a3e" stroke-width="0.92" fill="none"/>
<polygon points="518.0,250.9 509.4,246.6 540.7,230.9 549.3,235.2" fill="#f4cd8b" stroke="#f4cd8b" stroke-width=".3"/>
<polygon points="513.2,244.7 521.8,249.0 521.8,243.0 513.2,238.7" fill="#fdeccc" stroke="#fdeccc" stroke-width=".3"/>
<path d="M513.2 239.29l8.6 4.30M513.2 241.01l8.6 4.30M513.2 242.73l8.6 4.30M513.2 244.45l8.6 4.30" stroke="#6e4a20" stroke-width="0.95" fill="none"/>
<polygon points="521.8,249.0 545.5,237.1 545.5,231.1 521.8,243.0" fill="#ffe9bc" stroke="#ffe9bc" stroke-width=".3"/>
<path d="M521.8 243.59l23.8 -11.89M521.8 245.31l23.8 -11.89M521.8 247.03l23.8 -11.89M521.8 248.75l23.8 -11.89" stroke="#c8843a" stroke-width="0.9" fill="none"/>
<polygon points="521.8,243.0 513.2,238.7 536.9,226.8 545.5,231.1" fill="#f4cd8b" stroke="#f4cd8b" stroke-width=".3"/>
<polygon points="518.2,236.2 526.8,240.5 526.8,237.7 518.2,233.4" fill="#fdeccc" stroke="#fdeccc" stroke-width=".3"/>
<path d="M518.2 233.99l8.6 4.30M518.2 235.71l8.6 4.30" stroke="#6e4a20" stroke-width="0.95" fill="none"/>
<polygon points="526.8,240.5 540.5,233.6 540.5,230.8 526.8,237.7" fill="#e9bd7a" stroke="#e9bd7a" stroke-width=".3"/>
<polygon points="526.8,237.7 518.2,233.4 531.9,226.5 540.5,230.8" fill="#f4cd8b" stroke="#f4cd8b" stroke-width=".3"/>
<polygon points="522.2,232.3 529.0,235.7 529.0,230.8 522.2,227.4" fill="#fdeccc" stroke="#fdeccc" stroke-width=".3"/>
<path d="M522.2 227.96l6.9 3.44M522.2 229.68l6.9 3.44M522.2 231.40l6.9 3.44" stroke="#6e4a20" stroke-width="0.95" fill="none"/>
<polygon points="529.0,235.7 536.5,231.9 536.5,227.0 529.0,230.8" fill="#e6b873" stroke="#e6b873" stroke-width=".3"/>
<polygon points="529.0,230.8 522.2,227.4 529.7,223.6 536.5,227.0" fill="#f7d495" stroke="#f7d495" stroke-width=".3"/>
<polygon points="229.3,317.0 243.3,324.0 243.3,232.8 229.3,225.8" fill="#fff0d6" stroke="#fff0d6" stroke-width=".3"/>
<path d="M229.3 226.43l14.0 7.00M229.3 228.15l14.0 7.00M229.3 229.87l14.0 7.00M229.3 231.59l14.0 7.00M229.3 233.31l14.0 7.00M229.3 235.03l14.0 7.00M229.3 236.75l14.0 7.00M229.3 238.47l14.0 7.00M229.3 240.19l14.0 7.00M229.3 241.91l14.0 7.00M229.3 243.63l14.0 7.00M229.3 245.35l14.0 7.00M229.3 247.07l14.0 7.00M229.3 248.79l14.0 7.00M229.3 250.51l14.0 7.00M229.3 252.23l14.0 7.00M229.3 253.95l14.0 7.00M229.3 255.67l14.0 7.00M229.3 257.39l14.0 7.00M229.3 259.11l14.0 7.00M229.3 260.83l14.0 7.00M229.3 262.55l14.0 7.00M229.3 264.27l14.0 7.00M229.3 265.99l14.0 7.00M229.3 267.71l14.0 7.00M229.3 269.43l14.0 7.00M229.3 271.15l14.0 7.00M229.3 272.87l14.0 7.00M229.3 274.59l14.0 7.00M229.3 276.31l14.0 7.00M229.3 278.03l14.0 7.00M229.3 279.75l14.0 7.00M229.3 281.47l14.0 7.00M229.3 283.19l14.0 7.00M229.3 284.91l14.0 7.00M229.3 286.63l14.0 7.00M229.3 288.35l14.0 7.00M229.3 290.07l14.0 7.00M229.3 291.79l14.0 7.00M229.3 293.51l14.0 7.00M229.3 295.23l14.0 7.00M229.3 296.95l14.0 7.00M229.3 298.67l14.0 7.00M229.3 300.39l14.0 7.00M229.3 302.11l14.0 7.00M229.3 303.83l14.0 7.00M229.3 305.55l14.0 7.00M229.3 307.27l14.0 7.00M229.3 308.99l14.0 7.00M229.3 310.71l14.0 7.00M229.3 312.43l14.0 7.00M229.3 314.15l14.0 7.00M229.3 315.87l14.0 7.00" stroke="#6e4a20" stroke-width="0.9" fill="none"/>
<polygon points="243.3,324.0 275.0,308.1 275.0,217.0 243.3,232.8" fill="#ffe9bc" stroke="#ffe9bc" stroke-width=".3"/>
<path d="M243.3 233.43l31.7 -15.85M243.3 235.15l31.7 -15.85M243.3 236.87l31.7 -15.85M243.3 238.59l31.7 -15.85M243.3 240.31l31.7 -15.85M243.3 242.03l31.7 -15.85M243.3 243.75l31.7 -15.85M243.3 245.47l31.7 -15.85M243.3 247.19l31.7 -15.85M243.3 248.91l31.7 -15.85M243.3 250.63l31.7 -15.85M243.3 252.35l31.7 -15.85M243.3 254.07l31.7 -15.85M243.3 255.79l31.7 -15.85M243.3 257.51l31.7 -15.85M243.3 259.23l31.7 -15.85M243.3 260.95l31.7 -15.85M243.3 262.67l31.7 -15.85M243.3 264.39l31.7 -15.85M243.3 266.11l31.7 -15.85M243.3 267.83l31.7 -15.85M243.3 269.55l31.7 -15.85M243.3 271.27l31.7 -15.85M243.3 272.99l31.7 -15.85M243.3 274.71l31.7 -15.85M243.3 276.43l31.7 -15.85M243.3 278.15l31.7 -15.85M243.3 279.87l31.7 -15.85M243.3 281.59l31.7 -15.85M243.3 283.31l31.7 -15.85M243.3 285.03l31.7 -15.85M243.3 286.75l31.7 -15.85M243.3 288.47l31.7 -15.85M243.3 290.19l31.7 -15.85M243.3 291.91l31.7 -15.85M243.3 293.63l31.7 -15.85M243.3 295.35l31.7 -15.85M243.3 297.07l31.7 -15.85M243.3 298.79l31.7 -15.85M243.3 300.51l31.7 -15.85M243.3 302.23l31.7 -15.85M243.3 303.95l31.7 -15.85M243.3 305.67l31.7 -15.85M243.3 307.39l31.7 -15.85M243.3 309.11l31.7 -15.85M243.3 310.83l31.7 -15.85M243.3 312.55l31.7 -15.85M243.3 314.27l31.7 -15.85M243.3 315.99l31.7 -15.85M243.3 317.71l31.7 -15.85M243.3 319.43l31.7 -15.85M243.3 321.15l31.7 -15.85M243.3 322.87l31.7 -15.85" stroke="#cf8a3e" stroke-width="0.92" fill="none"/>
<polygon points="243.3,324.0 244.3,323.5 244.3,232.4 243.3,232.8" fill="#fff0d0" />
<polygon points="249.6,320.8 253.9,318.7 253.9,227.5 249.6,229.7" fill="#fff0d6" />
<path d="M249.6 230.26l4.3 -2.14M249.6 231.98l4.3 -2.14M249.6 233.70l4.3 -2.14M249.6 235.42l4.3 -2.14M249.6 237.14l4.3 -2.14M249.6 238.86l4.3 -2.14M249.6 240.58l4.3 -2.14M249.6 242.30l4.3 -2.14M249.6 244.02l4.3 -2.14M249.6 245.74l4.3 -2.14M249.6 247.46l4.3 -2.14M249.6 249.18l4.3 -2.14M249.6 250.90l4.3 -2.14M249.6 252.62l4.3 -2.14M249.6 254.34l4.3 -2.14M249.6 256.06l4.3 -2.14M249.6 257.78l4.3 -2.14M249.6 259.50l4.3 -2.14M249.6 261.22l4.3 -2.14M249.6 262.94l4.3 -2.14M249.6 264.66l4.3 -2.14M249.6 266.38l4.3 -2.14M249.6 268.10l4.3 -2.14M249.6 269.82l4.3 -2.14M249.6 271.54l4.3 -2.14M249.6 273.26l4.3 -2.14M249.6 274.98l4.3 -2.14M249.6 276.70l4.3 -2.14M249.6 278.42l4.3 -2.14M249.6 280.14l4.3 -2.14M249.6 281.86l4.3 -2.14M249.6 283.58l4.3 -2.14M249.6 285.30l4.3 -2.14M249.6 287.02l4.3 -2.14M249.6 288.74l4.3 -2.14M249.6 290.46l4.3 -2.14M249.6 292.18l4.3 -2.14M249.6 293.90l4.3 -2.14M249.6 295.62l4.3 -2.14M249.6 297.34l4.3 -2.14M249.6 299.06l4.3 -2.14M249.6 300.78l4.3 -2.14M249.6 302.50l4.3 -2.14M249.6 304.22l4.3 -2.14M249.6 305.94l4.3 -2.14M249.6 307.66l4.3 -2.14M249.6 309.38l4.3 -2.14M249.6 311.10l4.3 -2.14M249.6 312.82l4.3 -2.14M249.6 314.54l4.3 -2.14M249.6 316.26l4.3 -2.14M249.6 317.98l4.3 -2.14M249.6 319.70l4.3 -2.14" stroke="#6e4a20" stroke-width="0.9" fill="none"/>
<polygon points="253.9,318.7 254.6,318.4 254.6,227.2 253.9,227.5" fill="#fff0d0" />
<polygon points="264.5,313.4 268.7,311.3 268.7,220.1 264.5,222.2" fill="#fff0d6" />
<path d="M264.5 222.81l4.1 -2.06M264.5 224.53l4.1 -2.06M264.5 226.25l4.1 -2.06M264.5 227.97l4.1 -2.06M264.5 229.69l4.1 -2.06M264.5 231.41l4.1 -2.06M264.5 233.13l4.1 -2.06M264.5 234.85l4.1 -2.06M264.5 236.57l4.1 -2.06M264.5 238.29l4.1 -2.06M264.5 240.01l4.1 -2.06M264.5 241.73l4.1 -2.06M264.5 243.45l4.1 -2.06M264.5 245.17l4.1 -2.06M264.5 246.89l4.1 -2.06M264.5 248.61l4.1 -2.06M264.5 250.33l4.1 -2.06M264.5 252.05l4.1 -2.06M264.5 253.77l4.1 -2.06M264.5 255.49l4.1 -2.06M264.5 257.21l4.1 -2.06M264.5 258.93l4.1 -2.06M264.5 260.65l4.1 -2.06M264.5 262.37l4.1 -2.06M264.5 264.09l4.1 -2.06M264.5 265.81l4.1 -2.06M264.5 267.53l4.1 -2.06M264.5 269.25l4.1 -2.06M264.5 270.97l4.1 -2.06M264.5 272.69l4.1 -2.06M264.5 274.41l4.1 -2.06M264.5 276.13l4.1 -2.06M264.5 277.85l4.1 -2.06M264.5 279.57l4.1 -2.06M264.5 281.29l4.1 -2.06M264.5 283.01l4.1 -2.06M264.5 284.73l4.1 -2.06M264.5 286.45l4.1 -2.06M264.5 288.17l4.1 -2.06M264.5 289.89l4.1 -2.06M264.5 291.61l4.1 -2.06M264.5 293.33l4.1 -2.06M264.5 295.05l4.1 -2.06M264.5 296.77l4.1 -2.06M264.5 298.49l4.1 -2.06M264.5 300.21l4.1 -2.06M264.5 301.93l4.1 -2.06M264.5 303.65l4.1 -2.06M264.5 305.37l4.1 -2.06M264.5 307.09l4.1 -2.06M264.5 308.81l4.1 -2.06M264.5 310.53l4.1 -2.06M264.5 312.25l4.1 -2.06" stroke="#6e4a20" stroke-width="0.9" fill="none"/>
<polygon points="268.7,311.3 269.3,311.0 269.3,219.8 268.7,220.1" fill="#fff0d0" />
<polygon points="274.0,308.6 275.0,308.1 275.0,217.0 274.0,217.5" fill="#f6d49a" />
<polygon points="243.3,324.0 235.2,319.9 235.2,228.8 243.3,232.8" fill="#ffe9bc" />
<path d="M235.2 229.37l8.1 4.06M235.2 231.09l8.1 4.06M235.2 232.81l8.1 4.06M235.2 234.53l8.1 4.06M235.2 236.25l8.1 4.06M235.2 237.97l8.1 4.06M235.2 239.69l8.1 4.06M235.2 241.41l8.1 4.06M235.2 243.13l8.1 4.06M235.2 244.85l8.1 4.06M235.2 246.57l8.1 4.06M235.2 248.29l8.1 4.06M235.2 250.01l8.1 4.06M235.2 251.73l8.1 4.06M235.2 253.45l8.1 4.06M235.2 255.17l8.1 4.06M235.2 256.89l8.1 4.06M235.2 258.61l8.1 4.06M235.2 260.33l8.1 4.06M235.2 262.05l8.1 4.06M235.2 263.77l8.1 4.06M235.2 265.49l8.1 4.06M235.2 267.21l8.1 4.06M235.2 268.93l8.1 4.06M235.2 270.65l8.1 4.06M235.2 272.37l8.1 4.06M235.2 274.09l8.1 4.06M235.2 275.81l8.1 4.06M235.2 277.53l8.1 4.06M235.2 279.25l8.1 4.06M235.2 280.97l8.1 4.06M235.2 282.69l8.1 4.06M235.2 284.41l8.1 4.06M235.2 286.13l8.1 4.06M235.2 287.85l8.1 4.06M235.2 289.57l8.1 4.06M235.2 291.29l8.1 4.06M235.2 293.01l8.1 4.06M235.2 294.73l8.1 4.06M235.2 296.45l8.1 4.06M235.2 298.17l8.1 4.06M235.2 299.89l8.1 4.06M235.2 301.61l8.1 4.06M235.2 303.33l8.1 4.06M235.2 305.05l8.1 4.06M235.2 306.77l8.1 4.06M235.2 308.49l8.1 4.06M235.2 310.21l8.1 4.06M235.2 311.93l8.1 4.06M235.2 313.65l8.1 4.06M235.2 315.37l8.1 4.06M235.2 317.09l8.1 4.06M235.2 318.81l8.1 4.06" stroke="#cf8a3e" stroke-width="0.92" fill="none"/>
<polygon points="243.3,232.8 229.3,225.8 261.0,210.0 275.0,217.0" fill="#f4cd8b" stroke="#f4cd8b" stroke-width=".3"/>
<polygon points="233.1,223.9 247.1,230.9 247.1,224.9 233.1,217.9" fill="#fdeccc" stroke="#fdeccc" stroke-width=".3"/>
<path d="M233.1 218.53l14.0 7.00M233.1 220.25l14.0 7.00M233.1 221.97l14.0 7.00M233.1 223.69l14.0 7.00" stroke="#6e4a20" stroke-width="0.95" fill="none"/>
<polygon points="247.1,230.9 271.2,218.9 271.2,212.9 247.1,224.9" fill="#ffe9bc" stroke="#ffe9bc" stroke-width=".3"/>
<path d="M247.1 225.53l24.1 -12.05M247.1 227.25l24.1 -12.05M247.1 228.97l24.1 -12.05M247.1 230.69l24.1 -12.05" stroke="#c8843a" stroke-width="0.9" fill="none"/>
<polygon points="247.1,224.9 233.1,217.9 257.2,205.9 271.2,212.9" fill="#f4cd8b" stroke="#f4cd8b" stroke-width=".3"/>
<polygon points="238.2,215.4 252.2,222.4 252.2,219.6 238.2,212.6" fill="#fdeccc" stroke="#fdeccc" stroke-width=".3"/>
<path d="M238.2 213.19l14.0 7.00M238.2 214.91l14.0 7.00" stroke="#6e4a20" stroke-width="0.95" fill="none"/>
<polygon points="252.2,222.4 266.1,215.4 266.1,212.6 252.2,219.6" fill="#e9bd7a" stroke="#e9bd7a" stroke-width=".3"/>
<polygon points="252.2,219.6 238.2,212.6 252.1,205.6 266.1,212.6" fill="#f4cd8b" stroke="#f4cd8b" stroke-width=".3"/>
<polygon points="242.7,211.7 253.9,217.3 253.9,212.4 242.7,206.8" fill="#fdeccc" stroke="#fdeccc" stroke-width=".3"/>
<path d="M242.7 207.40l11.2 5.60M242.7 209.12l11.2 5.60M242.7 210.84l11.2 5.60" stroke="#6e4a20" stroke-width="0.95" fill="none"/>
<polygon points="253.9,217.3 261.6,213.5 261.6,208.6 253.9,212.4" fill="#e6b873" stroke="#e6b873" stroke-width=".3"/>
<polygon points="253.9,212.4 242.7,206.8 250.4,203.0 261.6,208.6" fill="#f7d495" stroke="#f7d495" stroke-width=".3"/>
<polygon points="341.3,340.1 350.0,344.5 350.0,269.3 341.3,265.0" fill="#fff0d6" stroke="#fff0d6" stroke-width=".3"/>
<path d="M341.3 265.59l8.7 4.35M341.3 267.31l8.7 4.35M341.3 269.03l8.7 4.35M341.3 270.75l8.7 4.35M341.3 272.47l8.7 4.35M341.3 274.19l8.7 4.35M341.3 275.91l8.7 4.35M341.3 277.63l8.7 4.35M341.3 279.35l8.7 4.35M341.3 281.07l8.7 4.35M341.3 282.79l8.7 4.35M341.3 284.51l8.7 4.35M341.3 286.23l8.7 4.35M341.3 287.95l8.7 4.35M341.3 289.67l8.7 4.35M341.3 291.39l8.7 4.35M341.3 293.11l8.7 4.35M341.3 294.83l8.7 4.35M341.3 296.55l8.7 4.35M341.3 298.27l8.7 4.35M341.3 299.99l8.7 4.35M341.3 301.71l8.7 4.35M341.3 303.43l8.7 4.35M341.3 305.15l8.7 4.35M341.3 306.87l8.7 4.35M341.3 308.59l8.7 4.35M341.3 310.31l8.7 4.35M341.3 312.03l8.7 4.35M341.3 313.75l8.7 4.35M341.3 315.47l8.7 4.35M341.3 317.19l8.7 4.35M341.3 318.91l8.7 4.35M341.3 320.63l8.7 4.35M341.3 322.35l8.7 4.35M341.3 324.07l8.7 4.35M341.3 325.79l8.7 4.35M341.3 327.51l8.7 4.35M341.3 329.23l8.7 4.35M341.3 330.95l8.7 4.35M341.3 332.67l8.7 4.35M341.3 334.39l8.7 4.35M341.3 336.11l8.7 4.35M341.3 337.83l8.7 4.35M341.3 339.55l8.7 4.35" stroke="#6e4a20" stroke-width="0.9" fill="none"/>
<polygon points="350.0,344.5 371.7,333.6 371.7,258.5 350.0,269.3" fill="#ffe9bc" stroke="#ffe9bc" stroke-width=".3"/>
<path d="M350.0 269.94l21.7 -10.85M350.0 271.66l21.7 -10.85M350.0 273.38l21.7 -10.85M350.0 275.10l21.7 -10.85M350.0 276.82l21.7 -10.85M350.0 278.54l21.7 -10.85M350.0 280.26l21.7 -10.85M350.0 281.98l21.7 -10.85M350.0 283.70l21.7 -10.85M350.0 285.42l21.7 -10.85M350.0 287.14l21.7 -10.85M350.0 288.86l21.7 -10.85M350.0 290.58l21.7 -10.85M350.0 292.30l21.7 -10.85M350.0 294.02l21.7 -10.85M350.0 295.74l21.7 -10.85M350.0 297.46l21.7 -10.85M350.0 299.18l21.7 -10.85M350.0 300.90l21.7 -10.85M350.0 302.62l21.7 -10.85M350.0 304.34l21.7 -10.85M350.0 306.06l21.7 -10.85M350.0 307.78l21.7 -10.85M350.0 309.50l21.7 -10.85M350.0 311.22l21.7 -10.85M350.0 312.94l21.7 -10.85M350.0 314.66l21.7 -10.85M350.0 316.38l21.7 -10.85M350.0 318.10l21.7 -10.85M350.0 319.82l21.7 -10.85M350.0 321.54l21.7 -10.85M350.0 323.26l21.7 -10.85M350.0 324.98l21.7 -10.85M350.0 326.70l21.7 -10.85M350.0 328.42l21.7 -10.85M350.0 330.14l21.7 -10.85M350.0 331.86l21.7 -10.85M350.0 333.58l21.7 -10.85M350.0 335.30l21.7 -10.85M350.0 337.02l21.7 -10.85M350.0 338.74l21.7 -10.85M350.0 340.46l21.7 -10.85M350.0 342.18l21.7 -10.85M350.0 343.90l21.7 -10.85" stroke="#cf8a3e" stroke-width="0.92" fill="none"/>
<polygon points="350.0,344.5 350.7,344.2 350.7,269.0 350.0,269.3" fill="#fff0d0" />
<polygon points="354.3,342.3 357.3,340.9 357.3,265.7 354.3,267.2" fill="#fff0d6" />
<path d="M354.3 267.77l2.9 -1.46M354.3 269.49l2.9 -1.46M354.3 271.21l2.9 -1.46M354.3 272.93l2.9 -1.46M354.3 274.65l2.9 -1.46M354.3 276.37l2.9 -1.46M354.3 278.09l2.9 -1.46M354.3 279.81l2.9 -1.46M354.3 281.53l2.9 -1.46M354.3 283.25l2.9 -1.46M354.3 284.97l2.9 -1.46M354.3 286.69l2.9 -1.46M354.3 288.41l2.9 -1.46M354.3 290.13l2.9 -1.46M354.3 291.85l2.9 -1.46M354.3 293.57l2.9 -1.46M354.3 295.29l2.9 -1.46M354.3 297.01l2.9 -1.46M354.3 298.73l2.9 -1.46M354.3 300.45l2.9 -1.46M354.3 302.17l2.9 -1.46M354.3 303.89l2.9 -1.46M354.3 305.61l2.9 -1.46M354.3 307.33l2.9 -1.46M354.3 309.05l2.9 -1.46M354.3 310.77l2.9 -1.46M354.3 312.49l2.9 -1.46M354.3 314.21l2.9 -1.46M354.3 315.93l2.9 -1.46M354.3 317.65l2.9 -1.46M354.3 319.37l2.9 -1.46M354.3 321.09l2.9 -1.46M354.3 322.81l2.9 -1.46M354.3 324.53l2.9 -1.46M354.3 326.25l2.9 -1.46M354.3 327.97l2.9 -1.46M354.3 329.69l2.9 -1.46M354.3 331.41l2.9 -1.46M354.3 333.13l2.9 -1.46M354.3 334.85l2.9 -1.46M354.3 336.57l2.9 -1.46M354.3 338.29l2.9 -1.46M354.3 340.01l2.9 -1.46M354.3 341.73l2.9 -1.46" stroke="#6e4a20" stroke-width="0.9" fill="none"/>
<polygon points="357.3,340.9 357.7,340.6 357.7,265.5 357.3,265.7" fill="#fff0d0" />
<polygon points="364.5,337.2 367.4,335.8 367.4,260.7 364.5,262.1" fill="#fff0d6" />
<path d="M364.5 262.67l2.8 -1.41M364.5 264.39l2.8 -1.41M364.5 266.11l2.8 -1.41M364.5 267.83l2.8 -1.41M364.5 269.55l2.8 -1.41M364.5 271.27l2.8 -1.41M364.5 272.99l2.8 -1.41M364.5 274.71l2.8 -1.41M364.5 276.43l2.8 -1.41M364.5 278.15l2.8 -1.41M364.5 279.87l2.8 -1.41M364.5 281.59l2.8 -1.41M364.5 283.31l2.8 -1.41M364.5 285.03l2.8 -1.41M364.5 286.75l2.8 -1.41M364.5 288.47l2.8 -1.41M364.5 290.19l2.8 -1.41M364.5 291.91l2.8 -1.41M364.5 293.63l2.8 -1.41M364.5 295.35l2.8 -1.41M364.5 297.07l2.8 -1.41M364.5 298.79l2.8 -1.41M364.5 300.51l2.8 -1.41M364.5 302.23l2.8 -1.41M364.5 303.95l2.8 -1.41M364.5 305.67l2.8 -1.41M364.5 307.39l2.8 -1.41M364.5 309.11l2.8 -1.41M364.5 310.83l2.8 -1.41M364.5 312.55l2.8 -1.41M364.5 314.27l2.8 -1.41M364.5 315.99l2.8 -1.41M364.5 317.71l2.8 -1.41M364.5 319.43l2.8 -1.41M364.5 321.15l2.8 -1.41M364.5 322.87l2.8 -1.41M364.5 324.59l2.8 -1.41M364.5 326.31l2.8 -1.41M364.5 328.03l2.8 -1.41M364.5 329.75l2.8 -1.41M364.5 331.47l2.8 -1.41M364.5 333.19l2.8 -1.41M364.5 334.91l2.8 -1.41M364.5 336.63l2.8 -1.41" stroke="#6e4a20" stroke-width="0.9" fill="none"/>
<polygon points="367.4,335.8 367.8,335.6 367.8,260.4 367.4,260.7" fill="#fff0d0" />
<polygon points="371.0,334.0 371.7,333.6 371.7,258.5 371.0,258.8" fill="#f6d49a" />
<polygon points="350.0,344.5 345.0,342.0 345.0,266.8 350.0,269.3" fill="#ffe9bc" />
<path d="M345.0 267.42l5.0 2.52M345.0 269.14l5.0 2.52M345.0 270.86l5.0 2.52M345.0 272.58l5.0 2.52M345.0 274.30l5.0 2.52M345.0 276.02l5.0 2.52M345.0 277.74l5.0 2.52M345.0 279.46l5.0 2.52M345.0 281.18l5.0 2.52M345.0 282.90l5.0 2.52M345.0 284.62l5.0 2.52M345.0 286.34l5.0 2.52M345.0 288.06l5.0 2.52M345.0 289.78l5.0 2.52M345.0 291.50l5.0 2.52M345.0 293.22l5.0 2.52M345.0 294.94l5.0 2.52M345.0 296.66l5.0 2.52M345.0 298.38l5.0 2.52M345.0 300.10l5.0 2.52M345.0 301.82l5.0 2.52M345.0 303.54l5.0 2.52M345.0 305.26l5.0 2.52M345.0 306.98l5.0 2.52M345.0 308.70l5.0 2.52M345.0 310.42l5.0 2.52M345.0 312.14l5.0 2.52M345.0 313.86l5.0 2.52M345.0 315.58l5.0 2.52M345.0 317.30l5.0 2.52M345.0 319.02l5.0 2.52M345.0 320.74l5.0 2.52M345.0 322.46l5.0 2.52M345.0 324.18l5.0 2.52M345.0 325.90l5.0 2.52M345.0 327.62l5.0 2.52M345.0 329.34l5.0 2.52M345.0 331.06l5.0 2.52M345.0 332.78l5.0 2.52M345.0 334.50l5.0 2.52M345.0 336.22l5.0 2.52M345.0 337.94l5.0 2.52M345.0 339.66l5.0 2.52M345.0 341.38l5.0 2.52" stroke="#cf8a3e" stroke-width="0.92" fill="none"/>
<polygon points="350.0,269.3 341.3,265.0 363.0,254.1 371.7,258.5" fill="#f4cd8b" stroke="#f4cd8b" stroke-width=".3"/>
<polygon points="343.9,263.7 352.6,268.0 352.6,262.0 343.9,257.7" fill="#fdeccc" stroke="#fdeccc" stroke-width=".3"/>
<path d="M343.9 258.29l8.7 4.35M343.9 260.01l8.7 4.35M343.9 261.73l8.7 4.35M343.9 263.45l8.7 4.35" stroke="#6e4a20" stroke-width="0.95" fill="none"/>
<polygon points="352.6,268.0 369.1,259.8 369.1,253.8 352.6,262.0" fill="#ffe9bc" stroke="#ffe9bc" stroke-width=".3"/>
<path d="M352.6 262.64l16.5 -8.25M352.6 264.36l16.5 -8.25M352.6 266.08l16.5 -8.25M352.6 267.80l16.5 -8.25" stroke="#c8843a" stroke-width="0.9" fill="none"/>
<polygon points="352.6,262.0 343.9,257.7 360.4,249.4 369.1,253.8" fill="#f4cd8b" stroke="#f4cd8b" stroke-width=".3"/>
<polygon points="347.4,256.0 356.1,260.3 356.1,257.5 347.4,253.2" fill="#fdeccc" stroke="#fdeccc" stroke-width=".3"/>
<path d="M347.4 253.75l8.7 4.35M347.4 255.47l8.7 4.35" stroke="#6e4a20" stroke-width="0.95" fill="none"/>
<polygon points="356.1,260.3 365.6,255.5 365.6,252.7 356.1,257.5" fill="#e9bd7a" stroke="#e9bd7a" stroke-width=".3"/>
<polygon points="356.1,257.5 347.4,253.2 356.9,248.4 365.6,252.7" fill="#f4cd8b" stroke="#f4cd8b" stroke-width=".3"/>
<polygon points="350.4,252.5 357.4,256.0 357.4,251.1 350.4,247.6" fill="#fdeccc" stroke="#fdeccc" stroke-width=".3"/>
<path d="M350.4 248.20l7.0 3.48M350.4 249.92l7.0 3.48M350.4 251.64l7.0 3.48" stroke="#6e4a20" stroke-width="0.95" fill="none"/>
<polygon points="357.4,256.0 362.6,253.4 362.6,248.5 357.4,251.1" fill="#e6b873" stroke="#e6b873" stroke-width=".3"/>
<polygon points="357.4,251.1 350.4,247.6 355.6,245.0 362.6,248.5" fill="#f7d495" stroke="#f7d495" stroke-width=".3"/>
<polygon points="412.0,367.0 419.0,370.5 419.0,365.9 412.0,362.4" fill="#d8a666" stroke="#d8a666" stroke-width=".3"/>
<polygon points="419.0,370.5 497.0,331.5 497.0,326.9 419.0,365.9" fill="#e9bd7a" stroke="#e9bd7a" stroke-width=".3"/>
<polygon points="419.0,365.9 412.0,362.4 490.0,323.4 497.0,326.9" fill="#f4cd8b" stroke="#f4cd8b" stroke-width=".3"/>
<polygon points="447.0,341.0 457.0,346.0 457.0,282.2 447.0,277.2" fill="#fff0d6" stroke="#fff0d6" stroke-width=".3"/>
<path d="M447.0 277.81l10.0 5.00M447.0 279.53l10.0 5.00M447.0 281.25l10.0 5.00M447.0 282.97l10.0 5.00M447.0 284.69l10.0 5.00M447.0 286.41l10.0 5.00M447.0 288.13l10.0 5.00M447.0 289.85l10.0 5.00M447.0 291.57l10.0 5.00M447.0 293.29l10.0 5.00M447.0 295.01l10.0 5.00M447.0 296.73l10.0 5.00M447.0 298.45l10.0 5.00M447.0 300.17l10.0 5.00M447.0 301.89l10.0 5.00M447.0 303.61l10.0 5.00M447.0 305.33l10.0 5.00M447.0 307.05l10.0 5.00M447.0 308.77l10.0 5.00M447.0 310.49l10.0 5.00M447.0 312.21l10.0 5.00M447.0 313.93l10.0 5.00M447.0 315.65l10.0 5.00M447.0 317.37l10.0 5.00M447.0 319.09l10.0 5.00M447.0 320.81l10.0 5.00M447.0 322.53l10.0 5.00M447.0 324.25l10.0 5.00M447.0 325.97l10.0 5.00M447.0 327.69l10.0 5.00M447.0 329.41l10.0 5.00M447.0 331.13l10.0 5.00M447.0 332.85l10.0 5.00M447.0 334.57l10.0 5.00M447.0 336.29l10.0 5.00M447.0 338.01l10.0 5.00M447.0 339.73l10.0 5.00" stroke="#6e4a20" stroke-width="0.9" fill="none"/>
<polygon points="457.0,346.0 489.3,329.9 489.3,266.1 457.0,282.2" fill="#ffe9bc" stroke="#ffe9bc" stroke-width=".3"/>
<path d="M457.0 282.81l32.3 -16.15M457.0 284.53l32.3 -16.15M457.0 286.25l32.3 -16.15M457.0 287.97l32.3 -16.15M457.0 289.69l32.3 -16.15M457.0 291.41l32.3 -16.15M457.0 293.13l32.3 -16.15M457.0 294.85l32.3 -16.15M457.0 296.57l32.3 -16.15M457.0 298.29l32.3 -16.15M457.0 300.01l32.3 -16.15M457.0 301.73l32.3 -16.15M457.0 303.45l32.3 -16.15M457.0 305.17l32.3 -16.15M457.0 306.89l32.3 -16.15M457.0 308.61l32.3 -16.15M457.0 310.33l32.3 -16.15M457.0 312.05l32.3 -16.15M457.0 313.77l32.3 -16.15M457.0 315.49l32.3 -16.15M457.0 317.21l32.3 -16.15M457.0 318.93l32.3 -16.15M457.0 320.65l32.3 -16.15M457.0 322.37l32.3 -16.15M457.0 324.09l32.3 -16.15M457.0 325.81l32.3 -16.15M457.0 327.53l32.3 -16.15M457.0 329.25l32.3 -16.15M457.0 330.97l32.3 -16.15M457.0 332.69l32.3 -16.15M457.0 334.41l32.3 -16.15M457.0 336.13l32.3 -16.15M457.0 337.85l32.3 -16.15M457.0 339.57l32.3 -16.15M457.0 341.29l32.3 -16.15M457.0 343.01l32.3 -16.15M457.0 344.73l32.3 -16.15" stroke="#cf8a3e" stroke-width="0.92" fill="none"/>
<polygon points="457.0,346.0 458.0,345.5 458.0,281.7 457.0,282.2" fill="#fff0d0" />
<polygon points="463.5,342.8 467.8,340.6 467.8,276.8 463.5,279.0" fill="#fff0d6" />
<path d="M463.5 279.58l4.4 -2.18M463.5 281.30l4.4 -2.18M463.5 283.02l4.4 -2.18M463.5 284.74l4.4 -2.18M463.5 286.46l4.4 -2.18M463.5 288.18l4.4 -2.18M463.5 289.90l4.4 -2.18M463.5 291.62l4.4 -2.18M463.5 293.34l4.4 -2.18M463.5 295.06l4.4 -2.18M463.5 296.78l4.4 -2.18M463.5 298.50l4.4 -2.18M463.5 300.22l4.4 -2.18M463.5 301.94l4.4 -2.18M463.5 303.66l4.4 -2.18M463.5 305.38l4.4 -2.18M463.5 307.10l4.4 -2.18M463.5 308.82l4.4 -2.18M463.5 310.54l4.4 -2.18M463.5 312.26l4.4 -2.18M463.5 313.98l4.4 -2.18M463.5 315.70l4.4 -2.18M463.5 317.42l4.4 -2.18M463.5 319.14l4.4 -2.18M463.5 320.86l4.4 -2.18M463.5 322.58l4.4 -2.18M463.5 324.30l4.4 -2.18M463.5 326.02l4.4 -2.18M463.5 327.74l4.4 -2.18M463.5 329.46l4.4 -2.18M463.5 331.18l4.4 -2.18M463.5 332.90l4.4 -2.18M463.5 334.62l4.4 -2.18M463.5 336.34l4.4 -2.18M463.5 338.06l4.4 -2.18M463.5 339.78l4.4 -2.18M463.5 341.50l4.4 -2.18" stroke="#6e4a20" stroke-width="0.9" fill="none"/>
<polygon points="467.8,340.6 468.5,340.3 468.5,276.5 467.8,276.8" fill="#fff0d0" />
<polygon points="478.6,335.2 482.8,333.1 482.8,269.3 478.6,271.4" fill="#fff0d6" />
<path d="M478.6 271.99l4.2 -2.10M478.6 273.71l4.2 -2.10M478.6 275.43l4.2 -2.10M478.6 277.15l4.2 -2.10M478.6 278.87l4.2 -2.10M478.6 280.59l4.2 -2.10M478.6 282.31l4.2 -2.10M478.6 284.03l4.2 -2.10M478.6 285.75l4.2 -2.10M478.6 287.47l4.2 -2.10M478.6 289.19l4.2 -2.10M478.6 290.91l4.2 -2.10M478.6 292.63l4.2 -2.10M478.6 294.35l4.2 -2.10M478.6 296.07l4.2 -2.10M478.6 297.79l4.2 -2.10M478.6 299.51l4.2 -2.10M478.6 301.23l4.2 -2.10M478.6 302.95l4.2 -2.10M478.6 304.67l4.2 -2.10M478.6 306.39l4.2 -2.10M478.6 308.11l4.2 -2.10M478.6 309.83l4.2 -2.10M478.6 311.55l4.2 -2.10M478.6 313.27l4.2 -2.10M478.6 314.99l4.2 -2.10M478.6 316.71l4.2 -2.10M478.6 318.43l4.2 -2.10M478.6 320.15l4.2 -2.10M478.6 321.87l4.2 -2.10M478.6 323.59l4.2 -2.10M478.6 325.31l4.2 -2.10M478.6 327.03l4.2 -2.10M478.6 328.75l4.2 -2.10M478.6 330.47l4.2 -2.10M478.6 332.19l4.2 -2.10M478.6 333.91l4.2 -2.10" stroke="#6e4a20" stroke-width="0.9" fill="none"/>
<polygon points="482.8,333.1 483.5,332.8 483.5,269.0 482.8,269.3" fill="#fff0d0" />
<polygon points="488.3,330.3 489.3,329.9 489.3,266.1 488.3,266.5" fill="#f6d49a" />
<polygon points="457.0,346.0 451.2,343.1 451.2,279.3 457.0,282.2" fill="#ffe9bc" />
<path d="M451.2 279.91l5.8 2.90M451.2 281.63l5.8 2.90M451.2 283.35l5.8 2.90M451.2 285.07l5.8 2.90M451.2 286.79l5.8 2.90M451.2 288.51l5.8 2.90M451.2 290.23l5.8 2.90M451.2 291.95l5.8 2.90M451.2 293.67l5.8 2.90M451.2 295.39l5.8 2.90M451.2 297.11l5.8 2.90M451.2 298.83l5.8 2.90M451.2 300.55l5.8 2.90M451.2 302.27l5.8 2.90M451.2 303.99l5.8 2.90M451.2 305.71l5.8 2.90M451.2 307.43l5.8 2.90M451.2 309.15l5.8 2.90M451.2 310.87l5.8 2.90M451.2 312.59l5.8 2.90M451.2 314.31l5.8 2.90M451.2 316.03l5.8 2.90M451.2 317.75l5.8 2.90M451.2 319.47l5.8 2.90M451.2 321.19l5.8 2.90M451.2 322.91l5.8 2.90M451.2 324.63l5.8 2.90M451.2 326.35l5.8 2.90M451.2 328.07l5.8 2.90M451.2 329.79l5.8 2.90M451.2 331.51l5.8 2.90M451.2 333.23l5.8 2.90M451.2 334.95l5.8 2.90M451.2 336.67l5.8 2.90M451.2 338.39l5.8 2.90M451.2 340.11l5.8 2.90M451.2 341.83l5.8 2.90" stroke="#cf8a3e" stroke-width="0.92" fill="none"/>
<polygon points="457.0,282.2 447.0,277.2 479.3,261.1 489.3,266.1" fill="#f4cd8b" stroke="#f4cd8b" stroke-width=".3"/>
<polygon points="450.9,275.3 460.9,280.3 460.9,274.3 450.9,269.3" fill="#fdeccc" stroke="#fdeccc" stroke-width=".3"/>
<path d="M450.9 269.88l10.0 5.00M450.9 271.60l10.0 5.00M450.9 273.32l10.0 5.00M450.9 275.04l10.0 5.00" stroke="#6e4a20" stroke-width="0.95" fill="none"/>
<polygon points="460.9,280.3 485.4,268.0 485.4,262.0 460.9,274.3" fill="#ffe9bc" stroke="#ffe9bc" stroke-width=".3"/>
<path d="M460.9 274.88l24.5 -12.27M460.9 276.60l24.5 -12.27M460.9 278.32l24.5 -12.27M460.9 280.04l24.5 -12.27" stroke="#c8843a" stroke-width="0.9" fill="none"/>
<polygon points="460.9,274.3 450.9,269.3 475.4,257.0 485.4,262.0" fill="#f4cd8b" stroke="#f4cd8b" stroke-width=".3"/>
<polygon points="456.0,266.7 466.0,271.7 466.0,268.9 456.0,263.9" fill="#fdeccc" stroke="#fdeccc" stroke-width=".3"/>
<path d="M456.0 264.49l10.0 5.00M456.0 266.21l10.0 5.00" stroke="#6e4a20" stroke-width="0.95" fill="none"/>
<polygon points="466.0,271.7 480.3,264.6 480.3,261.8 466.0,268.9" fill="#e9bd7a" stroke="#e9bd7a" stroke-width=".3"/>
<polygon points="466.0,268.9 456.0,263.9 470.3,256.8 480.3,261.8" fill="#f4cd8b" stroke="#f4cd8b" stroke-width=".3"/>
<polygon points="460.3,262.8 468.3,266.8 468.3,261.9 460.3,257.9" fill="#fdeccc" stroke="#fdeccc" stroke-width=".3"/>
<path d="M460.3 258.48l8.0 4.00M460.3 260.20l8.0 4.00M460.3 261.92l8.0 4.00" stroke="#6e4a20" stroke-width="0.95" fill="none"/>
<polygon points="468.3,266.8 476.0,262.9 476.0,258.0 468.3,261.9" fill="#e6b873" stroke="#e6b873" stroke-width=".3"/>
<polygon points="468.3,261.9 460.3,257.9 468.0,254.0 476.0,258.0" fill="#f7d495" stroke="#f7d495" stroke-width=".3"/>
<polygon points="300.6,356.8 309.0,361.0 309.0,269.0 300.6,264.8" fill="#fff0d6" stroke="#fff0d6" stroke-width=".3"/>
<path d="M300.6 265.39l8.4 4.20M300.6 267.11l8.4 4.20M300.6 268.83l8.4 4.20M300.6 270.55l8.4 4.20M300.6 272.27l8.4 4.20M300.6 273.99l8.4 4.20M300.6 275.71l8.4 4.20M300.6 277.43l8.4 4.20M300.6 279.15l8.4 4.20M300.6 280.87l8.4 4.20M300.6 282.59l8.4 4.20M300.6 284.31l8.4 4.20M300.6 286.03l8.4 4.20M300.6 287.75l8.4 4.20M300.6 289.47l8.4 4.20M300.6 291.19l8.4 4.20M300.6 292.91l8.4 4.20M300.6 294.63l8.4 4.20M300.6 296.35l8.4 4.20M300.6 298.07l8.4 4.20M300.6 299.79l8.4 4.20M300.6 301.51l8.4 4.20M300.6 303.23l8.4 4.20M300.6 304.95l8.4 4.20M300.6 306.67l8.4 4.20M300.6 308.39l8.4 4.20M300.6 310.11l8.4 4.20M300.6 311.83l8.4 4.20M300.6 313.55l8.4 4.20M300.6 315.27l8.4 4.20M300.6 316.99l8.4 4.20M300.6 318.71l8.4 4.20M300.6 320.43l8.4 4.20M300.6 322.15l8.4 4.20M300.6 323.87l8.4 4.20M300.6 325.59l8.4 4.20M300.6 327.31l8.4 4.20M300.6 329.03l8.4 4.20M300.6 330.75l8.4 4.20M300.6 332.47l8.4 4.20M300.6 334.19l8.4 4.20M300.6 335.91l8.4 4.20M300.6 337.63l8.4 4.20M300.6 339.35l8.4 4.20M300.6 341.07l8.4 4.20M300.6 342.79l8.4 4.20M300.6 344.51l8.4 4.20M300.6 346.23l8.4 4.20M300.6 347.95l8.4 4.20M300.6 349.67l8.4 4.20M300.6 351.39l8.4 4.20M300.6 353.11l8.4 4.20M300.6 354.83l8.4 4.20M300.6 356.55l8.4 4.20" stroke="#6e4a20" stroke-width="0.9" fill="none"/>
<polygon points="309.0,361.0 341.6,344.7 341.6,252.7 309.0,269.0" fill="#ffe9bc" stroke="#ffe9bc" stroke-width=".3"/>
<path d="M309.0 269.59l32.6 -16.30M309.0 271.31l32.6 -16.30M309.0 273.03l32.6 -16.30M309.0 274.75l32.6 -16.30M309.0 276.47l32.6 -16.30M309.0 278.19l32.6 -16.30M309.0 279.91l32.6 -16.30M309.0 281.63l32.6 -16.30M309.0 283.35l32.6 -16.30M309.0 285.07l32.6 -16.30M309.0 286.79l32.6 -16.30M309.0 288.51l32.6 -16.30M309.0 290.23l32.6 -16.30M309.0 291.95l32.6 -16.30M309.0 293.67l32.6 -16.30M309.0 295.39l32.6 -16.30M309.0 297.11l32.6 -16.30M309.0 298.83l32.6 -16.30M309.0 300.55l32.6 -16.30M309.0 302.27l32.6 -16.30M309.0 303.99l32.6 -16.30M309.0 305.71l32.6 -16.30M309.0 307.43l32.6 -16.30M309.0 309.15l32.6 -16.30M309.0 310.87l32.6 -16.30M309.0 312.59l32.6 -16.30M309.0 314.31l32.6 -16.30M309.0 316.03l32.6 -16.30M309.0 317.75l32.6 -16.30M309.0 319.47l32.6 -16.30M309.0 321.19l32.6 -16.30M309.0 322.91l32.6 -16.30M309.0 324.63l32.6 -16.30M309.0 326.35l32.6 -16.30M309.0 328.07l32.6 -16.30M309.0 329.79l32.6 -16.30M309.0 331.51l32.6 -16.30M309.0 333.23l32.6 -16.30M309.0 334.95l32.6 -16.30M309.0 336.67l32.6 -16.30M309.0 338.39l32.6 -16.30M309.0 340.11l32.6 -16.30M309.0 341.83l32.6 -16.30M309.0 343.55l32.6 -16.30M309.0 345.27l32.6 -16.30M309.0 346.99l32.6 -16.30M309.0 348.71l32.6 -16.30M309.0 350.43l32.6 -16.30M309.0 352.15l32.6 -16.30M309.0 353.87l32.6 -16.30M309.0 355.59l32.6 -16.30M309.0 357.31l32.6 -16.30M309.0 359.03l32.6 -16.30M309.0 360.75l32.6 -16.30" stroke="#cf8a3e" stroke-width="0.92" fill="none"/>
<polygon points="309.0,361.0 310.0,360.5 310.0,268.5 309.0,269.0" fill="#fff0d0" />
<polygon points="315.5,357.7 319.9,355.5 319.9,263.5 315.5,265.7" fill="#fff0d6" />
<path d="M315.5 266.33l4.4 -2.20M315.5 268.05l4.4 -2.20M315.5 269.77l4.4 -2.20M315.5 271.49l4.4 -2.20M315.5 273.21l4.4 -2.20M315.5 274.93l4.4 -2.20M315.5 276.65l4.4 -2.20M315.5 278.37l4.4 -2.20M315.5 280.09l4.4 -2.20M315.5 281.81l4.4 -2.20M315.5 283.53l4.4 -2.20M315.5 285.25l4.4 -2.20M315.5 286.97l4.4 -2.20M315.5 288.69l4.4 -2.20M315.5 290.41l4.4 -2.20M315.5 292.13l4.4 -2.20M315.5 293.85l4.4 -2.20M315.5 295.57l4.4 -2.20M315.5 297.29l4.4 -2.20M315.5 299.01l4.4 -2.20M315.5 300.73l4.4 -2.20M315.5 302.45l4.4 -2.20M315.5 304.17l4.4 -2.20M315.5 305.89l4.4 -2.20M315.5 307.61l4.4 -2.20M315.5 309.33l4.4 -2.20M315.5 311.05l4.4 -2.20M315.5 312.77l4.4 -2.20M315.5 314.49l4.4 -2.20M315.5 316.21l4.4 -2.20M315.5 317.93l4.4 -2.20M315.5 319.65l4.4 -2.20M315.5 321.37l4.4 -2.20M315.5 323.09l4.4 -2.20M315.5 324.81l4.4 -2.20M315.5 326.53l4.4 -2.20M315.5 328.25l4.4 -2.20M315.5 329.97l4.4 -2.20M315.5 331.69l4.4 -2.20M315.5 333.41l4.4 -2.20M315.5 335.13l4.4 -2.20M315.5 336.85l4.4 -2.20M315.5 338.57l4.4 -2.20M315.5 340.29l4.4 -2.20M315.5 342.01l4.4 -2.20M315.5 343.73l4.4 -2.20M315.5 345.45l4.4 -2.20M315.5 347.17l4.4 -2.20M315.5 348.89l4.4 -2.20M315.5 350.61l4.4 -2.20M315.5 352.33l4.4 -2.20M315.5 354.05l4.4 -2.20M315.5 355.77l4.4 -2.20M315.5 357.49l4.4 -2.20" stroke="#6e4a20" stroke-width="0.9" fill="none"/>
<polygon points="319.9,355.5 320.6,355.2 320.6,263.2 319.9,263.5" fill="#fff0d0" />
<polygon points="330.8,350.1 335.1,348.0 335.1,255.9 330.8,258.1" fill="#fff0d6" />
<path d="M330.8 258.66l4.2 -2.12M330.8 260.38l4.2 -2.12M330.8 262.10l4.2 -2.12M330.8 263.82l4.2 -2.12M330.8 265.54l4.2 -2.12M330.8 267.26l4.2 -2.12M330.8 268.98l4.2 -2.12M330.8 270.70l4.2 -2.12M330.8 272.42l4.2 -2.12M330.8 274.14l4.2 -2.12M330.8 275.86l4.2 -2.12M330.8 277.58l4.2 -2.12M330.8 279.30l4.2 -2.12M330.8 281.02l4.2 -2.12M330.8 282.74l4.2 -2.12M330.8 284.46l4.2 -2.12M330.8 286.18l4.2 -2.12M330.8 287.90l4.2 -2.12M330.8 289.62l4.2 -2.12M330.8 291.34l4.2 -2.12M330.8 293.06l4.2 -2.12M330.8 294.78l4.2 -2.12M330.8 296.50l4.2 -2.12M330.8 298.22l4.2 -2.12M330.8 299.94l4.2 -2.12M330.8 301.66l4.2 -2.12M330.8 303.38l4.2 -2.12M330.8 305.10l4.2 -2.12M330.8 306.82l4.2 -2.12M330.8 308.54l4.2 -2.12M330.8 310.26l4.2 -2.12M330.8 311.98l4.2 -2.12M330.8 313.70l4.2 -2.12M330.8 315.42l4.2 -2.12M330.8 317.14l4.2 -2.12M330.8 318.86l4.2 -2.12M330.8 320.58l4.2 -2.12M330.8 322.30l4.2 -2.12M330.8 324.02l4.2 -2.12M330.8 325.74l4.2 -2.12M330.8 327.46l4.2 -2.12M330.8 329.18l4.2 -2.12M330.8 330.90l4.2 -2.12M330.8 332.62l4.2 -2.12M330.8 334.34l4.2 -2.12M330.8 336.06l4.2 -2.12M330.8 337.78l4.2 -2.12M330.8 339.50l4.2 -2.12M330.8 341.22l4.2 -2.12M330.8 342.94l4.2 -2.12M330.8 344.66l4.2 -2.12M330.8 346.38l4.2 -2.12M330.8 348.10l4.2 -2.12M330.8 349.82l4.2 -2.12" stroke="#6e4a20" stroke-width="0.9" fill="none"/>
<polygon points="335.1,348.0 335.7,347.6 335.7,255.6 335.1,255.9" fill="#fff0d0" />
<polygon points="340.6,345.2 341.6,344.7 341.6,252.7 340.6,253.2" fill="#f6d49a" />
<polygon points="309.0,361.0 304.1,358.6 304.1,266.5 309.0,269.0" fill="#ffe9bc" />
<path d="M304.1 267.15l4.9 2.44M304.1 268.87l4.9 2.44M304.1 270.59l4.9 2.44M304.1 272.31l4.9 2.44M304.1 274.03l4.9 2.44M304.1 275.75l4.9 2.44M304.1 277.47l4.9 2.44M304.1 279.19l4.9 2.44M304.1 280.91l4.9 2.44M304.1 282.63l4.9 2.44M304.1 284.35l4.9 2.44M304.1 286.07l4.9 2.44M304.1 287.79l4.9 2.44M304.1 289.51l4.9 2.44M304.1 291.23l4.9 2.44M304.1 292.95l4.9 2.44M304.1 294.67l4.9 2.44M304.1 296.39l4.9 2.44M304.1 298.11l4.9 2.44M304.1 299.83l4.9 2.44M304.1 301.55l4.9 2.44M304.1 303.27l4.9 2.44M304.1 304.99l4.9 2.44M304.1 306.71l4.9 2.44M304.1 308.43l4.9 2.44M304.1 310.15l4.9 2.44M304.1 311.87l4.9 2.44M304.1 313.59l4.9 2.44M304.1 315.31l4.9 2.44M304.1 317.03l4.9 2.44M304.1 318.75l4.9 2.44M304.1 320.47l4.9 2.44M304.1 322.19l4.9 2.44M304.1 323.91l4.9 2.44M304.1 325.63l4.9 2.44M304.1 327.35l4.9 2.44M304.1 329.07l4.9 2.44M304.1 330.79l4.9 2.44M304.1 332.51l4.9 2.44M304.1 334.23l4.9 2.44M304.1 335.95l4.9 2.44M304.1 337.67l4.9 2.44M304.1 339.39l4.9 2.44M304.1 341.11l4.9 2.44M304.1 342.83l4.9 2.44M304.1 344.55l4.9 2.44M304.1 346.27l4.9 2.44M304.1 347.99l4.9 2.44M304.1 349.71l4.9 2.44M304.1 351.43l4.9 2.44M304.1 353.15l4.9 2.44M304.1 354.87l4.9 2.44M304.1 356.59l4.9 2.44M304.1 358.31l4.9 2.44" stroke="#cf8a3e" stroke-width="0.92" fill="none"/>
<polygon points="309.0,269.0 300.6,264.8 333.2,248.5 341.6,252.7" fill="#f4cd8b" stroke="#f4cd8b" stroke-width=".3"/>
<polygon points="304.5,262.8 312.9,267.0 312.9,261.0 304.5,256.8" fill="#fdeccc" stroke="#fdeccc" stroke-width=".3"/>
<path d="M304.5 257.43l8.4 4.20M304.5 259.15l8.4 4.20M304.5 260.87l8.4 4.20M304.5 262.59l8.4 4.20" stroke="#6e4a20" stroke-width="0.95" fill="none"/>
<polygon points="312.9,267.0 337.7,254.6 337.7,248.6 312.9,261.0" fill="#ffe9bc" stroke="#ffe9bc" stroke-width=".3"/>
<path d="M312.9 261.63l24.8 -12.39M312.9 263.35l24.8 -12.39M312.9 265.07l24.8 -12.39M312.9 266.79l24.8 -12.39" stroke="#c8843a" stroke-width="0.9" fill="none"/>
<polygon points="312.9,261.0 304.5,256.8 329.3,244.4 337.7,248.6" fill="#f4cd8b" stroke="#f4cd8b" stroke-width=".3"/>
<polygon points="309.7,254.2 318.1,258.4 318.1,255.6 309.7,251.4" fill="#fdeccc" stroke="#fdeccc" stroke-width=".3"/>
<path d="M309.7 252.02l8.4 4.20M309.7 253.74l8.4 4.20" stroke="#6e4a20" stroke-width="0.95" fill="none"/>
<polygon points="318.1,258.4 332.5,251.2 332.5,248.4 318.1,255.6" fill="#e9bd7a" stroke="#e9bd7a" stroke-width=".3"/>
<polygon points="318.1,255.6 309.7,251.4 324.1,244.2 332.5,248.4" fill="#f4cd8b" stroke="#f4cd8b" stroke-width=".3"/>
<polygon points="313.8,250.2 320.5,253.6 320.5,248.7 313.8,245.3" fill="#fdeccc" stroke="#fdeccc" stroke-width=".3"/>
<path d="M313.8 245.91l6.7 3.36M313.8 247.63l6.7 3.36M313.8 249.35l6.7 3.36" stroke="#6e4a20" stroke-width="0.95" fill="none"/>
<polygon points="320.5,253.6 328.4,249.7 328.4,244.8 320.5,248.7" fill="#e6b873" stroke="#e6b873" stroke-width=".3"/>
<polygon points="320.5,248.7 313.8,245.3 321.7,241.4 328.4,244.8" fill="#f7d495" stroke="#f7d495" stroke-width=".3"/>
<polygon points="414.0,359.0 422.0,363.0 422.0,278.8 414.0,274.8" fill="#fff0d6" stroke="#fff0d6" stroke-width=".3"/>
<path d="M414.0 275.38l8.0 4.00M414.0 277.10l8.0 4.00M414.0 278.82l8.0 4.00M414.0 280.54l8.0 4.00M414.0 282.26l8.0 4.00M414.0 283.98l8.0 4.00M414.0 285.70l8.0 4.00M414.0 287.42l8.0 4.00M414.0 289.14l8.0 4.00M414.0 290.86l8.0 4.00M414.0 292.58l8.0 4.00M414.0 294.30l8.0 4.00M414.0 296.02l8.0 4.00M414.0 297.74l8.0 4.00M414.0 299.46l8.0 4.00M414.0 301.18l8.0 4.00M414.0 302.90l8.0 4.00M414.0 304.62l8.0 4.00M414.0 306.34l8.0 4.00M414.0 308.06l8.0 4.00M414.0 309.78l8.0 4.00M414.0 311.50l8.0 4.00M414.0 313.22l8.0 4.00M414.0 314.94l8.0 4.00M414.0 316.66l8.0 4.00M414.0 318.38l8.0 4.00M414.0 320.10l8.0 4.00M414.0 321.82l8.0 4.00M414.0 323.54l8.0 4.00M414.0 325.26l8.0 4.00M414.0 326.98l8.0 4.00M414.0 328.70l8.0 4.00M414.0 330.42l8.0 4.00M414.0 332.14l8.0 4.00M414.0 333.86l8.0 4.00M414.0 335.58l8.0 4.00M414.0 337.30l8.0 4.00M414.0 339.02l8.0 4.00M414.0 340.74l8.0 4.00M414.0 342.46l8.0 4.00M414.0 344.18l8.0 4.00M414.0 345.90l8.0 4.00M414.0 347.62l8.0 4.00M414.0 349.34l8.0 4.00M414.0 351.06l8.0 4.00M414.0 352.78l8.0 4.00M414.0 354.50l8.0 4.00M414.0 356.22l8.0 4.00M414.0 357.94l8.0 4.00" stroke="#6e4a20" stroke-width="0.9" fill="none"/>
<polygon points="422.0,363.0 455.8,346.1 455.8,261.9 422.0,278.8" fill="#ffe9bc" stroke="#ffe9bc" stroke-width=".3"/>
<path d="M422.0 279.38l33.8 -16.90M422.0 281.10l33.8 -16.90M422.0 282.82l33.8 -16.90M422.0 284.54l33.8 -16.90M422.0 286.26l33.8 -16.90M422.0 287.98l33.8 -16.90M422.0 289.70l33.8 -16.90M422.0 291.42l33.8 -16.90M422.0 293.14l33.8 -16.90M422.0 294.86l33.8 -16.90M422.0 296.58l33.8 -16.90M422.0 298.30l33.8 -16.90M422.0 300.02l33.8 -16.90M422.0 301.74l33.8 -16.90M422.0 303.46l33.8 -16.90M422.0 305.18l33.8 -16.90M422.0 306.90l33.8 -16.90M422.0 308.62l33.8 -16.90M422.0 310.34l33.8 -16.90M422.0 312.06l33.8 -16.90M422.0 313.78l33.8 -16.90M422.0 315.50l33.8 -16.90M422.0 317.22l33.8 -16.90M422.0 318.94l33.8 -16.90M422.0 320.66l33.8 -16.90M422.0 322.38l33.8 -16.90M422.0 324.10l33.8 -16.90M422.0 325.82l33.8 -16.90M422.0 327.54l33.8 -16.90M422.0 329.26l33.8 -16.90M422.0 330.98l33.8 -16.90M422.0 332.70l33.8 -16.90M422.0 334.42l33.8 -16.90M422.0 336.14l33.8 -16.90M422.0 337.86l33.8 -16.90M422.0 339.58l33.8 -16.90M422.0 341.30l33.8 -16.90M422.0 343.02l33.8 -16.90M422.0 344.74l33.8 -16.90M422.0 346.46l33.8 -16.90M422.0 348.18l33.8 -16.90M422.0 349.90l33.8 -16.90M422.0 351.62l33.8 -16.90M422.0 353.34l33.8 -16.90M422.0 355.06l33.8 -16.90M422.0 356.78l33.8 -16.90M422.0 358.50l33.8 -16.90M422.0 360.22l33.8 -16.90M422.0 361.94l33.8 -16.90" stroke="#cf8a3e" stroke-width="0.92" fill="none"/>
<polygon points="422.0,363.0 423.0,362.5 423.0,278.3 422.0,278.8" fill="#fff0d0" />
<polygon points="428.8,359.6 433.3,357.3 433.3,273.1 428.8,275.4" fill="#fff0d6" />
<path d="M428.8 276.00l4.6 -2.28M428.8 277.72l4.6 -2.28M428.8 279.44l4.6 -2.28M428.8 281.16l4.6 -2.28M428.8 282.88l4.6 -2.28M428.8 284.60l4.6 -2.28M428.8 286.32l4.6 -2.28M428.8 288.04l4.6 -2.28M428.8 289.76l4.6 -2.28M428.8 291.48l4.6 -2.28M428.8 293.20l4.6 -2.28M428.8 294.92l4.6 -2.28M428.8 296.64l4.6 -2.28M428.8 298.36l4.6 -2.28M428.8 300.08l4.6 -2.28M428.8 301.80l4.6 -2.28M428.8 303.52l4.6 -2.28M428.8 305.24l4.6 -2.28M428.8 306.96l4.6 -2.28M428.8 308.68l4.6 -2.28M428.8 310.40l4.6 -2.28M428.8 312.12l4.6 -2.28M428.8 313.84l4.6 -2.28M428.8 315.56l4.6 -2.28M428.8 317.28l4.6 -2.28M428.8 319.00l4.6 -2.28M428.8 320.72l4.6 -2.28M428.8 322.44l4.6 -2.28M428.8 324.16l4.6 -2.28M428.8 325.88l4.6 -2.28M428.8 327.60l4.6 -2.28M428.8 329.32l4.6 -2.28M428.8 331.04l4.6 -2.28M428.8 332.76l4.6 -2.28M428.8 334.48l4.6 -2.28M428.8 336.20l4.6 -2.28M428.8 337.92l4.6 -2.28M428.8 339.64l4.6 -2.28M428.8 341.36l4.6 -2.28M428.8 343.08l4.6 -2.28M428.8 344.80l4.6 -2.28M428.8 346.52l4.6 -2.28M428.8 348.24l4.6 -2.28M428.8 349.96l4.6 -2.28M428.8 351.68l4.6 -2.28M428.8 353.40l4.6 -2.28M428.8 355.12l4.6 -2.28M428.8 356.84l4.6 -2.28M428.8 358.56l4.6 -2.28" stroke="#6e4a20" stroke-width="0.9" fill="none"/>
<polygon points="433.3,357.3 434.0,357.0 434.0,272.8 433.3,273.1" fill="#fff0d0" />
<polygon points="444.6,351.7 449.0,349.5 449.0,265.3 444.6,267.5" fill="#fff0d6" />
<path d="M444.6 268.06l4.4 -2.20M444.6 269.78l4.4 -2.20M444.6 271.50l4.4 -2.20M444.6 273.22l4.4 -2.20M444.6 274.94l4.4 -2.20M444.6 276.66l4.4 -2.20M444.6 278.38l4.4 -2.20M444.6 280.10l4.4 -2.20M444.6 281.82l4.4 -2.20M444.6 283.54l4.4 -2.20M444.6 285.26l4.4 -2.20M444.6 286.98l4.4 -2.20M444.6 288.70l4.4 -2.20M444.6 290.42l4.4 -2.20M444.6 292.14l4.4 -2.20M444.6 293.86l4.4 -2.20M444.6 295.58l4.4 -2.20M444.6 297.30l4.4 -2.20M444.6 299.02l4.4 -2.20M444.6 300.74l4.4 -2.20M444.6 302.46l4.4 -2.20M444.6 304.18l4.4 -2.20M444.6 305.90l4.4 -2.20M444.6 307.62l4.4 -2.20M444.6 309.34l4.4 -2.20M444.6 311.06l4.4 -2.20M444.6 312.78l4.4 -2.20M444.6 314.50l4.4 -2.20M444.6 316.22l4.4 -2.20M444.6 317.94l4.4 -2.20M444.6 319.66l4.4 -2.20M444.6 321.38l4.4 -2.20M444.6 323.10l4.4 -2.20M444.6 324.81l4.4 -2.20M444.6 326.54l4.4 -2.20M444.6 328.25l4.4 -2.20M444.6 329.98l4.4 -2.20M444.6 331.70l4.4 -2.20M444.6 333.42l4.4 -2.20M444.6 335.13l4.4 -2.20M444.6 336.86l4.4 -2.20M444.6 338.58l4.4 -2.20M444.6 340.30l4.4 -2.20M444.6 342.01l4.4 -2.20M444.6 343.74l4.4 -2.20M444.6 345.46l4.4 -2.20M444.6 347.18l4.4 -2.20M444.6 348.89l4.4 -2.20M444.6 350.62l4.4 -2.20" stroke="#6e4a20" stroke-width="0.9" fill="none"/>
<polygon points="449.0,349.5 449.7,349.1 449.7,264.9 449.0,265.3" fill="#fff0d0" />
<polygon points="454.8,346.6 455.8,346.1 455.8,261.9 454.8,262.4" fill="#f6d49a" />
<polygon points="422.0,363.0 417.4,360.7 417.4,276.5 422.0,278.8" fill="#ffe9bc" />
<path d="M417.4 277.06l4.6 2.32M417.4 278.78l4.6 2.32M417.4 280.50l4.6 2.32M417.4 282.22l4.6 2.32M417.4 283.94l4.6 2.32M417.4 285.66l4.6 2.32M417.4 287.38l4.6 2.32M417.4 289.10l4.6 2.32M417.4 290.82l4.6 2.32M417.4 292.54l4.6 2.32M417.4 294.26l4.6 2.32M417.4 295.98l4.6 2.32M417.4 297.70l4.6 2.32M417.4 299.42l4.6 2.32M417.4 301.14l4.6 2.32M417.4 302.86l4.6 2.32M417.4 304.58l4.6 2.32M417.4 306.30l4.6 2.32M417.4 308.02l4.6 2.32M417.4 309.74l4.6 2.32M417.4 311.46l4.6 2.32M417.4 313.18l4.6 2.32M417.4 314.90l4.6 2.32M417.4 316.62l4.6 2.32M417.4 318.34l4.6 2.32M417.4 320.06l4.6 2.32M417.4 321.78l4.6 2.32M417.4 323.50l4.6 2.32M417.4 325.22l4.6 2.32M417.4 326.94l4.6 2.32M417.4 328.66l4.6 2.32M417.4 330.38l4.6 2.32M417.4 332.10l4.6 2.32M417.4 333.82l4.6 2.32M417.4 335.54l4.6 2.32M417.4 337.26l4.6 2.32M417.4 338.98l4.6 2.32M417.4 340.70l4.6 2.32M417.4 342.42l4.6 2.32M417.4 344.14l4.6 2.32M417.4 345.86l4.6 2.32M417.4 347.58l4.6 2.32M417.4 349.30l4.6 2.32M417.4 351.02l4.6 2.32M417.4 352.74l4.6 2.32M417.4 354.46l4.6 2.32M417.4 356.18l4.6 2.32M417.4 357.90l4.6 2.32M417.4 359.62l4.6 2.32" stroke="#cf8a3e" stroke-width="0.92" fill="none"/>
<polygon points="422.0,278.8 414.0,274.8 447.8,257.9 455.8,261.9" fill="#f4cd8b" stroke="#f4cd8b" stroke-width=".3"/>
<polygon points="418.1,272.8 426.1,276.8 426.1,270.8 418.1,266.8" fill="#fdeccc" stroke="#fdeccc" stroke-width=".3"/>
<path d="M418.1 267.35l8.0 4.00M418.1 269.07l8.0 4.00M418.1 270.79l8.0 4.00M418.1 272.51l8.0 4.00" stroke="#6e4a20" stroke-width="0.95" fill="none"/>
<polygon points="426.1,276.8 451.7,263.9 451.7,257.9 426.1,270.8" fill="#ffe9bc" stroke="#ffe9bc" stroke-width=".3"/>
<path d="M426.1 271.35l25.7 -12.84M426.1 273.07l25.7 -12.84M426.1 274.79l25.7 -12.84M426.1 276.51l25.7 -12.84" stroke="#c8843a" stroke-width="0.9" fill="none"/>
<polygon points="426.1,270.8 418.1,266.8 443.7,253.9 451.7,257.9" fill="#f4cd8b" stroke="#f4cd8b" stroke-width=".3"/>
<polygon points="423.5,264.0 431.5,268.0 431.5,265.2 423.5,261.2" fill="#fdeccc" stroke="#fdeccc" stroke-width=".3"/>
<path d="M423.5 261.85l8.0 4.00M423.5 263.57l8.0 4.00" stroke="#6e4a20" stroke-width="0.95" fill="none"/>
<polygon points="431.5,268.0 446.3,260.6 446.3,257.8 431.5,265.2" fill="#e9bd7a" stroke="#e9bd7a" stroke-width=".3"/>
<polygon points="431.5,265.2 423.5,261.2 438.3,253.8 446.3,257.8" fill="#f4cd8b" stroke="#f4cd8b" stroke-width=".3"/>
<polygon points="427.6,260.0 434.0,263.2 434.0,258.3 427.6,255.1" fill="#fdeccc" stroke="#fdeccc" stroke-width=".3"/>
<path d="M427.6 255.66l6.4 3.20M427.6 257.38l6.4 3.20M427.6 259.10l6.4 3.20" stroke="#6e4a20" stroke-width="0.95" fill="none"/>
<polygon points="434.0,263.2 442.2,259.1 442.2,254.2 434.0,258.3" fill="#e6b873" stroke="#e6b873" stroke-width=".3"/>
<polygon points="434.0,258.3 427.6,255.1 435.8,251.0 442.2,254.2" fill="#f7d495" stroke="#f7d495" stroke-width=".3"/>
<polygon points="360.3,384.1 369.0,388.5 369.0,310.9 360.3,306.5" fill="#fff0d6" stroke="#fff0d6" stroke-width=".3"/>
<path d="M360.3 307.11l8.7 4.35M360.3 308.83l8.7 4.35M360.3 310.55l8.7 4.35M360.3 312.27l8.7 4.35M360.3 313.99l8.7 4.35M360.3 315.71l8.7 4.35M360.3 317.43l8.7 4.35M360.3 319.15l8.7 4.35M360.3 320.87l8.7 4.35M360.3 322.59l8.7 4.35M360.3 324.31l8.7 4.35M360.3 326.03l8.7 4.35M360.3 327.75l8.7 4.35M360.3 329.47l8.7 4.35M360.3 331.19l8.7 4.35M360.3 332.91l8.7 4.35M360.3 334.63l8.7 4.35M360.3 336.35l8.7 4.35M360.3 338.07l8.7 4.35M360.3 339.79l8.7 4.35M360.3 341.51l8.7 4.35M360.3 343.23l8.7 4.35M360.3 344.95l8.7 4.35M360.3 346.67l8.7 4.35M360.3 348.39l8.7 4.35M360.3 350.11l8.7 4.35M360.3 351.83l8.7 4.35M360.3 353.55l8.7 4.35M360.3 355.27l8.7 4.35M360.3 356.99l8.7 4.35M360.3 358.71l8.7 4.35M360.3 360.43l8.7 4.35M360.3 362.15l8.7 4.35M360.3 363.87l8.7 4.35M360.3 365.59l8.7 4.35M360.3 367.31l8.7 4.35M360.3 369.03l8.7 4.35M360.3 370.75l8.7 4.35M360.3 372.47l8.7 4.35M360.3 374.19l8.7 4.35M360.3 375.91l8.7 4.35M360.3 377.63l8.7 4.35M360.3 379.35l8.7 4.35M360.3 381.07l8.7 4.35M360.3 382.79l8.7 4.35" stroke="#6e4a20" stroke-width="0.9" fill="none"/>
<polygon points="369.0,388.5 401.4,372.3 401.4,294.7 369.0,310.9" fill="#ffe9bc" stroke="#ffe9bc" stroke-width=".3"/>
<path d="M369.0 311.46l32.4 -16.20M369.0 313.18l32.4 -16.20M369.0 314.90l32.4 -16.20M369.0 316.62l32.4 -16.20M369.0 318.34l32.4 -16.20M369.0 320.06l32.4 -16.20M369.0 321.78l32.4 -16.20M369.0 323.50l32.4 -16.20M369.0 325.22l32.4 -16.20M369.0 326.94l32.4 -16.20M369.0 328.66l32.4 -16.20M369.0 330.38l32.4 -16.20M369.0 332.10l32.4 -16.20M369.0 333.82l32.4 -16.20M369.0 335.54l32.4 -16.20M369.0 337.26l32.4 -16.20M369.0 338.98l32.4 -16.20M369.0 340.70l32.4 -16.20M369.0 342.42l32.4 -16.20M369.0 344.14l32.4 -16.20M369.0 345.86l32.4 -16.20M369.0 347.58l32.4 -16.20M369.0 349.30l32.4 -16.20M369.0 351.02l32.4 -16.20M369.0 352.74l32.4 -16.20M369.0 354.46l32.4 -16.20M369.0 356.18l32.4 -16.20M369.0 357.90l32.4 -16.20M369.0 359.62l32.4 -16.20M369.0 361.34l32.4 -16.20M369.0 363.06l32.4 -16.20M369.0 364.78l32.4 -16.20M369.0 366.50l32.4 -16.20M369.0 368.22l32.4 -16.20M369.0 369.94l32.4 -16.20M369.0 371.66l32.4 -16.20M369.0 373.38l32.4 -16.20M369.0 375.10l32.4 -16.20M369.0 376.82l32.4 -16.20M369.0 378.54l32.4 -16.20M369.0 380.26l32.4 -16.20M369.0 381.98l32.4 -16.20M369.0 383.70l32.4 -16.20M369.0 385.42l32.4 -16.20M369.0 387.14l32.4 -16.20" stroke="#cf8a3e" stroke-width="0.92" fill="none"/>
<polygon points="369.0,388.5 370.0,388.0 370.0,310.4 369.0,310.9" fill="#fff0d0" />
<polygon points="375.5,385.3 379.9,383.1 379.9,305.4 375.5,307.6" fill="#fff0d6" />
<path d="M375.5 308.22l4.4 -2.19M375.5 309.94l4.4 -2.19M375.5 311.66l4.4 -2.19M375.5 313.38l4.4 -2.19M375.5 315.10l4.4 -2.19M375.5 316.82l4.4 -2.19M375.5 318.54l4.4 -2.19M375.5 320.26l4.4 -2.19M375.5 321.98l4.4 -2.19M375.5 323.70l4.4 -2.19M375.5 325.42l4.4 -2.19M375.5 327.14l4.4 -2.19M375.5 328.86l4.4 -2.19M375.5 330.58l4.4 -2.19M375.5 332.30l4.4 -2.19M375.5 334.02l4.4 -2.19M375.5 335.74l4.4 -2.19M375.5 337.46l4.4 -2.19M375.5 339.18l4.4 -2.19M375.5 340.90l4.4 -2.19M375.5 342.62l4.4 -2.19M375.5 344.34l4.4 -2.19M375.5 346.06l4.4 -2.19M375.5 347.78l4.4 -2.19M375.5 349.50l4.4 -2.19M375.5 351.22l4.4 -2.19M375.5 352.94l4.4 -2.19M375.5 354.66l4.4 -2.19M375.5 356.38l4.4 -2.19M375.5 358.10l4.4 -2.19M375.5 359.82l4.4 -2.19M375.5 361.54l4.4 -2.19M375.5 363.26l4.4 -2.19M375.5 364.98l4.4 -2.19M375.5 366.70l4.4 -2.19M375.5 368.42l4.4 -2.19M375.5 370.14l4.4 -2.19M375.5 371.86l4.4 -2.19M375.5 373.58l4.4 -2.19M375.5 375.30l4.4 -2.19M375.5 377.02l4.4 -2.19M375.5 378.74l4.4 -2.19M375.5 380.46l4.4 -2.19M375.5 382.18l4.4 -2.19M375.5 383.90l4.4 -2.19" stroke="#6e4a20" stroke-width="0.9" fill="none"/>
<polygon points="379.9,383.1 380.5,382.7 380.5,305.1 379.9,305.4" fill="#fff0d0" />
<polygon points="390.7,377.6 394.9,375.5 394.9,297.9 390.7,300.0" fill="#fff0d6" />
<path d="M390.7 300.61l4.2 -2.11M390.7 302.32l4.2 -2.11M390.7 304.05l4.2 -2.11M390.7 305.76l4.2 -2.11M390.7 307.49l4.2 -2.11M390.7 309.20l4.2 -2.11M390.7 310.93l4.2 -2.11M390.7 312.64l4.2 -2.11M390.7 314.37l4.2 -2.11M390.7 316.08l4.2 -2.11M390.7 317.81l4.2 -2.11M390.7 319.52l4.2 -2.11M390.7 321.25l4.2 -2.11M390.7 322.96l4.2 -2.11M390.7 324.69l4.2 -2.11M390.7 326.40l4.2 -2.11M390.7 328.12l4.2 -2.11M390.7 329.84l4.2 -2.11M390.7 331.56l4.2 -2.11M390.7 333.28l4.2 -2.11M390.7 335.00l4.2 -2.11M390.7 336.72l4.2 -2.11M390.7 338.44l4.2 -2.11M390.7 340.16l4.2 -2.11M390.7 341.88l4.2 -2.11M390.7 343.60l4.2 -2.11M390.7 345.32l4.2 -2.11M390.7 347.04l4.2 -2.11M390.7 348.76l4.2 -2.11M390.7 350.48l4.2 -2.11M390.7 352.20l4.2 -2.11M390.7 353.92l4.2 -2.11M390.7 355.64l4.2 -2.11M390.7 357.36l4.2 -2.11M390.7 359.08l4.2 -2.11M390.7 360.80l4.2 -2.11M390.7 362.52l4.2 -2.11M390.7 364.25l4.2 -2.11M390.7 365.96l4.2 -2.11M390.7 367.68l4.2 -2.11M390.7 369.40l4.2 -2.11M390.7 371.12l4.2 -2.11M390.7 372.84l4.2 -2.11M390.7 374.56l4.2 -2.11M390.7 376.28l4.2 -2.11" stroke="#6e4a20" stroke-width="0.9" fill="none"/>
<polygon points="394.9,375.5 395.6,375.2 395.6,297.6 394.9,297.9" fill="#fff0d0" />
<polygon points="400.4,372.8 401.4,372.3 401.4,294.7 400.4,295.1" fill="#f6d49a" />
<polygon points="369.0,388.5 364.0,386.0 364.0,308.3 369.0,310.9" fill="#ffe9bc" />
<path d="M364.0 308.94l5.0 2.52M364.0 310.66l5.0 2.52M364.0 312.38l5.0 2.52M364.0 314.10l5.0 2.52M364.0 315.82l5.0 2.52M364.0 317.54l5.0 2.52M364.0 319.26l5.0 2.52M364.0 320.98l5.0 2.52M364.0 322.70l5.0 2.52M364.0 324.42l5.0 2.52M364.0 326.14l5.0 2.52M364.0 327.86l5.0 2.52M364.0 329.58l5.0 2.52M364.0 331.30l5.0 2.52M364.0 333.02l5.0 2.52M364.0 334.74l5.0 2.52M364.0 336.46l5.0 2.52M364.0 338.18l5.0 2.52M364.0 339.90l5.0 2.52M364.0 341.62l5.0 2.52M364.0 343.34l5.0 2.52M364.0 345.06l5.0 2.52M364.0 346.78l5.0 2.52M364.0 348.50l5.0 2.52M364.0 350.22l5.0 2.52M364.0 351.94l5.0 2.52M364.0 353.66l5.0 2.52M364.0 355.38l5.0 2.52M364.0 357.10l5.0 2.52M364.0 358.82l5.0 2.52M364.0 360.54l5.0 2.52M364.0 362.26l5.0 2.52M364.0 363.98l5.0 2.52M364.0 365.70l5.0 2.52M364.0 367.42l5.0 2.52M364.0 369.14l5.0 2.52M364.0 370.86l5.0 2.52M364.0 372.58l5.0 2.52M364.0 374.30l5.0 2.52M364.0 376.02l5.0 2.52M364.0 377.74l5.0 2.52M364.0 379.46l5.0 2.52M364.0 381.18l5.0 2.52M364.0 382.90l5.0 2.52M364.0 384.62l5.0 2.52" stroke="#cf8a3e" stroke-width="0.92" fill="none"/>
<polygon points="369.0,310.9 360.3,306.5 392.7,290.3 401.4,294.7" fill="#f4cd8b" stroke="#f4cd8b" stroke-width=".3"/>
<polygon points="364.2,304.6 372.9,308.9 372.9,302.9 364.2,298.6" fill="#fdeccc" stroke="#fdeccc" stroke-width=".3"/>
<path d="M364.2 299.16l8.7 4.35M364.2 300.88l8.7 4.35M364.2 302.60l8.7 4.35M364.2 304.32l8.7 4.35" stroke="#6e4a20" stroke-width="0.95" fill="none"/>
<polygon points="372.9,308.9 397.5,296.6 397.5,290.6 372.9,302.9" fill="#ffe9bc" stroke="#ffe9bc" stroke-width=".3"/>
<path d="M372.9 303.51l24.6 -12.31M372.9 305.23l24.6 -12.31M372.9 306.95l24.6 -12.31M372.9 308.67l24.6 -12.31" stroke="#c8843a" stroke-width="0.9" fill="none"/>
<polygon points="372.9,302.9 364.2,298.6 388.8,286.3 397.5,290.6" fill="#f4cd8b" stroke="#f4cd8b" stroke-width=".3"/>
<polygon points="369.4,296.0 378.1,300.3 378.1,297.5 369.4,293.2" fill="#fdeccc" stroke="#fdeccc" stroke-width=".3"/>
<path d="M369.4 293.77l8.7 4.35M369.4 295.49l8.7 4.35" stroke="#6e4a20" stroke-width="0.95" fill="none"/>
<polygon points="378.1,300.3 392.3,293.2 392.3,290.4 378.1,297.5" fill="#e9bd7a" stroke="#e9bd7a" stroke-width=".3"/>
<polygon points="378.1,297.5 369.4,293.2 383.6,286.0 392.3,290.4" fill="#f4cd8b" stroke="#f4cd8b" stroke-width=".3"/>
<polygon points="373.5,292.0 380.4,295.5 380.4,290.6 373.5,287.1" fill="#fdeccc" stroke="#fdeccc" stroke-width=".3"/>
<path d="M373.5 287.69l7.0 3.48M373.5 289.41l7.0 3.48M373.5 291.13l7.0 3.48" stroke="#6e4a20" stroke-width="0.95" fill="none"/>
<polygon points="380.4,295.5 388.2,291.6 388.2,286.7 380.4,290.6" fill="#e6b873" stroke="#e6b873" stroke-width=".3"/>
<polygon points="380.4,290.6 373.5,287.1 381.3,283.2 388.2,286.7" fill="#f7d495" stroke="#f7d495" stroke-width=".3"/>
<path d="M328 279.4H375.5M352.7 275.4V283.4" stroke="#8c8c8c" stroke-width=".7" fill="none"/>
<rect x="351.5" y="278.2" width="2.4" height="2.4" fill="none" stroke="#8c8c8c" stroke-width=".5"/>
<g stroke-width=".9" fill="none"><path d="M23.7 400.9V386.5" stroke="#1a1ae0"/><path d="M23.7 400.9L36.6 395.4" stroke="#d01818"/><path d="M23.7 400.9L12.9 395.6" stroke="#18b018"/></g>
<g font-family="Liberation Sans, sans-serif" font-size="4.6"><text x="24.2" y="386.2" fill="#2a2aff">Z</text><text x="36.4" y="395.2" fill="#e02020">X</text><text x="11.4" y="393.4" fill="#20c020">Y</text></g>
</svg>
<div class="abs" style="left:733.6px;top:62.4px;width:91.4px;height:373px;background:#fff"></div>
<div class="ph" style="top:62.2px">属性</div>
<div class="abs" style="left:779.6px;top:70px;width:0.7px;height:180px;background:#d4d8ec"></div>
<div class="ph" style="top:250.8px">指标 计算完成</div>
<svg class="abs" style="left:811.2px;top:63.8px" width="4.4" height="5" viewBox="0 0 4.4 5"><path d="M1.2 .6H3.2V2.4H1.2ZM.4 2.6H4M2.2 2.6V4.4" fill="none" stroke="#16246e" stroke-width=".7"/></svg>
<svg class="abs" style="left:818.6px;top:64.0px" width="4.4" height="4.4" viewBox="0 0 4.4 4.4"><path d="M.6 .6L3.8 3.8M3.8 .6L.6 3.8" stroke="#16246e" stroke-width=".8"/></svg>
<svg class="abs" style="left:811.2px;top:252.4px" width="4.4" height="5" viewBox="0 0 4.4 5"><path d="M1.2 .6H3.2V2.4H1.2ZM.4 2.6H4M2.2 2.6V4.4" fill="none" stroke="#16246e" stroke-width=".7"/></svg>
<svg class="abs" style="left:818.6px;top:252.6px" width="4.4" height="4.4" viewBox="0 0 4.4 4.4"><path d="M.6 .6L3.8 3.8M3.8 .6L.6 3.8" stroke="#16246e" stroke-width=".8"/></svg>
<div class="t row" style="left:738.6px;top:262.4px">类别</div>
<div class="t row c" style="left:796px;top:262.4px">总平值</div>
<div class="abs" style="left:733.6px;top:258.4px;width:84px;height:169px;overflow:hidden">
<div class="t row" style="left:11.6px;top:14.2px;color:#222">规划总用地</div>
<div class="t row" style="left:11.6px;top:23.2px;color:#2a3ce0">规划净用地</div>
<div class="t row c" style="left:62.4px;top:23.2px">88766.84</div>
<div class="t row" style="left:80.6px;top:23.2px">8</div>
<div class="t row" style="left:11.6px;top:32.2px;color:#222">公共绿地</div>
<div class="t row" style="left:11.6px;top:41.2px;color:#222">其它绿地</div>
<div class="t row c" style="left:62.4px;top:41.2px">37192.18</div>
<div class="t row" style="left:80.6px;top:41.2px">3</div>
<div class="t row" style="left:11.6px;top:50.2px;color:#222">道路用地</div>
<div class="t row c" style="left:62.4px;top:50.2px">22694.64</div>
<div class="t row" style="left:80.6px;top:50.2px">2</div>
<div class="t row" style="left:11.6px;top:59.2px;color:#222">总绿地面积</div>
<div class="t row c" style="left:62.4px;top:59.2px">37192.18</div>
<div class="t row" style="left:80.6px;top:59.2px">3</div>
<div class="t row" style="left:11.6px;top:68.2px;color:#222">总建筑面积</div>
<div class="t row c" style="left:62.4px;top:68.2px">326564....</div>
<div class="t row" style="left:80.6px;top:68.2px">3</div>
<div class="t row" style="left:11.6px;top:77.2px;color:#222">基底面积</div>
<div class="t row c" style="left:62.4px;top:77.2px">14657.45</div>
<div class="t row" style="left:80.6px;top:77.2px">1</div>
<div class="t row" style="left:11.6px;top:86.2px;color:#222">容积率</div>
<div class="t row c" style="left:62.4px;top:86.2px">2.93</div>
<div class="t row" style="left:11.6px;top:95.2px;color:#222">绿地率</div>
<div class="t row c" style="left:62.4px;top:95.2px">41.90</div>
<div class="t row" style="left:11.6px;top:104.2px;color:#222">人均绿地面积</div>
<div class="t row" style="left:11.6px;top:113.2px;color:#222">建筑密度</div>
<div class="t row c" style="left:62.4px;top:113.2px">16.51</div>
<div class="t row" style="left:11.6px;top:122.2px;color:#222">机动车泊位</div>
<div class="t row c" style="left:62.4px;top:122.2px">1946</div>
<div class="t row" style="left:11.6px;top:131.2px;color:#222">停车率</div>
<div class="t row" style="left:11.6px;top:140.2px;color:#222">地上停车率</div>
<div class="t row" style="left:11.6px;top:149.2px;color:#222">屋顶绿地</div>
<div class="t row" style="left:11.6px;top:158.2px;color:#222">最大层数</div>
<div class="t row c" style="left:62.4px;top:158.2px">32</div>
<div class="t row" style="left:11.6px;top:167.2px;color:#222">最大高度</div>
<div class="t row c" style="left:62.4px;top:167.2px">100.00</div>
</div>
<div class="abs" style="left:817.6px;top:258.6px;width:7.4px;height:168.6px;background:#f0f0f0"></div>
<div class="abs" style="left:817.8px;top:266px;width:7px;height:145px;background:#cdcdcd"></div>
<svg class="abs" style="left:819px;top:261px" width="4.4" height="3" viewBox="0 0 4.4 3"><path d="M.5 2.5L2.2 .7L3.9 2.5" fill="none" stroke="#555" stroke-width=".7"/></svg>
<svg class="abs" style="left:819px;top:421.6px" width="4.4" height="3" viewBox="0 0 4.4 3"><path d="M.5 .5L2.2 2.3L3.9 .5" fill="none" stroke="#555" stroke-width=".7"/></svg>
<div class="abs" style="left:733.6px;top:427.2px;width:91.4px;height:8px;background:#f0f0f0"></div>
<div class="abs" style="left:742.4px;top:427.6px;width:43px;height:7.2px;background:#cdcdcd"></div>
<svg class="abs" style="left:737px;top:429px" width="3" height="4.4" viewBox="0 0 3 4.4"><path d="M2.5 .5L.7 2.2L2.5 3.9" fill="none" stroke="#555" stroke-width=".7"/></svg>
<svg class="abs" style="left:811.6px;top:429px" width="3" height="4.4" viewBox="0 0 3 4.4"><path d="M.5 .5L2.3 2.2L.5 3.9" fill="none" stroke="#555" stroke-width=".7"/></svg>
<div class="abs" style="left:0;top:424px;width:733.6px;height:9px;background:linear-gradient(#d6daea,#c2c8dc 55%,#b4bad2)"></div>
<svg class="abs" style="left:0;top:423.6px" width="120" height="10.6" viewBox="0 0 120 10.6"><path d="M5.6 2.6L2.6 5.2L5.6 7.8Z" fill="#6a7fc8"/><path d="M8 .4C13 .6 13.5 8.6 19 8.8H70C66 8.6 66 .8 62 .4Z" fill="#c9cede" stroke="#8a92ae" stroke-width=".5"/><path d="M62 .4C66 .8 66 8.6 71 8.8H103.4V.4Z" fill="#ffffff" stroke="#8a92ae" stroke-width=".5"/></svg>
<div class="t" style="left:23.6px;top:426px;font-size:5.4px;color:#1a1a1a;-webkit-text-stroke:.15px #1a1a1a">新新金碧雅苑总平</div>
<div class="t" style="left:77.4px;top:425.8px;font-size:5.6px;color:#000;font-weight:bold">贵井花城</div>
<svg class="abs" style="left:716.4px;top:426px" width="14" height="6" viewBox="0 0 14 6"><path d="M1.6 1L4.2 3L1.6 5Z" fill="#5a70c0"/><path d="M8.4 1.2L11.8 4.8M11.8 1.2L8.4 4.8" stroke="#2a3c9a" stroke-width=".9"/></svg>
<div class="abs" style="left:0;top:435px;width:733.6px;height:1px;background:#14141c"></div>
<div class="abs" style="left:0;top:436px;width:825px;height:11px;background:linear-gradient(#dfe5f3,#cfd6ea)"></div>
<div class="t" style="left:1px;top:439px;font-size:5.1px;color:#2026f4;letter-spacing:.12px;-webkit-text-stroke:.15px #2026f4">486907.275, 3769820.047, 0.000</div>
<div class="abs" style="left:142.4px;top:436.8px;width:12.4px;height:8.6px;background:#fbfcff;border:0.5px solid #aab4d0"></div>
<div class="t c" style="left:148.4px;top:438.6px;font-size:5.4px;color:#16246e">正交</div>
<div class="abs" style="left:156.6px;top:436.8px;width:13.4px;height:8.6px;background:#a9c3f2"></div>
<div class="t c" style="left:163.2px;top:438.6px;font-size:5.4px;color:#16246e">极轴</div>
<div class="abs" style="left:172.0px;top:436.8px;width:13.4px;height:8.6px;background:#a9c3f2"></div>
<div class="t c" style="left:178.6px;top:438.6px;font-size:5.4px;color:#16246e">捕捉</div>
<div class="abs" style="left:187.20000000000002px;top:436.8px;width:13.4px;height:8.6px;background:#a9c3f2"></div>
<div class="t c" style="left:193.8px;top:438.6px;font-size:5.4px;color:#16246e">跟随</div>
<div class="t" style="left:717.2px;top:438.8px;font-size:5.3px;color:#16246e">当前城市: 国标_高住</div>
<div class="t c" style="left:785.6px;top:438.8px;font-size:5.3px;color:#16246e">加速</div>
<div class="t c" style="left:800.4px;top:438.8px;font-size:5.3px;color:#16246e">修正</div>
<div class="t c" style="left:817.2px;top:438.8px;font-size:5.3px;color:#16246e">二维</div>
<div class="abs" style="left:776px;top:437px;width:.6px;height:9px;background:#aeb6d0"></div>
<div class="abs" style="left:793px;top:437px;width:.6px;height:9px;background:#aeb6d0"></div>
<div class="abs" style="left:809px;top:437px;width:.6px;height:9px;background:#aeb6d0"></div>
</body></html>
